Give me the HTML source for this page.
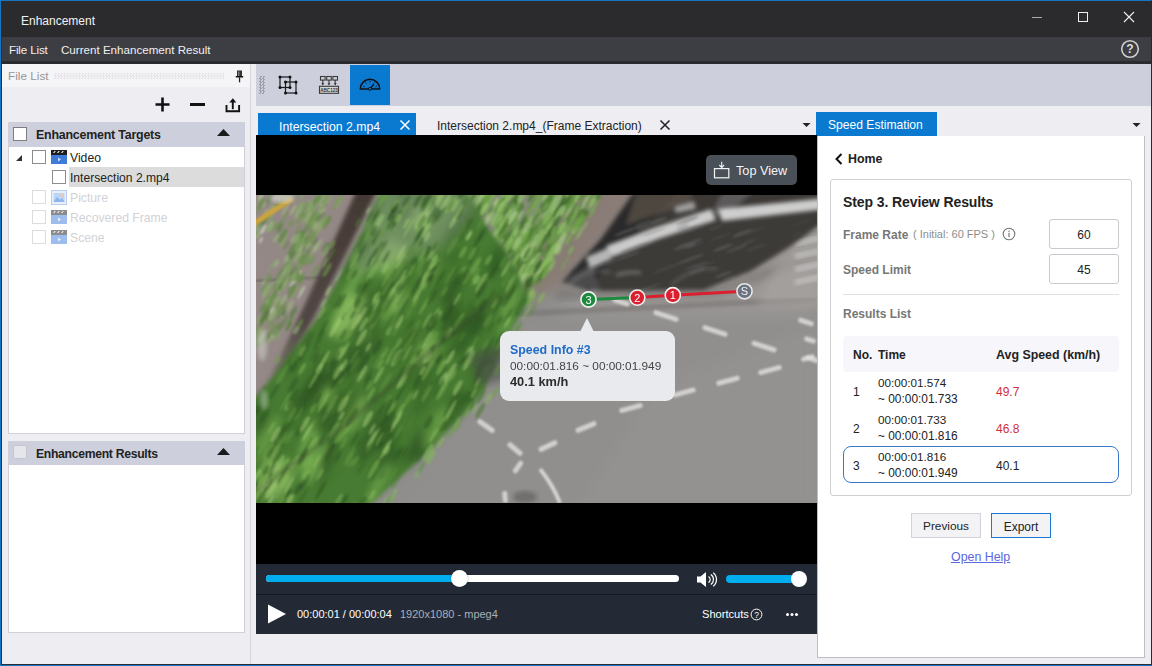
<!DOCTYPE html>
<html><head><meta charset="utf-8">
<style>
*{box-sizing:border-box;margin:0;padding:0}
html,body{width:1152px;height:666px;overflow:hidden;background:#eeeef2;font-family:"Liberation Sans",sans-serif}
.a{position:absolute;white-space:nowrap}
.t{position:absolute;white-space:nowrap;line-height:1}
.cb{position:absolute;width:14px;height:14px;background:#fff;border:1px solid #8d8d8d}
.cbd{position:absolute;width:14px;height:14px;background:#fff;border:1px solid #dcdce0}
</style></head><body>
<!-- window border -->
<div class="a" style="left:0;top:0;width:1152px;height:666px;border:1px solid #1676c4;border-bottom-width:2px;border-right-color:#1d2d3c;background:#eeeef2"></div>
<!-- title bar -->
<div class="a" style="left:1px;top:1px;width:1150px;height:36px;background:#2b2b2d"></div>
<div class="t" style="left:21px;top:15px;color:#f2f2f2;font-size:12px">Enhancement</div>
<div class="a" style="left:1032px;top:16.5px;width:10px;height:1.3px;background:#a8a8a8"></div>
<div class="a" style="left:1078px;top:12px;width:10px;height:10px;border:1px solid #f0f0f0"></div>
<svg class="a" style="left:1123px;top:11px" width="12" height="12" viewBox="0 0 12 12"><path d="M1 1L11 11M11 1L1 11" stroke="#f0f0f0" stroke-width="1.1"/></svg>
<!-- menu bar -->
<div class="a" style="left:1px;top:37px;width:1150px;height:24px;background:#3d3e43"></div>
<div class="a" style="left:1px;top:61px;width:1150px;height:3px;background:#2a2b2e"></div>
<div class="t" style="left:9px;top:44px;color:#f0f0f0;font-size:11.6px;letter-spacing:-0.15px">File List</div>
<div class="t" style="left:61px;top:44px;color:#f0f0f0;font-size:11.6px">Current Enhancement Result</div>
<svg class="a" style="left:1120px;top:39px" width="20" height="20" viewBox="0 0 20 20"><circle cx="10" cy="10" r="8.3" fill="none" stroke="#cfcfcf" stroke-width="1.6"/><text x="10" y="14.3" text-anchor="middle" font-family="Liberation Sans" font-weight="bold" font-size="12" fill="#dcdcdc">?</text></svg>

<!-- left panel -->
<div class="a" style="left:1px;top:64px;width:249px;height:87px;background:#eeeef2"></div>
<div class="a" style="left:1px;top:64px;width:249px;height:23px;background:#f5f5f8"></div>
<div class="a" style="left:250px;top:64px;width:1px;height:600px;background:#d6d6dc"></div>
<div class="t" style="left:8px;top:71px;color:#959595;font-size:11.8px">File List</div>
<div class="a" style="left:54px;top:73px;width:170px;height:6px;background:repeating-conic-gradient(#e4e4e9 0 25%,transparent 0 50%) 0 0/3px 3px"></div>
<svg class="a" style="left:235px;top:70px" width="9" height="13" viewBox="0 0 9 13"><rect x="2" y="0.5" width="5" height="6" fill="#333"/><rect x="3.2" y="1.5" width="1.2" height="4.5" fill="#888"/><rect x="0.8" y="6" width="7.4" height="1.5" fill="#111"/><rect x="3.9" y="7.3" width="1.3" height="5" fill="#222"/></svg>
<!-- + - upload -->
<svg class="a" style="left:154px;top:96px" width="17" height="17" viewBox="0 0 17 17"><path d="M8.5 1.5v14M1.5 8.5h14" stroke="#111" stroke-width="2.6"/></svg>
<div class="a" style="left:190px;top:103px;width:15px;height:3px;background:#111"></div>
<svg class="a" style="left:225px;top:97px" width="16" height="16" viewBox="0 0 16 16"><path d="M1.5 8v6.2h12.6V8" fill="none" stroke="#111" stroke-width="1.9"/><path d="M7.8 12.2V4" stroke="#111" stroke-width="1.9"/><path d="M4.3 5.6L7.8 1.2L11.3 5.6z" fill="#111"/></svg>

<!-- targets -->
<div class="a" style="left:8px;top:122px;width:237px;height:25px;background:#cdd0dc"></div>
<div class="cb" style="left:13px;top:127px;border-color:#7e7e7e"></div>
<div class="t" style="left:36px;top:129px;color:#222;font-size:12.4px;font-weight:bold;letter-spacing:-0.2px">Enhancement Targets</div>
<svg class="a" style="left:216px;top:128px" width="15" height="9" viewBox="0 0 15 9"><path d="M1 8L7.5 1L14 8z" fill="#1a1a1a"/></svg>
<div class="a" style="left:8px;top:147px;width:237px;height:287px;background:#fff;border:1px solid #d0d0d8;border-top:none"></div>
<svg class="a" style="left:15px;top:154px" width="8" height="8" viewBox="0 0 8 8"><path d="M7 1V7H1z" fill="#333"/></svg>
<div class="cb" style="left:32px;top:150px"></div>
<svg class="a vid" style="left:51px;top:150px" width="16" height="14" viewBox="0 0 16 14"><rect x="0" y="0" width="16" height="5" fill="#1e1e1e"/><path d="M2 3l1.5-2h1.3l-1.5 2zM6 3l1.5-2h1.3l-1.5 2zM10 3l1.5-2h1.3l-1.5 2z" fill="#eee"/><rect x="0" y="5" width="16" height="9" fill="#3f7bd8"/><path d="M7 7.5v4l3-2z" fill="#cfe0ff"/></svg>
<div class="t" style="left:70px;top:152px;color:#222;font-size:12.2px">Video</div>
<div class="a" style="left:69px;top:167px;width:175px;height:20px;background:#dcdcdc"></div>
<div class="cb" style="left:52px;top:170px"></div>
<div class="t" style="left:70px;top:172px;color:#222;font-size:12.1px">Intersection 2.mp4</div>
<div class="cbd" style="left:32px;top:190px"></div>
<svg class="a" style="left:51px;top:190px" width="16" height="15" viewBox="0 0 16 15"><rect x="0.5" y="0.5" width="15" height="14" fill="#e8f0fb" stroke="#b9cdf0"/><rect x="2.5" y="3" width="11" height="9" fill="#bcd4f6"/><circle cx="11" cy="5" r="1.6" fill="#f6c8a8"/><path d="M2.5 12L6 7l3 3 2-2 2.5 4z" fill="#8fb3ea"/></svg>
<div class="t" style="left:70px;top:192px;color:#d2d2d6;font-size:12.2px">Picture</div>
<div class="cbd" style="left:32px;top:210px"></div>
<svg class="a" style="left:51px;top:210px" width="16" height="14" viewBox="0 0 16 14"><rect x="0" y="0" width="16" height="5" fill="#8c8c8c"/><path d="M2 3l1.5-2h1.3l-1.5 2zM6 3l1.5-2h1.3l-1.5 2zM10 3l1.5-2h1.3l-1.5 2z" fill="#eee"/><rect x="0" y="5" width="16" height="9" fill="#9dbdee"/><path d="M7 7.5v4l3-2z" fill="#e8f0ff"/></svg>
<div class="t" style="left:70px;top:212px;color:#d2d2d6;font-size:12.2px">Recovered Frame</div>
<div class="cbd" style="left:32px;top:230px"></div>
<svg class="a" style="left:51px;top:230px" width="16" height="14" viewBox="0 0 16 14"><rect x="0" y="0" width="16" height="5" fill="#8c8c8c"/><path d="M2 3l1.5-2h1.3l-1.5 2zM6 3l1.5-2h1.3l-1.5 2zM10 3l1.5-2h1.3l-1.5 2z" fill="#eee"/><rect x="0" y="5" width="16" height="9" fill="#9dbdee"/><path d="M7 7.5v4l3-2z" fill="#e8f0ff"/></svg>
<div class="t" style="left:70px;top:232px;color:#d2d2d6;font-size:12.2px">Scene</div>

<!-- results -->
<div class="a" style="left:8px;top:441px;width:237px;height:24px;background:#cdd0dc"></div>
<div class="cb" style="left:13px;top:445px;background:#e4e6ec;border-color:#c4c6cc"></div>
<div class="t" style="left:36px;top:448px;color:#222;font-size:12.2px;font-weight:bold;letter-spacing:-0.3px">Enhancement Results</div>
<svg class="a" style="left:216px;top:447px" width="15" height="9" viewBox="0 0 15 9"><path d="M1 8L7.5 1L14 8z" fill="#1a1a1a"/></svg>
<div class="a" style="left:8px;top:465px;width:237px;height:168px;background:#fff;border:1px solid #d0d0d8;border-top:none"></div>

<!-- toolbar -->
<div class="a" style="left:256px;top:64px;width:895px;height:42px;background:#cdd0dc"></div>
<div class="a" style="left:259px;top:76px;width:6px;height:18px;background:repeating-conic-gradient(#9fa1a8 0 25%,transparent 0 50%) 0 0/3px 3px"></div>
<svg class="a" style="left:276px;top:74px" width="24" height="22" viewBox="0 0 24 22"><rect x="4" y="3" width="10" height="10.5" fill="none" stroke="#1a1a1a" stroke-width="1.2"/><rect x="9.5" y="8" width="10.5" height="11" fill="none" stroke="#1a1a1a" stroke-width="1.2"/><g fill="#111"><circle cx="4" cy="3" r="1.5"/><circle cx="14" cy="3" r="1.5"/><circle cx="4" cy="13.5" r="1.5"/><circle cx="14" cy="13.5" r="1.5"/><circle cx="9.5" cy="8" r="1.5"/><circle cx="20" cy="8" r="1.5"/><circle cx="9.5" cy="19" r="1.5"/><circle cx="20" cy="19" r="1.5"/></g></svg>
<svg class="a" style="left:318px;top:75px" width="22" height="20" viewBox="0 0 22 20"><g fill="none" stroke="#3a3a3a" stroke-width="1.1"><rect x="2.5" y="1.5" width="4.6" height="3.6"/><rect x="8.7" y="1.5" width="4.6" height="3.6"/><rect x="14.9" y="1.5" width="4.6" height="3.6"/><path d="M4.8 5.1v4M11 5.1v4M17.2 5.1v4"/><rect x="1.5" y="11.3" width="19" height="7" fill="#d6d6d6"/></g><g fill="#333"><path d="M3.3 8.3l1.5 2.2 1.5-2.2zM9.5 8.3l1.5 2.2 1.5-2.2zM15.7 8.3l1.5 2.2 1.5-2.2z"/></g><text x="11" y="16.9" text-anchor="middle" font-family="Liberation Sans" font-weight="bold" font-size="4.6" fill="#333">ABC123</text></svg>
<div class="a" style="left:350px;top:64.5px;width:40px;height:40.5px;background:#0a79d0"></div>
<svg class="a" style="left:358px;top:76px" width="24" height="16" viewBox="0 0 24 16"><path d="M2.3 13A9.7 9.7 0 0 1 21.7 13z" fill="none" stroke="#111" stroke-width="1.5" stroke-linejoin="round"/><path d="M5.2 10.2l1.3 .7M7.5 6.6l.9 1M12 5v1.4M16.5 6.6l-.9 1M18.8 10.2l-1.3 .7" stroke="#111" stroke-width="1"/><path d="M12 12.8L15.8 8" stroke="#111" stroke-width="1.3"/><circle cx="12" cy="12.8" r="1.5" fill="#0a79d0" stroke="#111" stroke-width="1"/></svg>

<!-- tabs -->
<div class="a" style="left:258px;top:113px;width:158px;height:22px;background:#0a79d0"></div>
<div class="t" style="left:279px;top:121px;color:#fff;font-size:12.3px">Intersection 2.mp4</div>
<svg class="a" style="left:399px;top:119px" width="12" height="12" viewBox="0 0 12 12"><path d="M1.5 1.5L10.5 10.5M10.5 1.5L1.5 10.5" stroke="#fff" stroke-width="1.5"/></svg>
<div class="t" style="left:437px;top:120px;color:#222;font-size:12px">Intersection 2.mp4_(Frame Extraction)</div>
<svg class="a" style="left:659px;top:119px" width="12" height="12" viewBox="0 0 12 12"><path d="M1.5 1.5L10.5 10.5M10.5 1.5L1.5 10.5" stroke="#222" stroke-width="1.5"/></svg>
<svg class="a" style="left:802px;top:122px" width="9" height="6" viewBox="0 0 9 6"><path d="M0.5 1h8L4.5 5z" fill="#222"/></svg>
<div class="a" style="left:816px;top:112px;width:121px;height:24px;background:#0a79d0"></div>
<div class="t" style="left:828px;top:119px;color:#fff;font-size:12.1px">Speed Estimation</div>
<svg class="a" style="left:1132px;top:122px" width="9" height="6" viewBox="0 0 9 6"><path d="M0.5 1h8L4.5 5z" fill="#222"/></svg>

<!-- video -->
<div class="a" style="left:256px;top:135px;width:561px;height:429px;background:#000"></div>
<div id="img" class="a" style="left:256px;top:195px;width:561px;height:308px;background:#8f8d8b;overflow:hidden"><svg width="561" height="308" viewBox="0 0 561 308" style="display:block">
<defs><filter id="b2" x="-10%" y="-10%" width="120%" height="120%"><feGaussianBlur stdDeviation="2"/></filter><filter id="b4" x="-20%" y="-20%" width="140%" height="140%"><feGaussianBlur stdDeviation="4"/></filter><filter id="b6" x="-20%" y="-20%" width="140%" height="140%"><feGaussianBlur stdDeviation="7"/></filter><filter id="b1" x="-20%" y="-20%" width="140%" height="140%"><feGaussianBlur stdDeviation="1"/></filter><linearGradient id="tg" x1="0" y1="0" x2="0" y2="1"><stop offset="0" stop-color="#3e332f" stop-opacity=".95"/><stop offset=".65" stop-color="#4a403c" stop-opacity=".9"/><stop offset="1" stop-color="#45503a" stop-opacity="0"/></linearGradient><mask id="tc" maskUnits="userSpaceOnUse" x="-20" y="-20" width="600" height="350"><polygon points="128.0,-10.0 206.0,-10.0 230.0,30.0 254.0,63.0 273.0,105.0 254.0,137.0 228.0,195.0 202.0,225.0 163.0,265.0 105.0,318.0 -10.0,318.0 -10.0,215.0 28.0,168.0 62.0,122.0 100.0,50.0" fill="#fff" filter="url(#b6)"/></mask></defs>
<rect width="561" height="308" fill="#8f8e8c"/>
<g filter="url(#b6)">
<polygon points="-10,-10 128,-10 40,175 -10,215" fill="#948886"/>
<polygon points="320,-10 392,-10 310,88 255,115 270,60" fill="#8a7c76"/>
<polygon points="250,150 561,70 561,318 150,318" fill="#918f8d"/>
<polygon points="400,190 561,130 561,318 320,318" fill="#939290"/>
<polygon points="380,40 561,0 561,120 300,120" fill="#9a9795"/>
</g>
<path d="M-5,86 L70,82" stroke="#6e6663" stroke-width="2.5" filter="url(#b1)" opacity=".8"/>
<path d="M235,120 L400,112 L561,104" stroke="#6f6c6a" stroke-width="4" fill="none" filter="url(#b2)" opacity=".75"/>
<path d="M300,100 L460,97 L561,60" stroke="#5e5b59" stroke-width="6" fill="none" filter="url(#b4)" opacity=".6"/>
<g filter="url(#b1)" fill="#e2e0de">
<rect x="397.0" y="118.5" width="26" height="5" rx="2" opacity=".8" transform="rotate(18 410.0 121.0)"/>
<rect x="446.0" y="133.5" width="26" height="5" rx="2" opacity=".8" transform="rotate(18 459.0 136.0)"/>
<rect x="495.0" y="149.1" width="26" height="5" rx="2" opacity=".8" transform="rotate(18 508.0 151.6)"/>
<rect x="549.0" y="161.5" width="14" height="5" rx="2" opacity=".8" transform="rotate(18 556.0 164.0)"/>
<rect x="356.0" y="104.5" width="18" height="5" rx="2" opacity=".8" transform="rotate(18 365.0 107.0)"/>
<rect x="363.0" y="210.5" width="24" height="5" rx="2" opacity=".8" transform="rotate(-15 375.0 213.0)"/>
<rect x="416.0" y="195.0" width="24" height="5" rx="2" opacity=".8" transform="rotate(-15 428.0 197.5)"/>
<rect x="460.0" y="183.2" width="24" height="5" rx="2" opacity=".8" transform="rotate(-15 472.0 185.7)"/>
<rect x="502.0" y="172.5" width="24" height="5" rx="2" opacity=".8" transform="rotate(-15 514.0 175.0)"/>
<rect x="545.0" y="160.5" width="14" height="5" rx="2" opacity=".8" transform="rotate(-15 552.0 163.0)"/>
<rect x="319.0" y="229.5" width="22" height="5" rx="2" opacity=".8" transform="rotate(-22 330.0 232.0)"/>
<rect x="282.0" y="248.5" width="20" height="5" rx="2" opacity=".8" transform="rotate(-25 292.0 251.0)"/>
<rect x="220.0" y="228.5" width="20" height="5" rx="2" opacity=".8" transform="rotate(35 230.0 231.0)"/>
<rect x="250.0" y="251.5" width="18" height="5" rx="2" opacity=".8" transform="rotate(40 259.0 254.0)"/>
<rect x="255.0" y="269.5" width="14" height="5" rx="2" opacity=".8" transform="rotate(-55 262.0 272.0)"/>
<rect x="243.0" y="299.5" width="12" height="5" rx="2" opacity=".8" transform="rotate(85 249.0 302.0)"/>
<rect x="542.0" y="124.5" width="16" height="5" rx="2" opacity=".8" transform="rotate(18 550.0 127.0)"/>
<rect x="548.0" y="142.5" width="12" height="5" rx="2" opacity=".8" transform="rotate(18 554.0 145.0)"/>
</g>
<path d="M284,274 Q297,290 304,308" stroke="#e2e0de" stroke-width="4" fill="none" filter="url(#b1)" opacity=".85"/>
<ellipse cx="269" cy="302" rx="12" ry="6" fill="#5a5a58" opacity=".6" filter="url(#b2)"/>
<polygon points="520,70 570,30 570,110 500,110" fill="#a8a5a3" opacity=".6" filter="url(#b4)"/>
<rect x="538" y="30" width="30" height="6" fill="#cfcdcb" opacity=".6" filter="url(#b2)" transform="rotate(-12 550 30)"/>
<rect x="538" y="43" width="30" height="6" fill="#cfcdcb" opacity=".6" filter="url(#b2)" transform="rotate(-12 550 43)"/>
<rect x="538" y="56" width="30" height="6" fill="#cfcdcb" opacity=".6" filter="url(#b2)" transform="rotate(-12 550 56)"/>
<rect x="538" y="69" width="30" height="6" fill="#cfcdcb" opacity=".6" filter="url(#b2)" transform="rotate(-12 550 69)"/>
<rect x="538" y="82" width="30" height="6" fill="#cfcdcb" opacity=".6" filter="url(#b2)" transform="rotate(-12 550 82)"/>
<g filter="url(#b2)"><polygon points="306.0,87.0 344.0,96.0 448.0,95.0 495.0,76.0 532.0,53.0 570.0,26.0 570.0,-10.0 383.0,-10.0 345.0,44.0" fill="#3d3b39"/>
<polygon points="306,87 345,44 383,-10 430,-10 380,40 350,70 335,96" fill="#2a2a2a"/>
<polygon points="383,-10 470,-10 420,12 370,30" fill="#5e524a" opacity=".7"/>
<polygon points="440,-10 570,-10 570,6 430,18" fill="#3a3836"/>
<polygon points="470,-10 505,-10 470,20 455,20" fill="#6a6a6a" opacity=".7"/>
<polygon points="306,87 335,70 345,96" fill="#4c4c4c"/>
</g>
<g filter="url(#b2)" fill="none" stroke="#8a8a8a" stroke-width="2.5" opacity=".45">
<path d="M312,92 Q330,70 355,78"/><path d="M415,90 Q440,70 462,74"/><path d="M360,80 Q375,76 385,78" stroke="#cfcfcf"/>
</g>
<g filter="url(#b2)">
<polygon points="350,51 398,33 455,14 460,25 402,44 356,62" fill="#d8d8d8" opacity=".92"/>
<polygon points="462,14 570,3 570,14 466,26" fill="#dedede" opacity=".9"/>
<polygon points="330,62 352,53 356,64 334,74" fill="#cfcfcf" opacity=".85"/>
<polygon points="418,12 438,6 440,14 420,18" fill="#cccccc" opacity=".7"/>
</g>
<g filter="url(#b1)" opacity=".5">
<ellipse cx="434.0" cy="64.2" rx="15.2" ry="1.4" fill="#777" opacity=".7" transform="rotate(-20 434.0 64.2)"/>
<ellipse cx="372.5" cy="60.8" rx="12.3" ry="1.8" fill="#666" opacity=".7" transform="rotate(-20 372.5 60.8)"/>
<ellipse cx="432.7" cy="34.9" rx="11.4" ry="1.9" fill="#666" opacity=".7" transform="rotate(-20 432.7 34.9)"/>
<ellipse cx="467.0" cy="52.7" rx="10.5" ry="1.7" fill="#777" opacity=".7" transform="rotate(-20 467.0 52.7)"/>
<ellipse cx="473.3" cy="83.2" rx="6.6" ry="0.8" fill="#777" opacity=".7" transform="rotate(-20 473.3 83.2)"/>
<ellipse cx="467.9" cy="79.5" rx="9.3" ry="1.5" fill="#777" opacity=".7" transform="rotate(-20 467.9 79.5)"/>
<ellipse cx="449.4" cy="69.8" rx="11.0" ry="1.6" fill="#555" opacity=".7" transform="rotate(-20 449.4 69.8)"/>
<ellipse cx="480.6" cy="53.5" rx="11.5" ry="1.9" fill="#666" opacity=".7" transform="rotate(-20 480.6 53.5)"/>
<ellipse cx="492.8" cy="47.1" rx="8.3" ry="1.1" fill="#666" opacity=".7" transform="rotate(-20 492.8 47.1)"/>
<ellipse cx="459.5" cy="32.6" rx="7.1" ry="1.1" fill="#666" opacity=".7" transform="rotate(-20 459.5 32.6)"/>
<ellipse cx="346.8" cy="69.1" rx="13.8" ry="1.1" fill="#666" opacity=".7" transform="rotate(-20 346.8 69.1)"/>
<ellipse cx="401.6" cy="26.1" rx="10.1" ry="1.9" fill="#777" opacity=".7" transform="rotate(-20 401.6 26.1)"/>
<ellipse cx="386.7" cy="32.1" rx="6.6" ry="1.8" fill="#777" opacity=".7" transform="rotate(-20 386.7 32.1)"/>
<ellipse cx="486.9" cy="38.2" rx="11.1" ry="2.0" fill="#777" opacity=".7" transform="rotate(-20 486.9 38.2)"/>
<ellipse cx="426.4" cy="51.9" rx="9.9" ry="2.0" fill="#666" opacity=".7" transform="rotate(-20 426.4 51.9)"/>
<ellipse cx="392.1" cy="93.0" rx="14.0" ry="1.2" fill="#666" opacity=".7" transform="rotate(-20 392.1 93.0)"/>
<ellipse cx="378.5" cy="52.6" rx="14.5" ry="1.6" fill="#666" opacity=".7" transform="rotate(-20 378.5 52.6)"/>
<ellipse cx="431.6" cy="25.7" rx="12.1" ry="1.8" fill="#555" opacity=".7" transform="rotate(-20 431.6 25.7)"/>
<ellipse cx="464.0" cy="42.0" rx="12.0" ry="1.2" fill="#555" opacity=".7" transform="rotate(-20 464.0 42.0)"/>
<ellipse cx="359.3" cy="66.1" rx="14.3" ry="1.0" fill="#555" opacity=".7" transform="rotate(-20 359.3 66.1)"/>
<ellipse cx="372.1" cy="35.8" rx="15.1" ry="1.8" fill="#777" opacity=".7" transform="rotate(-20 372.1 35.8)"/>
<ellipse cx="496.8" cy="36.1" rx="12.3" ry="1.5" fill="#555" opacity=".7" transform="rotate(-20 496.8 36.1)"/>
<ellipse cx="426.9" cy="32.3" rx="6.4" ry="2.0" fill="#777" opacity=".7" transform="rotate(-20 426.9 32.3)"/>
<ellipse cx="500.2" cy="52.4" rx="10.2" ry="1.9" fill="#555" opacity=".7" transform="rotate(-20 500.2 52.4)"/>
<ellipse cx="397.5" cy="37.3" rx="13.2" ry="0.9" fill="#777" opacity=".7" transform="rotate(-20 397.5 37.3)"/>
<ellipse cx="440.2" cy="70.7" rx="12.2" ry="0.9" fill="#777" opacity=".7" transform="rotate(-20 440.2 70.7)"/>
<ellipse cx="541.0" cy="39.3" rx="6.2" ry="1.1" fill="#555" opacity=".7" transform="rotate(-20 541.0 39.3)"/>
<ellipse cx="387.3" cy="28.3" rx="8.8" ry="1.4" fill="#777" opacity=".7" transform="rotate(-20 387.3 28.3)"/>
<ellipse cx="433.6" cy="48.2" rx="13.3" ry="1.4" fill="#777" opacity=".7" transform="rotate(-20 433.6 48.2)"/>
<ellipse cx="439.2" cy="50.0" rx="9.1" ry="0.8" fill="#666" opacity=".7" transform="rotate(-20 439.2 50.0)"/>
<ellipse cx="440.9" cy="76.1" rx="9.2" ry="2.0" fill="#666" opacity=".7" transform="rotate(-20 440.9 76.1)"/>
<ellipse cx="434.2" cy="50.7" rx="6.4" ry="1.9" fill="#777" opacity=".7" transform="rotate(-20 434.2 50.7)"/>
<ellipse cx="410.9" cy="73.0" rx="15.0" ry="1.8" fill="#555" opacity=".7" transform="rotate(-20 410.9 73.0)"/>
<ellipse cx="547.2" cy="27.1" rx="11.0" ry="0.8" fill="#555" opacity=".7" transform="rotate(-20 547.2 27.1)"/>
<ellipse cx="417.2" cy="25.9" rx="6.7" ry="0.9" fill="#666" opacity=".7" transform="rotate(-20 417.2 25.9)"/>
</g>
<path d="M103,-10 L124,-10 L58,122 L36,165 L14,205 L2,205 L24,162 L44,120z" fill="url(#tg)" filter="url(#b2)"/>
<g filter="url(#b1)">
<ellipse cx="28.3" cy="-2.3" rx="3.9" ry="2.0" fill="#6a8c4a" opacity=".7" transform="rotate(-60 28.3 -2.3)"/>
<ellipse cx="59.8" cy="51.7" rx="7.0" ry="1.3" fill="#a6bc88" opacity=".7" transform="rotate(-60 59.8 51.7)"/>
<ellipse cx="12.7" cy="111.7" rx="7.3" ry="2.5" fill="#7a9a5a" opacity=".7" transform="rotate(-60 12.7 111.7)"/>
<ellipse cx="4.7" cy="2.4" rx="3.2" ry="2.1" fill="#c4ccbc" opacity=".7" transform="rotate(-60 4.7 2.4)"/>
<ellipse cx="69.2" cy="67.6" rx="6.8" ry="1.6" fill="#7a9a5a" opacity=".7" transform="rotate(-60 69.2 67.6)"/>
<ellipse cx="9.2" cy="120.8" rx="8.8" ry="2.1" fill="#6a8c4a" opacity=".7" transform="rotate(-60 9.2 120.8)"/>
<ellipse cx="20.9" cy="106.7" rx="7.3" ry="2.2" fill="#8aae66" opacity=".7" transform="rotate(-60 20.9 106.7)"/>
<ellipse cx="64.5" cy="3.5" rx="4.6" ry="1.6" fill="#8aae66" opacity=".7" transform="rotate(-60 64.5 3.5)"/>
<ellipse cx="112.8" cy="15.5" rx="3.8" ry="1.7" fill="#a6bc88" opacity=".7" transform="rotate(-60 112.8 15.5)"/>
<ellipse cx="44.0" cy="128.7" rx="5.8" ry="2.0" fill="#6a8c4a" opacity=".7" transform="rotate(-60 44.0 128.7)"/>
<ellipse cx="21.6" cy="164.7" rx="4.3" ry="2.4" fill="#7a9a5a" opacity=".7" transform="rotate(-60 21.6 164.7)"/>
<ellipse cx="23.8" cy="118.8" rx="8.0" ry="1.9" fill="#6a8c4a" opacity=".7" transform="rotate(-60 23.8 118.8)"/>
<ellipse cx="16.4" cy="115.8" rx="4.5" ry="2.1" fill="#c4ccbc" opacity=".7" transform="rotate(-60 16.4 115.8)"/>
<ellipse cx="7.1" cy="34.2" rx="5.8" ry="2.5" fill="#c4ccbc" opacity=".7" transform="rotate(-60 7.1 34.2)"/>
<ellipse cx="27.0" cy="110.9" rx="5.6" ry="2.3" fill="#6a8c4a" opacity=".7" transform="rotate(-60 27.0 110.9)"/>
<ellipse cx="63.8" cy="32.5" rx="8.2" ry="1.9" fill="#8aae66" opacity=".7" transform="rotate(-60 63.8 32.5)"/>
<ellipse cx="71.3" cy="27.1" rx="8.4" ry="1.5" fill="#6a8c4a" opacity=".7" transform="rotate(-60 71.3 27.1)"/>
<ellipse cx="110.4" cy="26.5" rx="3.8" ry="1.1" fill="#8aae66" opacity=".7" transform="rotate(-60 110.4 26.5)"/>
<ellipse cx="45.4" cy="97.2" rx="7.7" ry="1.2" fill="#c4ccbc" opacity=".7" transform="rotate(-60 45.4 97.2)"/>
<ellipse cx="-2.7" cy="42.2" rx="8.5" ry="2.5" fill="#6a8c4a" opacity=".7" transform="rotate(-60 -2.7 42.2)"/>
<ellipse cx="10.0" cy="113.8" rx="6.0" ry="2.1" fill="#6a8c4a" opacity=".7" transform="rotate(-60 10.0 113.8)"/>
<ellipse cx="19.6" cy="11.6" rx="3.1" ry="2.2" fill="#7a9a5a" opacity=".7" transform="rotate(-60 19.6 11.6)"/>
<ellipse cx="57.6" cy="39.5" rx="4.2" ry="2.3" fill="#7a9a5a" opacity=".7" transform="rotate(-60 57.6 39.5)"/>
<ellipse cx="7.4" cy="9.6" rx="3.5" ry="1.2" fill="#a6bc88" opacity=".7" transform="rotate(-60 7.4 9.6)"/>
<ellipse cx="22.3" cy="82.7" rx="8.1" ry="1.3" fill="#7a9a5a" opacity=".7" transform="rotate(-60 22.3 82.7)"/>
<ellipse cx="47.7" cy="40.9" rx="3.6" ry="2.3" fill="#8aae66" opacity=".7" transform="rotate(-60 47.7 40.9)"/>
<ellipse cx="37.1" cy="14.9" rx="6.4" ry="1.3" fill="#a6bc88" opacity=".7" transform="rotate(-60 37.1 14.9)"/>
<ellipse cx="71.0" cy="75.1" rx="8.5" ry="2.2" fill="#6a8c4a" opacity=".7" transform="rotate(-60 71.0 75.1)"/>
<ellipse cx="76.1" cy="49.5" rx="5.0" ry="2.1" fill="#6a8c4a" opacity=".7" transform="rotate(-60 76.1 49.5)"/>
<ellipse cx="-2.0" cy="139.6" rx="4.5" ry="1.6" fill="#8aae66" opacity=".7" transform="rotate(-60 -2.0 139.6)"/>
<ellipse cx="1.6" cy="40.9" rx="3.1" ry="1.4" fill="#a6bc88" opacity=".7" transform="rotate(-60 1.6 40.9)"/>
<ellipse cx="30.8" cy="75.1" rx="6.0" ry="2.5" fill="#c4ccbc" opacity=".7" transform="rotate(-60 30.8 75.1)"/>
<ellipse cx="4.9" cy="135.4" rx="5.3" ry="2.5" fill="#7a9a5a" opacity=".7" transform="rotate(-60 4.9 135.4)"/>
<ellipse cx="72.6" cy="96.0" rx="5.5" ry="1.8" fill="#a6bc88" opacity=".7" transform="rotate(-60 72.6 96.0)"/>
<ellipse cx="0.6" cy="31.8" rx="3.3" ry="1.5" fill="#a6bc88" opacity=".7" transform="rotate(-60 0.6 31.8)"/>
<ellipse cx="49.2" cy="22.7" rx="5.1" ry="1.2" fill="#7a9a5a" opacity=".7" transform="rotate(-60 49.2 22.7)"/>
<ellipse cx="83.7" cy="80.5" rx="7.9" ry="1.2" fill="#c4ccbc" opacity=".7" transform="rotate(-60 83.7 80.5)"/>
<ellipse cx="-3.8" cy="56.0" rx="6.7" ry="1.2" fill="#7a9a5a" opacity=".7" transform="rotate(-60 -3.8 56.0)"/>
<ellipse cx="65.4" cy="12.0" rx="8.5" ry="1.3" fill="#7a9a5a" opacity=".7" transform="rotate(-60 65.4 12.0)"/>
<ellipse cx="59.3" cy="26.3" rx="7.8" ry="1.7" fill="#7a9a5a" opacity=".7" transform="rotate(-60 59.3 26.3)"/>
<ellipse cx="14.6" cy="31.1" rx="5.0" ry="1.9" fill="#c4ccbc" opacity=".7" transform="rotate(-60 14.6 31.1)"/>
<ellipse cx="68.3" cy="108.9" rx="4.8" ry="2.2" fill="#a6bc88" opacity=".7" transform="rotate(-60 68.3 108.9)"/>
<ellipse cx="4.9" cy="45.1" rx="3.5" ry="1.5" fill="#c4ccbc" opacity=".7" transform="rotate(-60 4.9 45.1)"/>
<ellipse cx="36.3" cy="88.9" rx="4.5" ry="1.6" fill="#c4ccbc" opacity=".7" transform="rotate(-60 36.3 88.9)"/>
<ellipse cx="42.5" cy="80.4" rx="6.5" ry="2.3" fill="#a6bc88" opacity=".7" transform="rotate(-60 42.5 80.4)"/>
</g>
<g filter="url(#b1)">
<ellipse cx="49.4" cy="60.7" rx="7.8" ry="2.6" fill="#6f9450" opacity=".55" transform="rotate(-60 49.4 60.7)"/>
<ellipse cx="59.6" cy="46.6" rx="4.3" ry="1.5" fill="#4e7438" opacity=".55" transform="rotate(-60 59.6 46.6)"/>
<ellipse cx="69.6" cy="52.6" rx="6.7" ry="2.5" fill="#4e7438" opacity=".55" transform="rotate(-60 69.6 52.6)"/>
<ellipse cx="66.2" cy="13.6" rx="8.5" ry="1.3" fill="#6f9450" opacity=".55" transform="rotate(-60 66.2 13.6)"/>
<ellipse cx="38.0" cy="97.6" rx="7.6" ry="2.0" fill="#83a862" opacity=".55" transform="rotate(-60 38.0 97.6)"/>
<ellipse cx="18.3" cy="139.0" rx="6.0" ry="1.7" fill="#9cb880" opacity=".55" transform="rotate(-60 18.3 139.0)"/>
<ellipse cx="-2.8" cy="138.7" rx="7.5" ry="2.7" fill="#6f9450" opacity=".55" transform="rotate(-60 -2.8 138.7)"/>
<ellipse cx="35.4" cy="54.8" rx="8.3" ry="2.5" fill="#5d8442" opacity=".55" transform="rotate(-60 35.4 54.8)"/>
<ellipse cx="32.3" cy="131.3" rx="5.8" ry="1.2" fill="#4e7438" opacity=".55" transform="rotate(-60 32.3 131.3)"/>
<ellipse cx="52.3" cy="8.0" rx="5.2" ry="1.5" fill="#83a862" opacity=".55" transform="rotate(-60 52.3 8.0)"/>
<ellipse cx="22.2" cy="91.0" rx="5.5" ry="2.8" fill="#4e7438" opacity=".55" transform="rotate(-60 22.2 91.0)"/>
<ellipse cx="59.2" cy="4.7" rx="5.5" ry="1.4" fill="#6f9450" opacity=".55" transform="rotate(-60 59.2 4.7)"/>
<ellipse cx="16.1" cy="141.3" rx="8.5" ry="1.3" fill="#9cb880" opacity=".55" transform="rotate(-60 16.1 141.3)"/>
<ellipse cx="53.9" cy="11.5" rx="6.9" ry="2.2" fill="#83a862" opacity=".55" transform="rotate(-60 53.9 11.5)"/>
<ellipse cx="31.0" cy="63.6" rx="4.9" ry="2.4" fill="#9cb880" opacity=".55" transform="rotate(-60 31.0 63.6)"/>
<ellipse cx="50.1" cy="45.2" rx="6.4" ry="1.6" fill="#4e7438" opacity=".55" transform="rotate(-60 50.1 45.2)"/>
<ellipse cx="16.4" cy="133.5" rx="6.4" ry="1.6" fill="#6f9450" opacity=".55" transform="rotate(-60 16.4 133.5)"/>
<ellipse cx="68.3" cy="4.9" rx="8.9" ry="2.5" fill="#9cb880" opacity=".55" transform="rotate(-60 68.3 4.9)"/>
<ellipse cx="20.7" cy="113.4" rx="8.4" ry="2.6" fill="#6f9450" opacity=".55" transform="rotate(-60 20.7 113.4)"/>
<ellipse cx="34.8" cy="64.0" rx="7.0" ry="1.5" fill="#9cb880" opacity=".55" transform="rotate(-60 34.8 64.0)"/>
<ellipse cx="61.2" cy="21.2" rx="4.7" ry="2.4" fill="#4e7438" opacity=".55" transform="rotate(-60 61.2 21.2)"/>
<ellipse cx="34.8" cy="93.9" rx="4.8" ry="2.4" fill="#6f9450" opacity=".55" transform="rotate(-60 34.8 93.9)"/>
<ellipse cx="83.8" cy="4.4" rx="5.8" ry="2.2" fill="#6f9450" opacity=".55" transform="rotate(-60 83.8 4.4)"/>
<ellipse cx="20.3" cy="68.5" rx="4.4" ry="2.4" fill="#9cb880" opacity=".55" transform="rotate(-60 20.3 68.5)"/>
<ellipse cx="28.9" cy="78.4" rx="8.6" ry="1.3" fill="#83a862" opacity=".55" transform="rotate(-60 28.9 78.4)"/>
<ellipse cx="10.3" cy="120.6" rx="6.1" ry="2.0" fill="#4e7438" opacity=".55" transform="rotate(-60 10.3 120.6)"/>
<ellipse cx="11.6" cy="142.4" rx="5.5" ry="1.9" fill="#4e7438" opacity=".55" transform="rotate(-60 11.6 142.4)"/>
<ellipse cx="17.7" cy="103.4" rx="4.5" ry="1.8" fill="#83a862" opacity=".55" transform="rotate(-60 17.7 103.4)"/>
<ellipse cx="58.8" cy="76.5" rx="8.3" ry="2.3" fill="#6f9450" opacity=".55" transform="rotate(-60 58.8 76.5)"/>
<ellipse cx="32.8" cy="67.5" rx="6.3" ry="1.2" fill="#6f9450" opacity=".55" transform="rotate(-60 32.8 67.5)"/>
<ellipse cx="3.6" cy="145.8" rx="7.1" ry="2.7" fill="#5d8442" opacity=".55" transform="rotate(-60 3.6 145.8)"/>
<ellipse cx="15.5" cy="106.3" rx="6.8" ry="1.3" fill="#9cb880" opacity=".55" transform="rotate(-60 15.5 106.3)"/>
<ellipse cx="54.3" cy="25.8" rx="6.8" ry="2.4" fill="#5d8442" opacity=".55" transform="rotate(-60 54.3 25.8)"/>
<ellipse cx="54.7" cy="50.1" rx="4.5" ry="2.2" fill="#6f9450" opacity=".55" transform="rotate(-60 54.7 50.1)"/>
<ellipse cx="56.7" cy="17.1" rx="8.2" ry="2.1" fill="#6f9450" opacity=".55" transform="rotate(-60 56.7 17.1)"/>
<ellipse cx="59.7" cy="10.9" rx="8.9" ry="1.9" fill="#83a862" opacity=".55" transform="rotate(-60 59.7 10.9)"/>
<ellipse cx="10.1" cy="107.6" rx="7.2" ry="2.4" fill="#83a862" opacity=".55" transform="rotate(-60 10.1 107.6)"/>
<ellipse cx="27.6" cy="127.6" rx="8.6" ry="2.2" fill="#5d8442" opacity=".55" transform="rotate(-60 27.6 127.6)"/>
<ellipse cx="15.7" cy="102.9" rx="7.3" ry="2.2" fill="#83a862" opacity=".55" transform="rotate(-60 15.7 102.9)"/>
<ellipse cx="64.6" cy="-0.1" rx="5.5" ry="1.9" fill="#5d8442" opacity=".55" transform="rotate(-60 64.6 -0.1)"/>
<ellipse cx="33.2" cy="82.6" rx="7.1" ry="1.5" fill="#6f9450" opacity=".55" transform="rotate(-60 33.2 82.6)"/>
<ellipse cx="28.8" cy="116.2" rx="5.2" ry="2.2" fill="#4e7438" opacity=".55" transform="rotate(-60 28.8 116.2)"/>
<ellipse cx="33.1" cy="72.0" rx="6.8" ry="1.2" fill="#83a862" opacity=".55" transform="rotate(-60 33.1 72.0)"/>
<ellipse cx="24.1" cy="94.8" rx="5.2" ry="2.1" fill="#83a862" opacity=".55" transform="rotate(-60 24.1 94.8)"/>
<ellipse cx="10.1" cy="96.3" rx="8.4" ry="1.9" fill="#9cb880" opacity=".55" transform="rotate(-60 10.1 96.3)"/>
<ellipse cx="37.6" cy="116.6" rx="6.7" ry="2.1" fill="#4e7438" opacity=".55" transform="rotate(-60 37.6 116.6)"/>
<ellipse cx="34.1" cy="80.8" rx="7.0" ry="1.4" fill="#5d8442" opacity=".55" transform="rotate(-60 34.1 80.8)"/>
<ellipse cx="32.7" cy="131.2" rx="5.2" ry="2.1" fill="#5d8442" opacity=".55" transform="rotate(-60 32.7 131.2)"/>
<ellipse cx="13.9" cy="123.7" rx="6.0" ry="2.5" fill="#6f9450" opacity=".55" transform="rotate(-60 13.9 123.7)"/>
<ellipse cx="20.6" cy="141.5" rx="5.5" ry="2.3" fill="#83a862" opacity=".55" transform="rotate(-60 20.6 141.5)"/>
<ellipse cx="11.8" cy="102.8" rx="4.8" ry="1.9" fill="#6f9450" opacity=".55" transform="rotate(-60 11.8 102.8)"/>
<ellipse cx="79.8" cy="9.3" rx="6.8" ry="1.5" fill="#6f9450" opacity=".55" transform="rotate(-60 79.8 9.3)"/>
<ellipse cx="32.6" cy="75.3" rx="7.6" ry="2.5" fill="#6f9450" opacity=".55" transform="rotate(-60 32.6 75.3)"/>
<ellipse cx="56.3" cy="65.3" rx="6.3" ry="1.9" fill="#6f9450" opacity=".55" transform="rotate(-60 56.3 65.3)"/>
<ellipse cx="23.3" cy="88.0" rx="8.4" ry="1.9" fill="#9cb880" opacity=".55" transform="rotate(-60 23.3 88.0)"/>
<ellipse cx="-7.1" cy="124.5" rx="4.6" ry="1.4" fill="#9cb880" opacity=".55" transform="rotate(-60 -7.1 124.5)"/>
<ellipse cx="-2.0" cy="134.2" rx="5.6" ry="1.3" fill="#6f9450" opacity=".55" transform="rotate(-60 -2.0 134.2)"/>
<ellipse cx="33.7" cy="111.2" rx="7.0" ry="2.4" fill="#9cb880" opacity=".55" transform="rotate(-60 33.7 111.2)"/>
<ellipse cx="44.6" cy="42.9" rx="5.2" ry="2.6" fill="#9cb880" opacity=".55" transform="rotate(-60 44.6 42.9)"/>
<ellipse cx="-0.3" cy="140.9" rx="6.6" ry="1.6" fill="#6f9450" opacity=".55" transform="rotate(-60 -0.3 140.9)"/>
<ellipse cx="41.4" cy="41.8" rx="8.3" ry="1.9" fill="#5d8442" opacity=".55" transform="rotate(-60 41.4 41.8)"/>
<ellipse cx="16.4" cy="119.8" rx="6.8" ry="2.6" fill="#9cb880" opacity=".55" transform="rotate(-60 16.4 119.8)"/>
<ellipse cx="67.4" cy="15.1" rx="4.0" ry="1.6" fill="#9cb880" opacity=".55" transform="rotate(-60 67.4 15.1)"/>
<ellipse cx="44.8" cy="41.2" rx="6.2" ry="1.9" fill="#6f9450" opacity=".55" transform="rotate(-60 44.8 41.2)"/>
<ellipse cx="41.7" cy="82.2" rx="4.2" ry="2.6" fill="#5d8442" opacity=".55" transform="rotate(-60 41.7 82.2)"/>
<ellipse cx="62.3" cy="50.8" rx="8.4" ry="1.5" fill="#9cb880" opacity=".55" transform="rotate(-60 62.3 50.8)"/>
<ellipse cx="7.6" cy="124.8" rx="8.5" ry="1.2" fill="#5d8442" opacity=".55" transform="rotate(-60 7.6 124.8)"/>
<ellipse cx="25.0" cy="91.2" rx="5.0" ry="2.2" fill="#4e7438" opacity=".55" transform="rotate(-60 25.0 91.2)"/>
<ellipse cx="58.2" cy="29.1" rx="8.8" ry="1.6" fill="#5d8442" opacity=".55" transform="rotate(-60 58.2 29.1)"/>
<ellipse cx="43.2" cy="60.3" rx="7.5" ry="2.7" fill="#5d8442" opacity=".55" transform="rotate(-60 43.2 60.3)"/>
<ellipse cx="45.1" cy="68.1" rx="5.3" ry="2.4" fill="#83a862" opacity=".55" transform="rotate(-60 45.1 68.1)"/>
<ellipse cx="38.1" cy="74.9" rx="5.9" ry="2.3" fill="#5d8442" opacity=".55" transform="rotate(-60 38.1 74.9)"/>
<ellipse cx="0.8" cy="126.1" rx="7.3" ry="1.6" fill="#83a862" opacity=".55" transform="rotate(-60 0.8 126.1)"/>
<ellipse cx="19.2" cy="91.5" rx="6.2" ry="2.0" fill="#6f9450" opacity=".55" transform="rotate(-60 19.2 91.5)"/>
<ellipse cx="45.4" cy="83.9" rx="6.1" ry="2.1" fill="#5d8442" opacity=".55" transform="rotate(-60 45.4 83.9)"/>
<ellipse cx="68.7" cy="25.9" rx="5.2" ry="1.6" fill="#83a862" opacity=".55" transform="rotate(-60 68.7 25.9)"/>
<ellipse cx="45.1" cy="84.1" rx="7.1" ry="2.7" fill="#6f9450" opacity=".55" transform="rotate(-60 45.1 84.1)"/>
<ellipse cx="45.8" cy="95.1" rx="4.3" ry="1.3" fill="#9cb880" opacity=".55" transform="rotate(-60 45.8 95.1)"/>
<ellipse cx="23.5" cy="117.1" rx="6.6" ry="2.0" fill="#6f9450" opacity=".55" transform="rotate(-60 23.5 117.1)"/>
<ellipse cx="8.1" cy="121.1" rx="7.7" ry="2.1" fill="#4e7438" opacity=".55" transform="rotate(-60 8.1 121.1)"/>
<ellipse cx="29.8" cy="87.0" rx="6.7" ry="1.6" fill="#9cb880" opacity=".55" transform="rotate(-60 29.8 87.0)"/>
<ellipse cx="17.7" cy="102.2" rx="6.4" ry="1.6" fill="#5d8442" opacity=".55" transform="rotate(-60 17.7 102.2)"/>
<ellipse cx="28.8" cy="83.4" rx="6.9" ry="2.6" fill="#6f9450" opacity=".55" transform="rotate(-60 28.8 83.4)"/>
<ellipse cx="57.1" cy="26.3" rx="7.0" ry="2.5" fill="#6f9450" opacity=".55" transform="rotate(-60 57.1 26.3)"/>
<ellipse cx="29.2" cy="71.9" rx="8.5" ry="2.1" fill="#6f9450" opacity=".55" transform="rotate(-60 29.2 71.9)"/>
<ellipse cx="16.4" cy="69.7" rx="7.1" ry="1.3" fill="#83a862" opacity=".55" transform="rotate(-60 16.4 69.7)"/>
<ellipse cx="37.7" cy="59.0" rx="7.8" ry="2.0" fill="#5d8442" opacity=".55" transform="rotate(-60 37.7 59.0)"/>
<ellipse cx="8.4" cy="86.3" rx="5.3" ry="1.5" fill="#9cb880" opacity=".55" transform="rotate(-60 8.4 86.3)"/>
<ellipse cx="27.5" cy="105.1" rx="6.3" ry="2.3" fill="#9cb880" opacity=".55" transform="rotate(-60 27.5 105.1)"/>
<ellipse cx="10.1" cy="95.1" rx="6.4" ry="2.4" fill="#83a862" opacity=".55" transform="rotate(-60 10.1 95.1)"/>
<ellipse cx="9.7" cy="147.3" rx="4.0" ry="1.9" fill="#6f9450" opacity=".55" transform="rotate(-60 9.7 147.3)"/>
<ellipse cx="40.0" cy="81.0" rx="5.5" ry="1.9" fill="#4e7438" opacity=".55" transform="rotate(-60 40.0 81.0)"/>
<ellipse cx="101.8" cy="27.3" rx="5.1" ry="1.6" fill="#4e7438" opacity=".55" transform="rotate(-60 101.8 27.3)"/>
<ellipse cx="37.7" cy="84.1" rx="4.4" ry="1.6" fill="#9cb880" opacity=".55" transform="rotate(-60 37.7 84.1)"/>
<ellipse cx="69.4" cy="55.7" rx="6.0" ry="2.2" fill="#83a862" opacity=".55" transform="rotate(-60 69.4 55.7)"/>
<ellipse cx="60.1" cy="4.8" rx="8.6" ry="1.5" fill="#4e7438" opacity=".55" transform="rotate(-60 60.1 4.8)"/>
<ellipse cx="15.6" cy="128.7" rx="5.1" ry="1.8" fill="#6f9450" opacity=".55" transform="rotate(-60 15.6 128.7)"/>
<ellipse cx="57.3" cy="25.5" rx="6.4" ry="1.8" fill="#83a862" opacity=".55" transform="rotate(-60 57.3 25.5)"/>
<ellipse cx="30.2" cy="87.0" rx="8.3" ry="1.5" fill="#83a862" opacity=".55" transform="rotate(-60 30.2 87.0)"/>
<ellipse cx="30.4" cy="50.3" rx="5.8" ry="1.6" fill="#5d8442" opacity=".55" transform="rotate(-60 30.4 50.3)"/>
<ellipse cx="74.0" cy="4.3" rx="5.3" ry="1.8" fill="#83a862" opacity=".55" transform="rotate(-60 74.0 4.3)"/>
<ellipse cx="72.3" cy="25.9" rx="4.7" ry="1.6" fill="#5d8442" opacity=".55" transform="rotate(-60 72.3 25.9)"/>
<ellipse cx="40.0" cy="135.3" rx="4.4" ry="2.6" fill="#9cb880" opacity=".55" transform="rotate(-60 40.0 135.3)"/>
<ellipse cx="75.2" cy="59.4" rx="7.3" ry="1.7" fill="#4e7438" opacity=".55" transform="rotate(-60 75.2 59.4)"/>
<ellipse cx="22.4" cy="85.6" rx="4.2" ry="1.7" fill="#83a862" opacity=".55" transform="rotate(-60 22.4 85.6)"/>
<ellipse cx="42.9" cy="62.1" rx="6.6" ry="2.1" fill="#83a862" opacity=".55" transform="rotate(-60 42.9 62.1)"/>
<ellipse cx="43.9" cy="41.2" rx="6.7" ry="1.9" fill="#5d8442" opacity=".55" transform="rotate(-60 43.9 41.2)"/>
<ellipse cx="66.0" cy="21.4" rx="5.1" ry="1.7" fill="#5d8442" opacity=".55" transform="rotate(-60 66.0 21.4)"/>
<ellipse cx="44.6" cy="50.7" rx="6.8" ry="2.5" fill="#9cb880" opacity=".55" transform="rotate(-60 44.6 50.7)"/>
<ellipse cx="3.0" cy="143.8" rx="8.6" ry="1.5" fill="#6f9450" opacity=".55" transform="rotate(-60 3.0 143.8)"/>
<ellipse cx="13.3" cy="94.5" rx="7.9" ry="1.6" fill="#83a862" opacity=".55" transform="rotate(-60 13.3 94.5)"/>
<ellipse cx="-9.8" cy="106.1" rx="4.3" ry="1.8" fill="#9cb880" opacity=".55" transform="rotate(-60 -9.8 106.1)"/>
<ellipse cx="38.3" cy="43.9" rx="5.0" ry="2.4" fill="#9cb880" opacity=".55" transform="rotate(-60 38.3 43.9)"/>
<ellipse cx="49.2" cy="51.3" rx="4.5" ry="1.7" fill="#4e7438" opacity=".55" transform="rotate(-60 49.2 51.3)"/>
<ellipse cx="51.4" cy="65.5" rx="5.5" ry="2.7" fill="#4e7438" opacity=".55" transform="rotate(-60 51.4 65.5)"/>
<ellipse cx="14.7" cy="137.1" rx="8.6" ry="1.6" fill="#6f9450" opacity=".55" transform="rotate(-60 14.7 137.1)"/>
<ellipse cx="52.0" cy="57.5" rx="4.4" ry="1.3" fill="#5d8442" opacity=".55" transform="rotate(-60 52.0 57.5)"/>
<ellipse cx="41.5" cy="43.8" rx="5.3" ry="2.3" fill="#5d8442" opacity=".55" transform="rotate(-60 41.5 43.8)"/>
<ellipse cx="49.6" cy="20.4" rx="4.2" ry="2.3" fill="#5d8442" opacity=".55" transform="rotate(-60 49.6 20.4)"/>
<ellipse cx="56.4" cy="32.9" rx="7.1" ry="1.9" fill="#6f9450" opacity=".55" transform="rotate(-60 56.4 32.9)"/>
<ellipse cx="42.7" cy="59.1" rx="8.8" ry="1.8" fill="#9cb880" opacity=".55" transform="rotate(-60 42.7 59.1)"/>
<ellipse cx="34.2" cy="126.5" rx="5.5" ry="1.8" fill="#5d8442" opacity=".55" transform="rotate(-60 34.2 126.5)"/>
<ellipse cx="3.3" cy="144.5" rx="5.2" ry="1.2" fill="#83a862" opacity=".55" transform="rotate(-60 3.3 144.5)"/>
<ellipse cx="37.7" cy="82.0" rx="6.7" ry="2.6" fill="#83a862" opacity=".55" transform="rotate(-60 37.7 82.0)"/>
<ellipse cx="36.4" cy="119.8" rx="5.3" ry="1.4" fill="#5d8442" opacity=".55" transform="rotate(-60 36.4 119.8)"/>
<ellipse cx="82.8" cy="7.2" rx="7.5" ry="2.3" fill="#83a862" opacity=".55" transform="rotate(-60 82.8 7.2)"/>
<ellipse cx="6.2" cy="142.0" rx="8.0" ry="1.7" fill="#9cb880" opacity=".55" transform="rotate(-60 6.2 142.0)"/>
<ellipse cx="36.4" cy="58.0" rx="6.5" ry="2.2" fill="#4e7438" opacity=".55" transform="rotate(-60 36.4 58.0)"/>
<ellipse cx="42.4" cy="49.9" rx="8.9" ry="2.5" fill="#6f9450" opacity=".55" transform="rotate(-60 42.4 49.9)"/>
<ellipse cx="-14.4" cy="118.7" rx="6.6" ry="2.3" fill="#9cb880" opacity=".55" transform="rotate(-60 -14.4 118.7)"/>
<ellipse cx="62.5" cy="2.2" rx="5.3" ry="2.0" fill="#5d8442" opacity=".55" transform="rotate(-60 62.5 2.2)"/>
<ellipse cx="6.9" cy="112.7" rx="5.8" ry="2.3" fill="#5d8442" opacity=".55" transform="rotate(-60 6.9 112.7)"/>
<ellipse cx="64.3" cy="28.9" rx="6.8" ry="1.9" fill="#83a862" opacity=".55" transform="rotate(-60 64.3 28.9)"/>
<ellipse cx="17.1" cy="100.6" rx="8.0" ry="1.4" fill="#5d8442" opacity=".55" transform="rotate(-60 17.1 100.6)"/>
<ellipse cx="39.5" cy="53.3" rx="6.4" ry="2.3" fill="#6f9450" opacity=".55" transform="rotate(-60 39.5 53.3)"/>
<ellipse cx="12.4" cy="112.3" rx="7.4" ry="1.9" fill="#5d8442" opacity=".55" transform="rotate(-60 12.4 112.3)"/>
<ellipse cx="12.5" cy="83.0" rx="4.8" ry="2.8" fill="#6f9450" opacity=".55" transform="rotate(-60 12.5 83.0)"/>
<ellipse cx="20.9" cy="134.1" rx="7.7" ry="2.8" fill="#5d8442" opacity=".55" transform="rotate(-60 20.9 134.1)"/>
<ellipse cx="63.5" cy="17.0" rx="4.9" ry="1.3" fill="#9cb880" opacity=".55" transform="rotate(-60 63.5 17.0)"/>
<ellipse cx="45.9" cy="65.1" rx="5.1" ry="2.4" fill="#5d8442" opacity=".55" transform="rotate(-60 45.9 65.1)"/>
<ellipse cx="52.7" cy="63.7" rx="6.7" ry="2.5" fill="#83a862" opacity=".55" transform="rotate(-60 52.7 63.7)"/>
<ellipse cx="69.8" cy="26.5" rx="6.8" ry="2.6" fill="#6f9450" opacity=".55" transform="rotate(-60 69.8 26.5)"/>
<ellipse cx="6.6" cy="126.0" rx="6.8" ry="1.4" fill="#5d8442" opacity=".55" transform="rotate(-60 6.6 126.0)"/>
<ellipse cx="27.9" cy="92.5" rx="4.4" ry="1.5" fill="#83a862" opacity=".55" transform="rotate(-60 27.9 92.5)"/>
<ellipse cx="23.5" cy="77.9" rx="7.4" ry="1.2" fill="#5d8442" opacity=".55" transform="rotate(-60 23.5 77.9)"/>
<ellipse cx="43.5" cy="48.1" rx="9.0" ry="1.9" fill="#83a862" opacity=".55" transform="rotate(-60 43.5 48.1)"/>
<ellipse cx="63.6" cy="0.9" rx="6.8" ry="2.3" fill="#83a862" opacity=".55" transform="rotate(-60 63.6 0.9)"/>
<ellipse cx="35.9" cy="96.1" rx="8.3" ry="2.8" fill="#5d8442" opacity=".55" transform="rotate(-60 35.9 96.1)"/>
<ellipse cx="46.0" cy="68.7" rx="8.7" ry="2.1" fill="#6f9450" opacity=".55" transform="rotate(-60 46.0 68.7)"/>
<ellipse cx="8.1" cy="91.6" rx="7.8" ry="1.7" fill="#6f9450" opacity=".55" transform="rotate(-60 8.1 91.6)"/>
<ellipse cx="36.0" cy="0.5" rx="4.3" ry="1.7" fill="#83a862" opacity=".6" transform="rotate(-60 36.0 0.5)"/>
<ellipse cx="53.7" cy="13.2" rx="8.0" ry="2.2" fill="#83a862" opacity=".6" transform="rotate(-60 53.7 13.2)"/>
<ellipse cx="27.9" cy="40.2" rx="8.7" ry="1.9" fill="#6f9450" opacity=".6" transform="rotate(-60 27.9 40.2)"/>
<ellipse cx="58.8" cy="20.4" rx="4.0" ry="1.4" fill="#6f9450" opacity=".6" transform="rotate(-60 58.8 20.4)"/>
<ellipse cx="22.7" cy="36.2" rx="8.1" ry="1.7" fill="#5d8442" opacity=".6" transform="rotate(-60 22.7 36.2)"/>
<ellipse cx="44.7" cy="17.7" rx="4.3" ry="2.1" fill="#5d8442" opacity=".6" transform="rotate(-60 44.7 17.7)"/>
<ellipse cx="41.6" cy="13.2" rx="7.7" ry="1.5" fill="#83a862" opacity=".6" transform="rotate(-60 41.6 13.2)"/>
<ellipse cx="52.0" cy="27.3" rx="4.9" ry="1.3" fill="#83a862" opacity=".6" transform="rotate(-60 52.0 27.3)"/>
<ellipse cx="10.0" cy="17.5" rx="4.1" ry="1.8" fill="#9cb880" opacity=".6" transform="rotate(-60 10.0 17.5)"/>
<ellipse cx="3.7" cy="4.7" rx="4.1" ry="1.4" fill="#83a862" opacity=".6" transform="rotate(-60 3.7 4.7)"/>
<ellipse cx="4.7" cy="29.5" rx="6.2" ry="2.5" fill="#5d8442" opacity=".6" transform="rotate(-60 4.7 29.5)"/>
<ellipse cx="15.4" cy="20.4" rx="8.1" ry="1.3" fill="#83a862" opacity=".6" transform="rotate(-60 15.4 20.4)"/>
<ellipse cx="27.3" cy="46.0" rx="7.9" ry="1.9" fill="#83a862" opacity=".6" transform="rotate(-60 27.3 46.0)"/>
<ellipse cx="0.7" cy="36.5" rx="8.6" ry="1.3" fill="#9cb880" opacity=".6" transform="rotate(-60 0.7 36.5)"/>
<ellipse cx="43.2" cy="17.2" rx="8.3" ry="2.1" fill="#9cb880" opacity=".6" transform="rotate(-60 43.2 17.2)"/>
<ellipse cx="35.3" cy="28.4" rx="4.6" ry="2.2" fill="#6f9450" opacity=".6" transform="rotate(-60 35.3 28.4)"/>
<ellipse cx="52.1" cy="21.8" rx="6.1" ry="1.7" fill="#9cb880" opacity=".6" transform="rotate(-60 52.1 21.8)"/>
<ellipse cx="16.1" cy="30.0" rx="6.6" ry="1.2" fill="#6f9450" opacity=".6" transform="rotate(-60 16.1 30.0)"/>
<ellipse cx="43.9" cy="22.3" rx="7.0" ry="2.5" fill="#6f9450" opacity=".6" transform="rotate(-60 43.9 22.3)"/>
<ellipse cx="10.6" cy="23.4" rx="7.7" ry="1.6" fill="#5d8442" opacity=".6" transform="rotate(-60 10.6 23.4)"/>
<ellipse cx="51.6" cy="49.5" rx="4.3" ry="2.6" fill="#9cb880" opacity=".6" transform="rotate(-60 51.6 49.5)"/>
<ellipse cx="52.7" cy="44.9" rx="5.2" ry="2.4" fill="#6f9450" opacity=".6" transform="rotate(-60 52.7 44.9)"/>
<ellipse cx="45.4" cy="46.9" rx="8.0" ry="1.9" fill="#6f9450" opacity=".6" transform="rotate(-60 45.4 46.9)"/>
<ellipse cx="69.6" cy="3.2" rx="7.6" ry="1.6" fill="#6f9450" opacity=".6" transform="rotate(-60 69.6 3.2)"/>
<ellipse cx="56.5" cy="22.7" rx="8.3" ry="1.5" fill="#6f9450" opacity=".6" transform="rotate(-60 56.5 22.7)"/>
<ellipse cx="19.6" cy="32.2" rx="4.5" ry="1.8" fill="#6f9450" opacity=".6" transform="rotate(-60 19.6 32.2)"/>
<ellipse cx="53.0" cy="43.8" rx="8.0" ry="2.4" fill="#6f9450" opacity=".6" transform="rotate(-60 53.0 43.8)"/>
<ellipse cx="54.0" cy="27.5" rx="8.0" ry="1.4" fill="#6f9450" opacity=".6" transform="rotate(-60 54.0 27.5)"/>
<ellipse cx="25.6" cy="5.0" rx="8.6" ry="2.5" fill="#6f9450" opacity=".6" transform="rotate(-60 25.6 5.0)"/>
<ellipse cx="15.4" cy="14.4" rx="4.9" ry="1.7" fill="#9cb880" opacity=".6" transform="rotate(-60 15.4 14.4)"/>
<ellipse cx="59.4" cy="30.9" rx="4.4" ry="2.6" fill="#9cb880" opacity=".6" transform="rotate(-60 59.4 30.9)"/>
<ellipse cx="14.5" cy="31.5" rx="6.8" ry="2.6" fill="#83a862" opacity=".6" transform="rotate(-60 14.5 31.5)"/>
<ellipse cx="26.5" cy="40.8" rx="8.2" ry="2.5" fill="#5d8442" opacity=".6" transform="rotate(-60 26.5 40.8)"/>
<ellipse cx="46.1" cy="10.4" rx="4.9" ry="1.4" fill="#83a862" opacity=".6" transform="rotate(-60 46.1 10.4)"/>
<ellipse cx="48.6" cy="23.3" rx="5.4" ry="1.6" fill="#83a862" opacity=".6" transform="rotate(-60 48.6 23.3)"/>
<ellipse cx="24.1" cy="31.1" rx="5.0" ry="2.6" fill="#5d8442" opacity=".6" transform="rotate(-60 24.1 31.1)"/>
<ellipse cx="48.4" cy="36.8" rx="8.4" ry="2.3" fill="#5d8442" opacity=".6" transform="rotate(-60 48.4 36.8)"/>
<ellipse cx="14.0" cy="3.6" rx="6.1" ry="2.3" fill="#5d8442" opacity=".6" transform="rotate(-60 14.0 3.6)"/>
<ellipse cx="28.6" cy="22.8" rx="8.7" ry="1.7" fill="#6f9450" opacity=".6" transform="rotate(-60 28.6 22.8)"/>
<ellipse cx="49.3" cy="11.8" rx="5.4" ry="2.4" fill="#6f9450" opacity=".6" transform="rotate(-60 49.3 11.8)"/>
<ellipse cx="20.1" cy="42.7" rx="5.1" ry="1.9" fill="#9cb880" opacity=".6" transform="rotate(-60 20.1 42.7)"/>
<ellipse cx="13.9" cy="20.7" rx="6.2" ry="1.3" fill="#83a862" opacity=".6" transform="rotate(-60 13.9 20.7)"/>
<ellipse cx="29.3" cy="14.1" rx="7.3" ry="1.6" fill="#9cb880" opacity=".6" transform="rotate(-60 29.3 14.1)"/>
<ellipse cx="46.3" cy="0.6" rx="4.1" ry="1.7" fill="#83a862" opacity=".6" transform="rotate(-60 46.3 0.6)"/>
<ellipse cx="41.5" cy="43.3" rx="6.1" ry="1.7" fill="#9cb880" opacity=".6" transform="rotate(-60 41.5 43.3)"/>
<ellipse cx="57.4" cy="42.5" rx="6.7" ry="1.3" fill="#6f9450" opacity=".6" transform="rotate(-60 57.4 42.5)"/>
<ellipse cx="62.8" cy="4.4" rx="4.1" ry="1.2" fill="#5d8442" opacity=".6" transform="rotate(-60 62.8 4.4)"/>
<ellipse cx="41.3" cy="34.9" rx="7.3" ry="1.4" fill="#6f9450" opacity=".6" transform="rotate(-60 41.3 34.9)"/>
<ellipse cx="5.1" cy="8.5" rx="6.4" ry="2.1" fill="#5d8442" opacity=".6" transform="rotate(-60 5.1 8.5)"/>
<ellipse cx="4.3" cy="11.1" rx="9.0" ry="1.8" fill="#6f9450" opacity=".6" transform="rotate(-60 4.3 11.1)"/>
</g>
<path d="M-4,30 L20,14 L36,4" stroke="#cfa43a" stroke-width="5" fill="none" filter="url(#b1)"/>
<ellipse cx="26" cy="3" rx="12" ry="5" fill="#d8d8d0" opacity=".7" filter="url(#b2)"/>
<polygon points="190.0,-10.0 351.0,-10.0 324.0,30.0 300.0,63.0 280.0,97.0 273.0,112.0 254.0,63.0 230.0,30.0" fill="#7d8a66" opacity=".55" filter="url(#b4)"/>
<g filter="url(#b1)">
<ellipse cx="313.5" cy="0.9" rx="12.7" ry="2.5" fill="#9aca6e" opacity=".65" transform="rotate(-60 313.5 0.9)"/>
<ellipse cx="258.0" cy="10.3" rx="11.9" ry="2.9" fill="#4a7a30" opacity=".65" transform="rotate(-60 258.0 10.3)"/>
<ellipse cx="341.2" cy="-6.9" rx="8.3" ry="2.2" fill="#4a7a30" opacity=".65" transform="rotate(-60 341.2 -6.9)"/>
<ellipse cx="281.5" cy="-1.2" rx="6.0" ry="1.4" fill="#5a8f3c" opacity=".65" transform="rotate(-60 281.5 -1.2)"/>
<ellipse cx="272.2" cy="28.2" rx="7.0" ry="1.9" fill="#5a8f3c" opacity=".65" transform="rotate(-60 272.2 28.2)"/>
<ellipse cx="261.3" cy="62.6" rx="6.1" ry="2.8" fill="#4a7a30" opacity=".65" transform="rotate(-60 261.3 62.6)"/>
<ellipse cx="247.8" cy="28.2" rx="8.2" ry="2.1" fill="#6ea248" opacity=".65" transform="rotate(-60 247.8 28.2)"/>
<ellipse cx="250.2" cy="28.9" rx="7.1" ry="1.4" fill="#5a8f3c" opacity=".65" transform="rotate(-60 250.2 28.9)"/>
<ellipse cx="268.0" cy="75.0" rx="9.5" ry="2.1" fill="#9aca6e" opacity=".65" transform="rotate(-60 268.0 75.0)"/>
<ellipse cx="257.3" cy="52.0" rx="10.2" ry="1.8" fill="#4a7a30" opacity=".65" transform="rotate(-60 257.3 52.0)"/>
<ellipse cx="275.6" cy="11.2" rx="9.4" ry="1.9" fill="#3a6428" opacity=".65" transform="rotate(-60 275.6 11.2)"/>
<ellipse cx="220.1" cy="2.9" rx="5.3" ry="1.8" fill="#4a7a30" opacity=".65" transform="rotate(-60 220.1 2.9)"/>
<ellipse cx="274.8" cy="85.3" rx="8.3" ry="2.9" fill="#4a7a30" opacity=".65" transform="rotate(-60 274.8 85.3)"/>
<ellipse cx="287.7" cy="38.0" rx="6.7" ry="2.6" fill="#a8c888" opacity=".65" transform="rotate(-60 287.7 38.0)"/>
<ellipse cx="296.5" cy="38.5" rx="7.3" ry="2.4" fill="#84b85a" opacity=".65" transform="rotate(-60 296.5 38.5)"/>
<ellipse cx="295.0" cy="-7.1" rx="9.6" ry="1.2" fill="#5a8f3c" opacity=".65" transform="rotate(-60 295.0 -7.1)"/>
<ellipse cx="312.6" cy="44.4" rx="6.4" ry="1.4" fill="#84b85a" opacity=".65" transform="rotate(-60 312.6 44.4)"/>
<ellipse cx="303.4" cy="8.2" rx="10.4" ry="2.6" fill="#4a7a30" opacity=".65" transform="rotate(-60 303.4 8.2)"/>
<ellipse cx="306.5" cy="41.6" rx="12.4" ry="1.6" fill="#84b85a" opacity=".65" transform="rotate(-60 306.5 41.6)"/>
<ellipse cx="254.7" cy="59.7" rx="6.2" ry="1.7" fill="#84b85a" opacity=".65" transform="rotate(-60 254.7 59.7)"/>
<ellipse cx="272.1" cy="52.6" rx="11.2" ry="1.8" fill="#9aca6e" opacity=".65" transform="rotate(-60 272.1 52.6)"/>
<ellipse cx="297.3" cy="39.0" rx="8.6" ry="2.3" fill="#3a6428" opacity=".65" transform="rotate(-60 297.3 39.0)"/>
<ellipse cx="251.3" cy="1.8" rx="6.9" ry="1.7" fill="#4a7a30" opacity=".65" transform="rotate(-60 251.3 1.8)"/>
<ellipse cx="226.3" cy="-1.7" rx="8.0" ry="2.5" fill="#a8c888" opacity=".65" transform="rotate(-60 226.3 -1.7)"/>
<ellipse cx="257.9" cy="70.3" rx="12.8" ry="2.8" fill="#9aca6e" opacity=".65" transform="rotate(-60 257.9 70.3)"/>
<ellipse cx="262.0" cy="53.3" rx="6.5" ry="2.3" fill="#5a8f3c" opacity=".65" transform="rotate(-60 262.0 53.3)"/>
<ellipse cx="302.3" cy="55.1" rx="5.3" ry="2.5" fill="#9aca6e" opacity=".65" transform="rotate(-60 302.3 55.1)"/>
<ellipse cx="282.3" cy="61.7" rx="8.9" ry="2.0" fill="#4a7a30" opacity=".65" transform="rotate(-60 282.3 61.7)"/>
<ellipse cx="234.4" cy="22.1" rx="6.7" ry="1.6" fill="#9aca6e" opacity=".65" transform="rotate(-60 234.4 22.1)"/>
<ellipse cx="276.3" cy="69.3" rx="6.3" ry="1.5" fill="#84b85a" opacity=".65" transform="rotate(-60 276.3 69.3)"/>
<ellipse cx="246.4" cy="32.2" rx="12.6" ry="2.5" fill="#84b85a" opacity=".65" transform="rotate(-60 246.4 32.2)"/>
<ellipse cx="310.8" cy="24.4" rx="7.9" ry="1.5" fill="#5a8f3c" opacity=".65" transform="rotate(-60 310.8 24.4)"/>
<ellipse cx="227.3" cy="-0.2" rx="7.3" ry="1.7" fill="#6ea248" opacity=".65" transform="rotate(-60 227.3 -0.2)"/>
<ellipse cx="271.7" cy="103.6" rx="11.6" ry="2.2" fill="#9aca6e" opacity=".65" transform="rotate(-60 271.7 103.6)"/>
<ellipse cx="203.6" cy="1.6" rx="9.3" ry="2.4" fill="#9aca6e" opacity=".65" transform="rotate(-60 203.6 1.6)"/>
<ellipse cx="226.8" cy="-2.9" rx="10.2" ry="2.2" fill="#4a7a30" opacity=".65" transform="rotate(-60 226.8 -2.9)"/>
<ellipse cx="266.6" cy="79.2" rx="10.8" ry="2.9" fill="#4a7a30" opacity=".65" transform="rotate(-60 266.6 79.2)"/>
<ellipse cx="271.0" cy="63.6" rx="12.1" ry="1.3" fill="#4a7a30" opacity=".65" transform="rotate(-60 271.0 63.6)"/>
<ellipse cx="279.0" cy="64.7" rx="7.4" ry="1.2" fill="#84b85a" opacity=".65" transform="rotate(-60 279.0 64.7)"/>
<ellipse cx="243.7" cy="8.3" rx="6.1" ry="1.9" fill="#84b85a" opacity=".65" transform="rotate(-60 243.7 8.3)"/>
<ellipse cx="338.3" cy="3.2" rx="8.9" ry="1.3" fill="#9aca6e" opacity=".65" transform="rotate(-60 338.3 3.2)"/>
<ellipse cx="267.7" cy="62.5" rx="6.1" ry="1.7" fill="#84b85a" opacity=".65" transform="rotate(-60 267.7 62.5)"/>
<ellipse cx="286.3" cy="79.1" rx="12.5" ry="1.4" fill="#4a7a30" opacity=".65" transform="rotate(-60 286.3 79.1)"/>
<ellipse cx="273.6" cy="65.4" rx="5.0" ry="1.3" fill="#84b85a" opacity=".65" transform="rotate(-60 273.6 65.4)"/>
<ellipse cx="240.4" cy="35.1" rx="12.2" ry="1.6" fill="#6ea248" opacity=".65" transform="rotate(-60 240.4 35.1)"/>
<ellipse cx="261.2" cy="18.7" rx="6.5" ry="2.4" fill="#4a7a30" opacity=".65" transform="rotate(-60 261.2 18.7)"/>
<ellipse cx="289.8" cy="67.4" rx="9.6" ry="1.2" fill="#a8c888" opacity=".65" transform="rotate(-60 289.8 67.4)"/>
<ellipse cx="236.0" cy="-1.4" rx="10.9" ry="1.6" fill="#4a7a30" opacity=".65" transform="rotate(-60 236.0 -1.4)"/>
<ellipse cx="270.7" cy="47.4" rx="8.3" ry="3.0" fill="#6ea248" opacity=".65" transform="rotate(-60 270.7 47.4)"/>
<ellipse cx="246.7" cy="36.3" rx="12.9" ry="1.9" fill="#84b85a" opacity=".65" transform="rotate(-60 246.7 36.3)"/>
<ellipse cx="320.8" cy="34.0" rx="8.0" ry="1.7" fill="#5a8f3c" opacity=".65" transform="rotate(-60 320.8 34.0)"/>
<ellipse cx="248.5" cy="-1.5" rx="6.1" ry="1.6" fill="#9aca6e" opacity=".65" transform="rotate(-60 248.5 -1.5)"/>
<ellipse cx="214.7" cy="7.6" rx="12.1" ry="2.5" fill="#5a8f3c" opacity=".65" transform="rotate(-60 214.7 7.6)"/>
<ellipse cx="247.0" cy="5.6" rx="6.2" ry="2.8" fill="#a8c888" opacity=".65" transform="rotate(-60 247.0 5.6)"/>
<ellipse cx="301.7" cy="6.0" rx="6.5" ry="1.4" fill="#4a7a30" opacity=".65" transform="rotate(-60 301.7 6.0)"/>
<ellipse cx="274.8" cy="60.2" rx="11.1" ry="2.1" fill="#4a7a30" opacity=".65" transform="rotate(-60 274.8 60.2)"/>
<ellipse cx="220.1" cy="-0.0" rx="12.8" ry="2.9" fill="#a8c888" opacity=".65" transform="rotate(-60 220.1 -0.0)"/>
<ellipse cx="301.9" cy="14.2" rx="10.1" ry="1.4" fill="#4a7a30" opacity=".65" transform="rotate(-60 301.9 14.2)"/>
<ellipse cx="287.6" cy="35.5" rx="8.7" ry="1.5" fill="#4a7a30" opacity=".65" transform="rotate(-60 287.6 35.5)"/>
<ellipse cx="252.1" cy="-3.3" rx="5.4" ry="1.9" fill="#9aca6e" opacity=".65" transform="rotate(-60 252.1 -3.3)"/>
<ellipse cx="241.6" cy="11.6" rx="7.7" ry="2.7" fill="#6ea248" opacity=".65" transform="rotate(-60 241.6 11.6)"/>
<ellipse cx="281.1" cy="79.4" rx="10.0" ry="1.8" fill="#a8c888" opacity=".65" transform="rotate(-60 281.1 79.4)"/>
<ellipse cx="284.6" cy="44.2" rx="7.1" ry="2.9" fill="#4a7a30" opacity=".65" transform="rotate(-60 284.6 44.2)"/>
<ellipse cx="268.5" cy="78.1" rx="8.7" ry="2.2" fill="#9aca6e" opacity=".65" transform="rotate(-60 268.5 78.1)"/>
<ellipse cx="279.9" cy="42.5" rx="7.3" ry="1.4" fill="#4a7a30" opacity=".65" transform="rotate(-60 279.9 42.5)"/>
<ellipse cx="303.7" cy="35.1" rx="9.0" ry="2.9" fill="#84b85a" opacity=".65" transform="rotate(-60 303.7 35.1)"/>
<ellipse cx="272.6" cy="39.3" rx="10.3" ry="1.9" fill="#6ea248" opacity=".65" transform="rotate(-60 272.6 39.3)"/>
<ellipse cx="269.6" cy="100.1" rx="5.5" ry="1.8" fill="#4a7a30" opacity=".65" transform="rotate(-60 269.6 100.1)"/>
<ellipse cx="295.1" cy="-2.0" rx="12.8" ry="1.7" fill="#9aca6e" opacity=".65" transform="rotate(-60 295.1 -2.0)"/>
<ellipse cx="259.7" cy="1.0" rx="6.9" ry="2.7" fill="#6ea248" opacity=".65" transform="rotate(-60 259.7 1.0)"/>
<ellipse cx="323.6" cy="23.1" rx="8.4" ry="2.2" fill="#84b85a" opacity=".65" transform="rotate(-60 323.6 23.1)"/>
<ellipse cx="266.8" cy="27.8" rx="12.4" ry="2.4" fill="#4a7a30" opacity=".65" transform="rotate(-60 266.8 27.8)"/>
<ellipse cx="304.1" cy="48.0" rx="12.8" ry="2.9" fill="#a8c888" opacity=".65" transform="rotate(-60 304.1 48.0)"/>
<ellipse cx="324.2" cy="12.9" rx="7.4" ry="1.6" fill="#4a7a30" opacity=".65" transform="rotate(-60 324.2 12.9)"/>
<ellipse cx="345.5" cy="-7.0" rx="8.8" ry="2.4" fill="#4a7a30" opacity=".65" transform="rotate(-60 345.5 -7.0)"/>
<ellipse cx="301.6" cy="42.0" rx="12.8" ry="1.5" fill="#84b85a" opacity=".65" transform="rotate(-60 301.6 42.0)"/>
<ellipse cx="250.2" cy="23.0" rx="12.9" ry="2.3" fill="#a8c888" opacity=".65" transform="rotate(-60 250.2 23.0)"/>
<ellipse cx="268.5" cy="40.0" rx="5.3" ry="2.8" fill="#4a7a30" opacity=".65" transform="rotate(-60 268.5 40.0)"/>
<ellipse cx="257.6" cy="50.7" rx="5.2" ry="1.7" fill="#9aca6e" opacity=".65" transform="rotate(-60 257.6 50.7)"/>
<ellipse cx="318.9" cy="3.4" rx="12.4" ry="2.8" fill="#4a7a30" opacity=".65" transform="rotate(-60 318.9 3.4)"/>
<ellipse cx="319.3" cy="33.3" rx="6.7" ry="3.0" fill="#a8c888" opacity=".65" transform="rotate(-60 319.3 33.3)"/>
<ellipse cx="306.9" cy="-3.5" rx="7.3" ry="2.9" fill="#5a8f3c" opacity=".65" transform="rotate(-60 306.9 -3.5)"/>
<ellipse cx="245.6" cy="46.4" rx="5.6" ry="1.3" fill="#3a6428" opacity=".65" transform="rotate(-60 245.6 46.4)"/>
<ellipse cx="254.6" cy="42.9" rx="11.3" ry="2.8" fill="#5a8f3c" opacity=".65" transform="rotate(-60 254.6 42.9)"/>
<ellipse cx="265.7" cy="44.1" rx="9.7" ry="2.0" fill="#a8c888" opacity=".65" transform="rotate(-60 265.7 44.1)"/>
<ellipse cx="290.7" cy="13.9" rx="11.3" ry="2.3" fill="#a8c888" opacity=".65" transform="rotate(-60 290.7 13.9)"/>
<ellipse cx="323.5" cy="-4.6" rx="8.7" ry="2.0" fill="#6ea248" opacity=".65" transform="rotate(-60 323.5 -4.6)"/>
<ellipse cx="258.8" cy="6.6" rx="9.0" ry="2.6" fill="#3a6428" opacity=".65" transform="rotate(-60 258.8 6.6)"/>
<ellipse cx="253.6" cy="1.3" rx="7.0" ry="2.2" fill="#9aca6e" opacity=".65" transform="rotate(-60 253.6 1.3)"/>
<ellipse cx="252.5" cy="39.8" rx="10.8" ry="2.3" fill="#3a6428" opacity=".65" transform="rotate(-60 252.5 39.8)"/>
<ellipse cx="294.8" cy="33.6" rx="6.8" ry="2.8" fill="#6ea248" opacity=".65" transform="rotate(-60 294.8 33.6)"/>
<ellipse cx="271.6" cy="43.4" rx="12.0" ry="1.5" fill="#3a6428" opacity=".65" transform="rotate(-60 271.6 43.4)"/>
<ellipse cx="228.2" cy="16.9" rx="6.6" ry="2.0" fill="#3a6428" opacity=".65" transform="rotate(-60 228.2 16.9)"/>
<ellipse cx="218.0" cy="-7.0" rx="10.0" ry="1.4" fill="#a8c888" opacity=".65" transform="rotate(-60 218.0 -7.0)"/>
<ellipse cx="279.1" cy="75.7" rx="12.1" ry="1.3" fill="#3a6428" opacity=".65" transform="rotate(-60 279.1 75.7)"/>
<ellipse cx="220.8" cy="19.7" rx="8.5" ry="2.4" fill="#4a7a30" opacity=".65" transform="rotate(-60 220.8 19.7)"/>
<ellipse cx="317.9" cy="23.7" rx="6.8" ry="1.9" fill="#3a6428" opacity=".65" transform="rotate(-60 317.9 23.7)"/>
<ellipse cx="344.3" cy="-2.2" rx="11.6" ry="2.7" fill="#6ea248" opacity=".65" transform="rotate(-60 344.3 -2.2)"/>
<ellipse cx="281.0" cy="60.8" rx="6.1" ry="2.6" fill="#6ea248" opacity=".65" transform="rotate(-60 281.0 60.8)"/>
<ellipse cx="282.1" cy="58.7" rx="7.6" ry="2.9" fill="#4a7a30" opacity=".65" transform="rotate(-60 282.1 58.7)"/>
<ellipse cx="197.7" cy="-3.7" rx="9.2" ry="3.0" fill="#4a7a30" opacity=".65" transform="rotate(-60 197.7 -3.7)"/>
<ellipse cx="276.7" cy="-6.9" rx="8.2" ry="1.9" fill="#4a7a30" opacity=".65" transform="rotate(-60 276.7 -6.9)"/>
<ellipse cx="217.2" cy="-6.7" rx="10.1" ry="1.2" fill="#84b85a" opacity=".65" transform="rotate(-60 217.2 -6.7)"/>
<ellipse cx="214.4" cy="-7.3" rx="10.6" ry="1.3" fill="#6ea248" opacity=".65" transform="rotate(-60 214.4 -7.3)"/>
<ellipse cx="305.9" cy="33.8" rx="11.8" ry="2.5" fill="#5a8f3c" opacity=".65" transform="rotate(-60 305.9 33.8)"/>
<ellipse cx="321.9" cy="26.6" rx="6.8" ry="1.6" fill="#4a7a30" opacity=".65" transform="rotate(-60 321.9 26.6)"/>
<ellipse cx="291.5" cy="9.5" rx="11.3" ry="2.8" fill="#4a7a30" opacity=".65" transform="rotate(-60 291.5 9.5)"/>
<ellipse cx="265.2" cy="68.6" rx="6.7" ry="2.8" fill="#4a7a30" opacity=".65" transform="rotate(-60 265.2 68.6)"/>
<ellipse cx="245.6" cy="19.7" rx="11.8" ry="2.5" fill="#6ea248" opacity=".65" transform="rotate(-60 245.6 19.7)"/>
<ellipse cx="276.0" cy="40.3" rx="8.3" ry="2.8" fill="#84b85a" opacity=".65" transform="rotate(-60 276.0 40.3)"/>
<ellipse cx="290.6" cy="62.0" rx="10.3" ry="2.5" fill="#6ea248" opacity=".65" transform="rotate(-60 290.6 62.0)"/>
<ellipse cx="244.1" cy="36.8" rx="12.4" ry="1.7" fill="#5a8f3c" opacity=".65" transform="rotate(-60 244.1 36.8)"/>
<ellipse cx="255.0" cy="12.4" rx="5.9" ry="2.7" fill="#9aca6e" opacity=".65" transform="rotate(-60 255.0 12.4)"/>
<ellipse cx="264.4" cy="56.5" rx="9.4" ry="2.8" fill="#a8c888" opacity=".65" transform="rotate(-60 264.4 56.5)"/>
<ellipse cx="245.2" cy="24.5" rx="9.2" ry="2.2" fill="#4a7a30" opacity=".65" transform="rotate(-60 245.2 24.5)"/>
<ellipse cx="220.3" cy="-7.1" rx="8.1" ry="2.4" fill="#a8c888" opacity=".65" transform="rotate(-60 220.3 -7.1)"/>
<ellipse cx="273.9" cy="37.8" rx="10.5" ry="2.5" fill="#4a7a30" opacity=".65" transform="rotate(-60 273.9 37.8)"/>
<ellipse cx="261.8" cy="41.7" rx="12.0" ry="3.0" fill="#5a8f3c" opacity=".65" transform="rotate(-60 261.8 41.7)"/>
<ellipse cx="272.7" cy="30.3" rx="9.1" ry="3.0" fill="#a8c888" opacity=".65" transform="rotate(-60 272.7 30.3)"/>
<ellipse cx="284.8" cy="12.5" rx="11.0" ry="1.6" fill="#4a7a30" opacity=".65" transform="rotate(-60 284.8 12.5)"/>
<ellipse cx="290.6" cy="-8.4" rx="9.8" ry="1.6" fill="#5a8f3c" opacity=".65" transform="rotate(-60 290.6 -8.4)"/>
<ellipse cx="236.0" cy="13.0" rx="12.8" ry="1.5" fill="#84b85a" opacity=".65" transform="rotate(-60 236.0 13.0)"/>
<ellipse cx="220.3" cy="11.5" rx="5.3" ry="2.6" fill="#4a7a30" opacity=".65" transform="rotate(-60 220.3 11.5)"/>
<ellipse cx="237.8" cy="23.7" rx="7.6" ry="1.4" fill="#9aca6e" opacity=".65" transform="rotate(-60 237.8 23.7)"/>
<ellipse cx="228.7" cy="16.0" rx="5.5" ry="1.5" fill="#84b85a" opacity=".65" transform="rotate(-60 228.7 16.0)"/>
<ellipse cx="293.0" cy="39.8" rx="8.9" ry="1.3" fill="#4a7a30" opacity=".65" transform="rotate(-60 293.0 39.8)"/>
<ellipse cx="268.6" cy="39.9" rx="5.4" ry="1.3" fill="#a8c888" opacity=".65" transform="rotate(-60 268.6 39.9)"/>
<ellipse cx="239.4" cy="9.3" rx="6.6" ry="1.2" fill="#9aca6e" opacity=".65" transform="rotate(-60 239.4 9.3)"/>
<ellipse cx="292.8" cy="48.3" rx="10.8" ry="1.3" fill="#4a7a30" opacity=".65" transform="rotate(-60 292.8 48.3)"/>
<ellipse cx="335.6" cy="-5.7" rx="8.1" ry="1.6" fill="#5a8f3c" opacity=".65" transform="rotate(-60 335.6 -5.7)"/>
<ellipse cx="258.5" cy="38.8" rx="11.1" ry="2.5" fill="#9aca6e" opacity=".65" transform="rotate(-60 258.5 38.8)"/>
<ellipse cx="344.9" cy="-5.1" rx="6.8" ry="1.5" fill="#84b85a" opacity=".65" transform="rotate(-60 344.9 -5.1)"/>
<ellipse cx="261.1" cy="46.8" rx="10.1" ry="1.5" fill="#84b85a" opacity=".65" transform="rotate(-60 261.1 46.8)"/>
<ellipse cx="247.6" cy="9.4" rx="8.1" ry="2.1" fill="#84b85a" opacity=".65" transform="rotate(-60 247.6 9.4)"/>
<ellipse cx="285.8" cy="41.0" rx="12.5" ry="1.4" fill="#a8c888" opacity=".65" transform="rotate(-60 285.8 41.0)"/>
<ellipse cx="343.5" cy="-4.7" rx="7.4" ry="1.6" fill="#a8c888" opacity=".65" transform="rotate(-60 343.5 -4.7)"/>
<ellipse cx="241.5" cy="22.7" rx="10.9" ry="2.8" fill="#84b85a" opacity=".65" transform="rotate(-60 241.5 22.7)"/>
<ellipse cx="281.5" cy="7.1" rx="8.5" ry="2.2" fill="#6ea248" opacity=".65" transform="rotate(-60 281.5 7.1)"/>
<ellipse cx="250.1" cy="24.8" rx="7.1" ry="1.9" fill="#6ea248" opacity=".65" transform="rotate(-60 250.1 24.8)"/>
<ellipse cx="304.9" cy="14.7" rx="6.6" ry="2.2" fill="#a8c888" opacity=".65" transform="rotate(-60 304.9 14.7)"/>
<ellipse cx="241.1" cy="-9.9" rx="10.5" ry="2.3" fill="#6ea248" opacity=".65" transform="rotate(-60 241.1 -9.9)"/>
<ellipse cx="295.4" cy="51.0" rx="5.5" ry="2.5" fill="#6ea248" opacity=".65" transform="rotate(-60 295.4 51.0)"/>
<ellipse cx="263.3" cy="79.1" rx="12.3" ry="2.4" fill="#9aca6e" opacity=".65" transform="rotate(-60 263.3 79.1)"/>
<ellipse cx="287.8" cy="79.1" rx="8.3" ry="1.5" fill="#3a6428" opacity=".65" transform="rotate(-60 287.8 79.1)"/>
<ellipse cx="247.0" cy="4.7" rx="8.8" ry="1.4" fill="#6ea248" opacity=".65" transform="rotate(-60 247.0 4.7)"/>
<ellipse cx="246.8" cy="45.4" rx="11.9" ry="2.4" fill="#5a8f3c" opacity=".65" transform="rotate(-60 246.8 45.4)"/>
<ellipse cx="264.3" cy="-8.6" rx="11.8" ry="2.1" fill="#4a7a30" opacity=".65" transform="rotate(-60 264.3 -8.6)"/>
<ellipse cx="244.7" cy="37.5" rx="12.9" ry="2.6" fill="#84b85a" opacity=".65" transform="rotate(-60 244.7 37.5)"/>
<ellipse cx="271.0" cy="94.5" rx="12.7" ry="2.4" fill="#3a6428" opacity=".65" transform="rotate(-60 271.0 94.5)"/>
<ellipse cx="333.9" cy="0.5" rx="5.4" ry="1.9" fill="#84b85a" opacity=".65" transform="rotate(-60 333.9 0.5)"/>
<ellipse cx="256.2" cy="68.3" rx="8.6" ry="1.7" fill="#9aca6e" opacity=".65" transform="rotate(-60 256.2 68.3)"/>
<ellipse cx="218.4" cy="-8.5" rx="8.9" ry="1.4" fill="#9aca6e" opacity=".65" transform="rotate(-60 218.4 -8.5)"/>
<ellipse cx="314.8" cy="-1.6" rx="6.7" ry="2.0" fill="#9aca6e" opacity=".65" transform="rotate(-60 314.8 -1.6)"/>
<ellipse cx="288.9" cy="-3.4" rx="7.7" ry="1.5" fill="#6ea248" opacity=".65" transform="rotate(-60 288.9 -3.4)"/>
<ellipse cx="320.4" cy="4.2" rx="12.8" ry="1.8" fill="#6ea248" opacity=".65" transform="rotate(-60 320.4 4.2)"/>
<ellipse cx="269.1" cy="29.9" rx="6.7" ry="2.4" fill="#3a6428" opacity=".65" transform="rotate(-60 269.1 29.9)"/>
<ellipse cx="237.1" cy="11.9" rx="11.1" ry="1.8" fill="#a8c888" opacity=".65" transform="rotate(-60 237.1 11.9)"/>
<ellipse cx="269.3" cy="73.8" rx="6.6" ry="1.3" fill="#4a7a30" opacity=".65" transform="rotate(-60 269.3 73.8)"/>
<ellipse cx="224.6" cy="1.7" rx="8.3" ry="2.4" fill="#3a6428" opacity=".65" transform="rotate(-60 224.6 1.7)"/>
<ellipse cx="247.4" cy="43.4" rx="6.0" ry="1.7" fill="#4a7a30" opacity=".65" transform="rotate(-60 247.4 43.4)"/>
<ellipse cx="263.8" cy="62.9" rx="11.4" ry="2.4" fill="#a8c888" opacity=".65" transform="rotate(-60 263.8 62.9)"/>
<ellipse cx="295.7" cy="22.7" rx="9.6" ry="2.9" fill="#4a7a30" opacity=".65" transform="rotate(-60 295.7 22.7)"/>
<ellipse cx="286.5" cy="72.7" rx="12.8" ry="2.2" fill="#9aca6e" opacity=".65" transform="rotate(-60 286.5 72.7)"/>
<ellipse cx="293.3" cy="59.4" rx="6.8" ry="2.8" fill="#4a7a30" opacity=".65" transform="rotate(-60 293.3 59.4)"/>
<ellipse cx="256.4" cy="26.2" rx="5.2" ry="2.3" fill="#4a7a30" opacity=".65" transform="rotate(-60 256.4 26.2)"/>
<ellipse cx="214.5" cy="5.6" rx="5.7" ry="2.5" fill="#84b85a" opacity=".65" transform="rotate(-60 214.5 5.6)"/>
<ellipse cx="279.7" cy="21.5" rx="9.8" ry="1.8" fill="#4a7a30" opacity=".65" transform="rotate(-60 279.7 21.5)"/>
<ellipse cx="253.9" cy="10.3" rx="9.6" ry="2.8" fill="#4a7a30" opacity=".65" transform="rotate(-60 253.9 10.3)"/>
<ellipse cx="296.2" cy="51.5" rx="10.4" ry="1.5" fill="#4a7a30" opacity=".65" transform="rotate(-60 296.2 51.5)"/>
<ellipse cx="275.4" cy="43.8" rx="5.7" ry="1.5" fill="#4a7a30" opacity=".65" transform="rotate(-60 275.4 43.8)"/>
<ellipse cx="259.0" cy="50.5" rx="10.0" ry="2.3" fill="#a8c888" opacity=".65" transform="rotate(-60 259.0 50.5)"/>
<ellipse cx="255.4" cy="54.0" rx="5.7" ry="2.8" fill="#3a6428" opacity=".65" transform="rotate(-60 255.4 54.0)"/>
<ellipse cx="300.1" cy="43.7" rx="8.4" ry="1.3" fill="#5a8f3c" opacity=".65" transform="rotate(-60 300.1 43.7)"/>
<ellipse cx="278.6" cy="67.5" rx="5.0" ry="3.0" fill="#4a7a30" opacity=".65" transform="rotate(-60 278.6 67.5)"/>
<ellipse cx="258.7" cy="49.4" rx="11.2" ry="2.6" fill="#4a7a30" opacity=".65" transform="rotate(-60 258.7 49.4)"/>
<ellipse cx="305.6" cy="10.0" rx="9.5" ry="2.9" fill="#3a6428" opacity=".65" transform="rotate(-60 305.6 10.0)"/>
<ellipse cx="300.4" cy="19.2" rx="5.2" ry="1.8" fill="#4a7a30" opacity=".65" transform="rotate(-60 300.4 19.2)"/>
<ellipse cx="246.4" cy="30.4" rx="5.5" ry="2.4" fill="#9aca6e" opacity=".65" transform="rotate(-60 246.4 30.4)"/>
<ellipse cx="291.3" cy="33.7" rx="5.8" ry="1.2" fill="#9aca6e" opacity=".65" transform="rotate(-60 291.3 33.7)"/>
<ellipse cx="317.8" cy="20.0" rx="6.6" ry="1.9" fill="#84b85a" opacity=".65" transform="rotate(-60 317.8 20.0)"/>
<ellipse cx="264.6" cy="1.8" rx="5.4" ry="2.1" fill="#a8c888" opacity=".65" transform="rotate(-60 264.6 1.8)"/>
<ellipse cx="342.7" cy="-0.2" rx="6.6" ry="2.8" fill="#4a7a30" opacity=".65" transform="rotate(-60 342.7 -0.2)"/>
<ellipse cx="327.5" cy="-0.7" rx="8.2" ry="2.3" fill="#5a8f3c" opacity=".65" transform="rotate(-60 327.5 -0.7)"/>
<ellipse cx="258.8" cy="55.0" rx="7.5" ry="1.7" fill="#6ea248" opacity=".65" transform="rotate(-60 258.8 55.0)"/>
<ellipse cx="276.9" cy="38.0" rx="10.4" ry="1.8" fill="#4a7a30" opacity=".65" transform="rotate(-60 276.9 38.0)"/>
<ellipse cx="268.5" cy="39.1" rx="10.0" ry="1.2" fill="#a8c888" opacity=".65" transform="rotate(-60 268.5 39.1)"/>
<ellipse cx="316.5" cy="10.4" rx="5.2" ry="2.1" fill="#5a8f3c" opacity=".65" transform="rotate(-60 316.5 10.4)"/>
<ellipse cx="244.8" cy="47.7" rx="5.2" ry="1.4" fill="#9aca6e" opacity=".65" transform="rotate(-60 244.8 47.7)"/>
<ellipse cx="268.8" cy="34.7" rx="9.0" ry="2.6" fill="#a8c888" opacity=".65" transform="rotate(-60 268.8 34.7)"/>
<ellipse cx="263.1" cy="59.3" rx="11.7" ry="2.7" fill="#6ea248" opacity=".65" transform="rotate(-60 263.1 59.3)"/>
<ellipse cx="276.7" cy="62.6" rx="9.8" ry="1.4" fill="#6ea248" opacity=".65" transform="rotate(-60 276.7 62.6)"/>
<ellipse cx="253.7" cy="50.0" rx="9.7" ry="2.5" fill="#6ea248" opacity=".65" transform="rotate(-60 253.7 50.0)"/>
<ellipse cx="224.8" cy="12.2" rx="12.5" ry="1.4" fill="#3a6428" opacity=".65" transform="rotate(-60 224.8 12.2)"/>
<ellipse cx="260.2" cy="25.5" rx="6.5" ry="1.9" fill="#84b85a" opacity=".65" transform="rotate(-60 260.2 25.5)"/>
<ellipse cx="272.7" cy="58.2" rx="9.8" ry="2.9" fill="#9aca6e" opacity=".65" transform="rotate(-60 272.7 58.2)"/>
<ellipse cx="329.2" cy="19.7" rx="6.6" ry="2.8" fill="#5a8f3c" opacity=".65" transform="rotate(-60 329.2 19.7)"/>
<ellipse cx="266.8" cy="81.5" rx="7.5" ry="1.2" fill="#a8c888" opacity=".65" transform="rotate(-60 266.8 81.5)"/>
<ellipse cx="265.1" cy="87.1" rx="12.6" ry="2.3" fill="#a8c888" opacity=".65" transform="rotate(-60 265.1 87.1)"/>
<ellipse cx="313.9" cy="5.0" rx="12.4" ry="2.7" fill="#6ea248" opacity=".65" transform="rotate(-60 313.9 5.0)"/>
<ellipse cx="282.0" cy="-0.3" rx="5.3" ry="1.3" fill="#6ea248" opacity=".65" transform="rotate(-60 282.0 -0.3)"/>
<ellipse cx="260.5" cy="77.8" rx="10.5" ry="1.9" fill="#4a7a30" opacity=".65" transform="rotate(-60 260.5 77.8)"/>
<ellipse cx="295.1" cy="-1.2" rx="10.8" ry="2.6" fill="#3a6428" opacity=".65" transform="rotate(-60 295.1 -1.2)"/>
<ellipse cx="263.2" cy="16.7" rx="8.5" ry="2.7" fill="#4a7a30" opacity=".65" transform="rotate(-60 263.2 16.7)"/>
<ellipse cx="308.9" cy="10.3" rx="12.4" ry="2.7" fill="#3a6428" opacity=".65" transform="rotate(-60 308.9 10.3)"/>
<ellipse cx="211.5" cy="0.8" rx="7.8" ry="3.0" fill="#84b85a" opacity=".65" transform="rotate(-60 211.5 0.8)"/>
<ellipse cx="267.3" cy="-0.4" rx="8.7" ry="1.2" fill="#4a7a30" opacity=".65" transform="rotate(-60 267.3 -0.4)"/>
<ellipse cx="290.6" cy="73.0" rx="7.9" ry="1.2" fill="#4a7a30" opacity=".65" transform="rotate(-60 290.6 73.0)"/>
<ellipse cx="251.1" cy="25.7" rx="9.6" ry="2.5" fill="#84b85a" opacity=".65" transform="rotate(-60 251.1 25.7)"/>
<ellipse cx="313.9" cy="1.9" rx="7.9" ry="1.3" fill="#3a6428" opacity=".65" transform="rotate(-60 313.9 1.9)"/>
<ellipse cx="283.8" cy="29.1" rx="5.1" ry="1.7" fill="#4a7a30" opacity=".65" transform="rotate(-60 283.8 29.1)"/>
<ellipse cx="267.9" cy="58.1" rx="10.6" ry="1.8" fill="#a8c888" opacity=".65" transform="rotate(-60 267.9 58.1)"/>
<ellipse cx="247.9" cy="35.1" rx="11.0" ry="2.7" fill="#5a8f3c" opacity=".65" transform="rotate(-60 247.9 35.1)"/>
<ellipse cx="292.4" cy="68.6" rx="8.1" ry="1.8" fill="#9aca6e" opacity=".65" transform="rotate(-60 292.4 68.6)"/>
<ellipse cx="312.3" cy="-7.0" rx="6.7" ry="1.7" fill="#84b85a" opacity=".65" transform="rotate(-60 312.3 -7.0)"/>
<ellipse cx="289.3" cy="31.6" rx="12.1" ry="2.9" fill="#5a8f3c" opacity=".65" transform="rotate(-60 289.3 31.6)"/>
<ellipse cx="260.3" cy="-6.4" rx="5.3" ry="2.1" fill="#a8c888" opacity=".65" transform="rotate(-60 260.3 -6.4)"/>
<ellipse cx="306.3" cy="32.8" rx="8.3" ry="2.1" fill="#9aca6e" opacity=".65" transform="rotate(-60 306.3 32.8)"/>
<ellipse cx="229.6" cy="27.3" rx="7.8" ry="2.6" fill="#a8c888" opacity=".65" transform="rotate(-60 229.6 27.3)"/>
<ellipse cx="246.0" cy="14.7" rx="5.8" ry="1.4" fill="#6ea248" opacity=".65" transform="rotate(-60 246.0 14.7)"/>
<ellipse cx="267.8" cy="51.4" rx="10.6" ry="1.8" fill="#6ea248" opacity=".65" transform="rotate(-60 267.8 51.4)"/>
<ellipse cx="228.9" cy="1.0" rx="6.2" ry="1.3" fill="#6ea248" opacity=".65" transform="rotate(-60 228.9 1.0)"/>
<ellipse cx="268.9" cy="44.6" rx="9.4" ry="2.8" fill="#4a7a30" opacity=".65" transform="rotate(-60 268.9 44.6)"/>
<ellipse cx="235.2" cy="14.5" rx="5.8" ry="1.3" fill="#3a6428" opacity=".65" transform="rotate(-60 235.2 14.5)"/>
<ellipse cx="224.0" cy="10.3" rx="12.3" ry="2.9" fill="#4a7a30" opacity=".65" transform="rotate(-60 224.0 10.3)"/>
<ellipse cx="277.4" cy="-3.3" rx="11.8" ry="1.6" fill="#4a7a30" opacity=".65" transform="rotate(-60 277.4 -3.3)"/>
<ellipse cx="233.7" cy="6.3" rx="11.5" ry="1.7" fill="#84b85a" opacity=".65" transform="rotate(-60 233.7 6.3)"/>
<ellipse cx="328.1" cy="21.7" rx="11.6" ry="1.7" fill="#3a6428" opacity=".65" transform="rotate(-60 328.1 21.7)"/>
<ellipse cx="278.0" cy="38.8" rx="10.7" ry="2.9" fill="#5a8f3c" opacity=".65" transform="rotate(-60 278.0 38.8)"/>
<ellipse cx="305.0" cy="19.1" rx="6.0" ry="2.7" fill="#5a8f3c" opacity=".65" transform="rotate(-60 305.0 19.1)"/>
<ellipse cx="271.7" cy="34.7" rx="9.2" ry="1.3" fill="#6ea248" opacity=".65" transform="rotate(-60 271.7 34.7)"/>
<ellipse cx="293.6" cy="50.1" rx="12.9" ry="1.6" fill="#3a6428" opacity=".65" transform="rotate(-60 293.6 50.1)"/>
<ellipse cx="231.0" cy="-6.9" rx="10.1" ry="2.6" fill="#a8c888" opacity=".65" transform="rotate(-60 231.0 -6.9)"/>
<ellipse cx="328.8" cy="7.8" rx="8.6" ry="1.9" fill="#a8c888" opacity=".65" transform="rotate(-60 328.8 7.8)"/>
<ellipse cx="273.9" cy="72.2" rx="10.5" ry="2.7" fill="#9aca6e" opacity=".65" transform="rotate(-60 273.9 72.2)"/>
<ellipse cx="325.1" cy="18.1" rx="6.6" ry="2.0" fill="#4a7a30" opacity=".65" transform="rotate(-60 325.1 18.1)"/>
<ellipse cx="262.6" cy="47.1" rx="7.3" ry="2.0" fill="#9aca6e" opacity=".65" transform="rotate(-60 262.6 47.1)"/>
<ellipse cx="291.0" cy="-1.7" rx="9.4" ry="2.2" fill="#9aca6e" opacity=".65" transform="rotate(-60 291.0 -1.7)"/>
<ellipse cx="217.5" cy="1.1" rx="8.7" ry="2.0" fill="#3a6428" opacity=".65" transform="rotate(-60 217.5 1.1)"/>
<ellipse cx="282.6" cy="43.0" rx="10.4" ry="2.5" fill="#9aca6e" opacity=".65" transform="rotate(-60 282.6 43.0)"/>
<ellipse cx="297.7" cy="4.1" rx="11.6" ry="2.3" fill="#84b85a" opacity=".65" transform="rotate(-60 297.7 4.1)"/>
<ellipse cx="226.7" cy="-3.9" rx="8.3" ry="2.9" fill="#4a7a30" opacity=".65" transform="rotate(-60 226.7 -3.9)"/>
<ellipse cx="217.2" cy="16.6" rx="8.3" ry="1.4" fill="#6ea248" opacity=".65" transform="rotate(-60 217.2 16.6)"/>
<ellipse cx="296.4" cy="35.6" rx="7.0" ry="2.3" fill="#4a7a30" opacity=".65" transform="rotate(-60 296.4 35.6)"/>
<ellipse cx="284.8" cy="23.4" rx="7.5" ry="1.4" fill="#6ea248" opacity=".65" transform="rotate(-60 284.8 23.4)"/>
<ellipse cx="223.5" cy="3.0" rx="12.2" ry="2.0" fill="#9aca6e" opacity=".65" transform="rotate(-60 223.5 3.0)"/>
<ellipse cx="310.6" cy="12.5" rx="10.0" ry="2.2" fill="#5a8f3c" opacity=".65" transform="rotate(-60 310.6 12.5)"/>
<ellipse cx="238.3" cy="39.3" rx="7.0" ry="2.4" fill="#a8c888" opacity=".65" transform="rotate(-60 238.3 39.3)"/>
<ellipse cx="220.5" cy="-6.4" rx="5.9" ry="1.4" fill="#4a7a30" opacity=".65" transform="rotate(-60 220.5 -6.4)"/>
<ellipse cx="325.0" cy="28.4" rx="10.4" ry="2.2" fill="#6ea248" opacity=".65" transform="rotate(-60 325.0 28.4)"/>
<ellipse cx="279.5" cy="20.7" rx="9.6" ry="1.8" fill="#84b85a" opacity=".65" transform="rotate(-60 279.5 20.7)"/>
<ellipse cx="328.7" cy="-9.0" rx="6.4" ry="2.5" fill="#84b85a" opacity=".65" transform="rotate(-60 328.7 -9.0)"/>
<ellipse cx="285.3" cy="79.0" rx="8.8" ry="1.5" fill="#4a7a30" opacity=".65" transform="rotate(-60 285.3 79.0)"/>
<ellipse cx="271.2" cy="58.3" rx="7.2" ry="1.4" fill="#5a8f3c" opacity=".65" transform="rotate(-60 271.2 58.3)"/>
<ellipse cx="244.1" cy="9.0" rx="9.1" ry="1.8" fill="#4a7a30" opacity=".65" transform="rotate(-60 244.1 9.0)"/>
<ellipse cx="278.7" cy="-3.5" rx="12.8" ry="2.1" fill="#4a7a30" opacity=".65" transform="rotate(-60 278.7 -3.5)"/>
<ellipse cx="244.5" cy="11.5" rx="6.4" ry="2.5" fill="#9aca6e" opacity=".65" transform="rotate(-60 244.5 11.5)"/>
<ellipse cx="334.6" cy="-9.2" rx="12.3" ry="2.0" fill="#5a8f3c" opacity=".65" transform="rotate(-60 334.6 -9.2)"/>
<ellipse cx="294.8" cy="49.8" rx="11.8" ry="1.9" fill="#9aca6e" opacity=".65" transform="rotate(-60 294.8 49.8)"/>
<ellipse cx="327.2" cy="-9.5" rx="7.6" ry="2.9" fill="#3a6428" opacity=".65" transform="rotate(-60 327.2 -9.5)"/>
<ellipse cx="287.8" cy="25.3" rx="12.4" ry="1.6" fill="#6ea248" opacity=".65" transform="rotate(-60 287.8 25.3)"/>
<ellipse cx="259.8" cy="17.1" rx="8.4" ry="2.3" fill="#5a8f3c" opacity=".65" transform="rotate(-60 259.8 17.1)"/>
<ellipse cx="324.8" cy="20.8" rx="7.9" ry="2.0" fill="#4a7a30" opacity=".65" transform="rotate(-60 324.8 20.8)"/>
<ellipse cx="292.1" cy="39.8" rx="8.1" ry="2.0" fill="#4a7a30" opacity=".65" transform="rotate(-60 292.1 39.8)"/>
<ellipse cx="258.3" cy="20.5" rx="10.9" ry="1.4" fill="#9aca6e" opacity=".65" transform="rotate(-60 258.3 20.5)"/>
<ellipse cx="229.6" cy="-6.2" rx="12.4" ry="1.4" fill="#9aca6e" opacity=".65" transform="rotate(-60 229.6 -6.2)"/>
<ellipse cx="250.4" cy="51.6" rx="9.7" ry="2.8" fill="#5a8f3c" opacity=".65" transform="rotate(-60 250.4 51.6)"/>
<ellipse cx="301.2" cy="21.2" rx="7.9" ry="2.5" fill="#4a7a30" opacity=".65" transform="rotate(-60 301.2 21.2)"/>
<ellipse cx="254.6" cy="45.6" rx="6.6" ry="2.1" fill="#5a8f3c" opacity=".65" transform="rotate(-60 254.6 45.6)"/>
<ellipse cx="324.9" cy="25.5" rx="5.7" ry="1.6" fill="#6ea248" opacity=".65" transform="rotate(-60 324.9 25.5)"/>
<ellipse cx="303.8" cy="19.6" rx="11.0" ry="3.0" fill="#a8c888" opacity=".65" transform="rotate(-60 303.8 19.6)"/>
<ellipse cx="261.9" cy="56.3" rx="7.0" ry="2.5" fill="#9aca6e" opacity=".65" transform="rotate(-60 261.9 56.3)"/>
<ellipse cx="199.7" cy="-4.3" rx="6.6" ry="1.7" fill="#6ea248" opacity=".65" transform="rotate(-60 199.7 -4.3)"/>
<ellipse cx="260.1" cy="60.0" rx="11.3" ry="1.6" fill="#3a6428" opacity=".65" transform="rotate(-60 260.1 60.0)"/>
<ellipse cx="320.4" cy="3.5" rx="5.7" ry="1.6" fill="#9aca6e" opacity=".65" transform="rotate(-60 320.4 3.5)"/>
<ellipse cx="292.3" cy="22.9" rx="12.5" ry="2.0" fill="#6ea248" opacity=".65" transform="rotate(-60 292.3 22.9)"/>
<ellipse cx="268.6" cy="41.9" rx="8.2" ry="2.6" fill="#84b85a" opacity=".65" transform="rotate(-60 268.6 41.9)"/>
<ellipse cx="262.5" cy="65.8" rx="5.1" ry="1.8" fill="#3a6428" opacity=".65" transform="rotate(-60 262.5 65.8)"/>
<ellipse cx="273.7" cy="82.9" rx="9.2" ry="1.9" fill="#3a6428" opacity=".65" transform="rotate(-60 273.7 82.9)"/>
<ellipse cx="257.2" cy="67.4" rx="10.9" ry="1.5" fill="#84b85a" opacity=".65" transform="rotate(-60 257.2 67.4)"/>
<ellipse cx="293.3" cy="5.4" rx="11.8" ry="2.5" fill="#5a8f3c" opacity=".65" transform="rotate(-60 293.3 5.4)"/>
<ellipse cx="264.3" cy="48.6" rx="11.2" ry="2.6" fill="#6ea248" opacity=".65" transform="rotate(-60 264.3 48.6)"/>
<ellipse cx="274.5" cy="14.0" rx="11.2" ry="1.7" fill="#84b85a" opacity=".65" transform="rotate(-60 274.5 14.0)"/>
<ellipse cx="284.2" cy="52.2" rx="11.7" ry="2.2" fill="#4a7a30" opacity=".65" transform="rotate(-60 284.2 52.2)"/>
<ellipse cx="224.6" cy="3.3" rx="7.0" ry="2.3" fill="#a8c888" opacity=".65" transform="rotate(-60 224.6 3.3)"/>
<ellipse cx="278.9" cy="68.9" rx="12.2" ry="1.5" fill="#3a6428" opacity=".65" transform="rotate(-60 278.9 68.9)"/>
<ellipse cx="342.4" cy="-9.1" rx="7.6" ry="1.8" fill="#9aca6e" opacity=".65" transform="rotate(-60 342.4 -9.1)"/>
<ellipse cx="260.6" cy="45.8" rx="11.1" ry="2.7" fill="#6ea248" opacity=".65" transform="rotate(-60 260.6 45.8)"/>
<ellipse cx="260.8" cy="48.1" rx="7.5" ry="2.7" fill="#a8c888" opacity=".65" transform="rotate(-60 260.8 48.1)"/>
<ellipse cx="255.2" cy="62.4" rx="7.9" ry="1.2" fill="#3a6428" opacity=".65" transform="rotate(-60 255.2 62.4)"/>
<ellipse cx="322.4" cy="26.3" rx="10.2" ry="1.5" fill="#6ea248" opacity=".65" transform="rotate(-60 322.4 26.3)"/>
<ellipse cx="295.5" cy="58.0" rx="12.2" ry="2.8" fill="#9aca6e" opacity=".65" transform="rotate(-60 295.5 58.0)"/>
<ellipse cx="316.0" cy="19.3" rx="11.5" ry="1.7" fill="#4a7a30" opacity=".65" transform="rotate(-60 316.0 19.3)"/>
<ellipse cx="300.0" cy="8.3" rx="11.1" ry="3.0" fill="#a8c888" opacity=".65" transform="rotate(-60 300.0 8.3)"/>
<ellipse cx="288.3" cy="75.4" rx="8.8" ry="1.9" fill="#3a6428" opacity=".65" transform="rotate(-60 288.3 75.4)"/>
<ellipse cx="314.8" cy="-1.7" rx="10.4" ry="1.3" fill="#4a7a30" opacity=".65" transform="rotate(-60 314.8 -1.7)"/>
<ellipse cx="279.2" cy="23.2" rx="6.9" ry="1.3" fill="#4a7a30" opacity=".65" transform="rotate(-60 279.2 23.2)"/>
<ellipse cx="279.3" cy="44.4" rx="6.5" ry="1.9" fill="#a8c888" opacity=".65" transform="rotate(-60 279.3 44.4)"/>
<ellipse cx="295.2" cy="49.1" rx="11.6" ry="1.5" fill="#3a6428" opacity=".65" transform="rotate(-60 295.2 49.1)"/>
<ellipse cx="247.5" cy="32.5" rx="11.0" ry="2.5" fill="#4a7a30" opacity=".65" transform="rotate(-60 247.5 32.5)"/>
<ellipse cx="252.3" cy="1.6" rx="6.2" ry="1.9" fill="#84b85a" opacity=".65" transform="rotate(-60 252.3 1.6)"/>
<ellipse cx="248.1" cy="33.5" rx="6.9" ry="1.5" fill="#4a7a30" opacity=".65" transform="rotate(-60 248.1 33.5)"/>
<ellipse cx="298.9" cy="27.7" rx="7.1" ry="1.5" fill="#4a7a30" opacity=".65" transform="rotate(-60 298.9 27.7)"/>
<ellipse cx="261.5" cy="11.9" rx="5.6" ry="1.9" fill="#4a7a30" opacity=".65" transform="rotate(-60 261.5 11.9)"/>
<ellipse cx="293.8" cy="9.2" rx="6.9" ry="2.3" fill="#4a7a30" opacity=".65" transform="rotate(-60 293.8 9.2)"/>
<ellipse cx="260.8" cy="25.3" rx="11.8" ry="1.8" fill="#a8c888" opacity=".65" transform="rotate(-60 260.8 25.3)"/>
<ellipse cx="238.2" cy="-2.1" rx="11.6" ry="2.3" fill="#84b85a" opacity=".65" transform="rotate(-60 238.2 -2.1)"/>
<ellipse cx="292.0" cy="71.6" rx="7.4" ry="1.5" fill="#3a6428" opacity=".65" transform="rotate(-60 292.0 71.6)"/>
<ellipse cx="231.6" cy="4.9" rx="10.4" ry="2.6" fill="#6ea248" opacity=".65" transform="rotate(-60 231.6 4.9)"/>
<ellipse cx="275.9" cy="77.9" rx="7.4" ry="2.6" fill="#9aca6e" opacity=".65" transform="rotate(-60 275.9 77.9)"/>
<ellipse cx="271.1" cy="58.0" rx="7.3" ry="2.4" fill="#4a7a30" opacity=".65" transform="rotate(-60 271.1 58.0)"/>
<ellipse cx="275.1" cy="103.5" rx="8.6" ry="2.7" fill="#84b85a" opacity=".65" transform="rotate(-60 275.1 103.5)"/>
<ellipse cx="206.7" cy="3.5" rx="8.5" ry="2.4" fill="#4a7a30" opacity=".65" transform="rotate(-60 206.7 3.5)"/>
<ellipse cx="266.2" cy="27.2" rx="9.2" ry="1.7" fill="#4a7a30" opacity=".65" transform="rotate(-60 266.2 27.2)"/>
<ellipse cx="250.6" cy="-9.8" rx="10.6" ry="1.9" fill="#6ea248" opacity=".65" transform="rotate(-60 250.6 -9.8)"/>
<ellipse cx="320.7" cy="29.4" rx="9.3" ry="2.4" fill="#6ea248" opacity=".65" transform="rotate(-60 320.7 29.4)"/>
<ellipse cx="290.0" cy="43.2" rx="8.6" ry="2.4" fill="#4a7a30" opacity=".65" transform="rotate(-60 290.0 43.2)"/>
<ellipse cx="272.1" cy="87.1" rx="8.2" ry="2.6" fill="#3a6428" opacity=".65" transform="rotate(-60 272.1 87.1)"/>
<ellipse cx="271.2" cy="79.9" rx="12.0" ry="1.3" fill="#84b85a" opacity=".65" transform="rotate(-60 271.2 79.9)"/>
<ellipse cx="231.8" cy="-3.7" rx="7.5" ry="2.8" fill="#9aca6e" opacity=".65" transform="rotate(-60 231.8 -3.7)"/>
<ellipse cx="265.2" cy="4.1" rx="8.7" ry="1.5" fill="#9aca6e" opacity=".65" transform="rotate(-60 265.2 4.1)"/>
<ellipse cx="228.0" cy="14.2" rx="7.5" ry="2.8" fill="#9aca6e" opacity=".65" transform="rotate(-60 228.0 14.2)"/>
<ellipse cx="231.0" cy="1.1" rx="5.9" ry="2.5" fill="#6ea248" opacity=".65" transform="rotate(-60 231.0 1.1)"/>
<ellipse cx="291.9" cy="72.8" rx="12.9" ry="2.5" fill="#84b85a" opacity=".65" transform="rotate(-60 291.9 72.8)"/>
<ellipse cx="281.7" cy="71.8" rx="8.3" ry="2.7" fill="#3a6428" opacity=".65" transform="rotate(-60 281.7 71.8)"/>
<ellipse cx="293.4" cy="19.9" rx="11.2" ry="2.8" fill="#84b85a" opacity=".65" transform="rotate(-60 293.4 19.9)"/>
<ellipse cx="250.3" cy="52.5" rx="12.5" ry="3.0" fill="#9aca6e" opacity=".65" transform="rotate(-60 250.3 52.5)"/>
<ellipse cx="247.6" cy="19.0" rx="7.1" ry="1.3" fill="#4a7a30" opacity=".65" transform="rotate(-60 247.6 19.0)"/>
<ellipse cx="260.3" cy="72.8" rx="9.7" ry="2.9" fill="#4a7a30" opacity=".65" transform="rotate(-60 260.3 72.8)"/>
<ellipse cx="280.5" cy="84.1" rx="6.3" ry="2.4" fill="#5a8f3c" opacity=".65" transform="rotate(-60 280.5 84.1)"/>
<ellipse cx="258.9" cy="18.1" rx="12.8" ry="2.8" fill="#a8c888" opacity=".65" transform="rotate(-60 258.9 18.1)"/>
<ellipse cx="232.0" cy="0.7" rx="12.4" ry="2.4" fill="#6ea248" opacity=".65" transform="rotate(-60 232.0 0.7)"/>
<ellipse cx="293.5" cy="36.7" rx="5.4" ry="1.3" fill="#3a6428" opacity=".65" transform="rotate(-60 293.5 36.7)"/>
<ellipse cx="289.1" cy="68.6" rx="8.9" ry="2.0" fill="#84b85a" opacity=".65" transform="rotate(-60 289.1 68.6)"/>
<ellipse cx="280.1" cy="64.2" rx="7.9" ry="2.3" fill="#a8c888" opacity=".65" transform="rotate(-60 280.1 64.2)"/>
<ellipse cx="301.3" cy="25.9" rx="7.1" ry="2.5" fill="#3a6428" opacity=".65" transform="rotate(-60 301.3 25.9)"/>
<ellipse cx="244.6" cy="24.7" rx="6.0" ry="1.5" fill="#9aca6e" opacity=".65" transform="rotate(-60 244.6 24.7)"/>
<ellipse cx="241.3" cy="31.7" rx="6.9" ry="1.9" fill="#6ea248" opacity=".65" transform="rotate(-60 241.3 31.7)"/>
<ellipse cx="257.6" cy="29.9" rx="8.6" ry="2.9" fill="#5a8f3c" opacity=".65" transform="rotate(-60 257.6 29.9)"/>
<ellipse cx="296.5" cy="-6.8" rx="5.8" ry="2.3" fill="#4a7a30" opacity=".65" transform="rotate(-60 296.5 -6.8)"/>
<ellipse cx="263.7" cy="12.0" rx="5.7" ry="2.6" fill="#4a7a30" opacity=".65" transform="rotate(-60 263.7 12.0)"/>
</g>
<polygon points="128.0,-10.0 206.0,-10.0 230.0,30.0 254.0,63.0 273.0,105.0 254.0,137.0 228.0,195.0 202.0,225.0 163.0,265.0 105.0,318.0 -10.0,318.0 -10.0,215.0 28.0,168.0 62.0,122.0 100.0,50.0" fill="#467a30" filter="url(#b2)"/>
<g mask="url(#tc)">
<g filter="url(#b4)">
<ellipse cx="172.5" cy="246.6" rx="19.6" ry="6.9" fill="#36602a" opacity=".75" transform="rotate(-60 172.5 246.6)"/>
<ellipse cx="131.3" cy="121.0" rx="16.4" ry="4.6" fill="#6fa64a" opacity=".75" transform="rotate(-60 131.3 121.0)"/>
<ellipse cx="141.6" cy="67.6" rx="16.4" ry="5.7" fill="#36602a" opacity=".75" transform="rotate(-60 141.6 67.6)"/>
<ellipse cx="40.6" cy="218.2" rx="23.1" ry="4.4" fill="#3a6626" opacity=".75" transform="rotate(-60 40.6 218.2)"/>
<ellipse cx="142.4" cy="105.7" rx="13.2" ry="6.3" fill="#93c266" opacity=".75" transform="rotate(-60 142.4 105.7)"/>
<ellipse cx="173.0" cy="166.5" rx="16.3" ry="8.5" fill="#2f5823" opacity=".75" transform="rotate(-60 173.0 166.5)"/>
<ellipse cx="163.3" cy="185.6" rx="14.7" ry="7.1" fill="#3a6626" opacity=".75" transform="rotate(-60 163.3 185.6)"/>
<ellipse cx="24.2" cy="289.2" rx="25.2" ry="7.2" fill="#3a6626" opacity=".75" transform="rotate(-60 24.2 289.2)"/>
<ellipse cx="55.4" cy="190.6" rx="20.2" ry="4.7" fill="#2f5823" opacity=".75" transform="rotate(-60 55.4 190.6)"/>
<ellipse cx="68.9" cy="188.2" rx="18.7" ry="4.7" fill="#2c5220" opacity=".75" transform="rotate(-60 68.9 188.2)"/>
<ellipse cx="98.6" cy="220.0" rx="20.9" ry="6.8" fill="#88bb5e" opacity=".75" transform="rotate(-60 98.6 220.0)"/>
<ellipse cx="172.2" cy="77.4" rx="13.8" ry="4.4" fill="#93c266" opacity=".75" transform="rotate(-60 172.2 77.4)"/>
<ellipse cx="21.1" cy="277.5" rx="17.2" ry="6.5" fill="#7cb454" opacity=".75" transform="rotate(-60 21.1 277.5)"/>
<ellipse cx="201.7" cy="128.9" rx="14.9" ry="4.3" fill="#36602a" opacity=".75" transform="rotate(-60 201.7 128.9)"/>
<ellipse cx="151.4" cy="148.0" rx="24.2" ry="6.5" fill="#3a6626" opacity=".75" transform="rotate(-60 151.4 148.0)"/>
<ellipse cx="116.7" cy="232.8" rx="23.0" ry="6.1" fill="#36602a" opacity=".75" transform="rotate(-60 116.7 232.8)"/>
<ellipse cx="162.0" cy="251.3" rx="21.6" ry="7.5" fill="#2c5220" opacity=".75" transform="rotate(-60 162.0 251.3)"/>
<ellipse cx="227.9" cy="170.4" rx="13.8" ry="4.3" fill="#2f5823" opacity=".75" transform="rotate(-60 227.9 170.4)"/>
<ellipse cx="197.8" cy="62.6" rx="10.0" ry="5.0" fill="#3a6626" opacity=".75" transform="rotate(-60 197.8 62.6)"/>
<ellipse cx="212.9" cy="120.0" rx="15.5" ry="8.7" fill="#3a6626" opacity=".75" transform="rotate(-60 212.9 120.0)"/>
<ellipse cx="130.6" cy="97.8" rx="19.8" ry="7.1" fill="#3a6626" opacity=".75" transform="rotate(-60 130.6 97.8)"/>
<ellipse cx="171.9" cy="156.2" rx="14.2" ry="8.3" fill="#93c266" opacity=".75" transform="rotate(-60 171.9 156.2)"/>
<ellipse cx="215.2" cy="11.8" rx="19.8" ry="7.8" fill="#36602a" opacity=".75" transform="rotate(-60 215.2 11.8)"/>
<ellipse cx="95.8" cy="90.5" rx="25.6" ry="4.5" fill="#7cb454" opacity=".75" transform="rotate(-60 95.8 90.5)"/>
<ellipse cx="195.4" cy="95.8" rx="16.2" ry="6.3" fill="#2c5220" opacity=".75" transform="rotate(-60 195.4 95.8)"/>
<ellipse cx="66.4" cy="274.2" rx="15.8" ry="6.7" fill="#2f5823" opacity=".75" transform="rotate(-60 66.4 274.2)"/>
<ellipse cx="255.0" cy="102.5" rx="18.1" ry="8.0" fill="#2c5220" opacity=".75" transform="rotate(-60 255.0 102.5)"/>
<ellipse cx="96.2" cy="166.2" rx="19.4" ry="7.6" fill="#2c5220" opacity=".75" transform="rotate(-60 96.2 166.2)"/>
<ellipse cx="103.2" cy="126.0" rx="19.4" ry="4.0" fill="#36602a" opacity=".75" transform="rotate(-60 103.2 126.0)"/>
<ellipse cx="14.3" cy="258.8" rx="18.2" ry="7.5" fill="#36602a" opacity=".75" transform="rotate(-60 14.3 258.8)"/>
<ellipse cx="57.8" cy="236.7" rx="25.3" ry="4.7" fill="#7cb454" opacity=".75" transform="rotate(-60 57.8 236.7)"/>
<ellipse cx="147.5" cy="18.0" rx="10.2" ry="8.2" fill="#36602a" opacity=".75" transform="rotate(-60 147.5 18.0)"/>
<ellipse cx="222.7" cy="127.6" rx="14.3" ry="6.6" fill="#2c5220" opacity=".75" transform="rotate(-60 222.7 127.6)"/>
<ellipse cx="10.6" cy="243.3" rx="25.9" ry="6.0" fill="#6fa64a" opacity=".75" transform="rotate(-60 10.6 243.3)"/>
<ellipse cx="10.0" cy="285.2" rx="20.5" ry="8.6" fill="#93c266" opacity=".75" transform="rotate(-60 10.0 285.2)"/>
<ellipse cx="110.7" cy="104.8" rx="10.7" ry="4.1" fill="#2f5823" opacity=".75" transform="rotate(-60 110.7 104.8)"/>
<ellipse cx="115.7" cy="148.2" rx="17.5" ry="6.9" fill="#36602a" opacity=".75" transform="rotate(-60 115.7 148.2)"/>
<ellipse cx="82.0" cy="124.3" rx="21.5" ry="5.1" fill="#6fa64a" opacity=".75" transform="rotate(-60 82.0 124.3)"/>
<ellipse cx="127.9" cy="61.5" rx="22.1" ry="4.8" fill="#7cb454" opacity=".75" transform="rotate(-60 127.9 61.5)"/>
<ellipse cx="194.1" cy="114.6" rx="10.3" ry="4.1" fill="#2c5220" opacity=".75" transform="rotate(-60 194.1 114.6)"/>
<ellipse cx="111.2" cy="130.6" rx="19.8" ry="4.1" fill="#2f5823" opacity=".75" transform="rotate(-60 111.2 130.6)"/>
<ellipse cx="195.2" cy="124.9" rx="11.8" ry="6.2" fill="#2f5823" opacity=".75" transform="rotate(-60 195.2 124.9)"/>
<ellipse cx="255.1" cy="106.5" rx="18.4" ry="6.0" fill="#7cb454" opacity=".75" transform="rotate(-60 255.1 106.5)"/>
<ellipse cx="54.4" cy="196.4" rx="25.8" ry="7.1" fill="#2c5220" opacity=".75" transform="rotate(-60 54.4 196.4)"/>
<ellipse cx="-1.7" cy="297.3" rx="17.8" ry="6.6" fill="#93c266" opacity=".75" transform="rotate(-60 -1.7 297.3)"/>
<ellipse cx="132.0" cy="269.6" rx="21.7" ry="7.7" fill="#2f5823" opacity=".75" transform="rotate(-60 132.0 269.6)"/>
<ellipse cx="250.7" cy="130.3" rx="11.0" ry="5.3" fill="#7cb454" opacity=".75" transform="rotate(-60 250.7 130.3)"/>
<ellipse cx="198.1" cy="31.5" rx="21.9" ry="6.0" fill="#2f5823" opacity=".75" transform="rotate(-60 198.1 31.5)"/>
<ellipse cx="52.3" cy="257.3" rx="17.7" ry="7.3" fill="#7cb454" opacity=".75" transform="rotate(-60 52.3 257.3)"/>
<ellipse cx="198.1" cy="215.7" rx="22.5" ry="8.7" fill="#2f5823" opacity=".75" transform="rotate(-60 198.1 215.7)"/>
<ellipse cx="244.0" cy="61.4" rx="22.5" ry="7.6" fill="#2f5823" opacity=".75" transform="rotate(-60 244.0 61.4)"/>
<ellipse cx="109.8" cy="133.7" rx="11.9" ry="6.2" fill="#6fa64a" opacity=".75" transform="rotate(-60 109.8 133.7)"/>
<ellipse cx="126.8" cy="238.1" rx="24.1" ry="5.0" fill="#2c5220" opacity=".75" transform="rotate(-60 126.8 238.1)"/>
<ellipse cx="136.9" cy="85.9" rx="23.6" ry="8.9" fill="#36602a" opacity=".75" transform="rotate(-60 136.9 85.9)"/>
<ellipse cx="166.1" cy="24.5" rx="11.5" ry="8.4" fill="#88bb5e" opacity=".75" transform="rotate(-60 166.1 24.5)"/>
<ellipse cx="118.1" cy="15.2" rx="17.1" ry="4.4" fill="#36602a" opacity=".75" transform="rotate(-60 118.1 15.2)"/>
<ellipse cx="110.9" cy="252.5" rx="16.6" ry="8.5" fill="#36602a" opacity=".75" transform="rotate(-60 110.9 252.5)"/>
<ellipse cx="109.4" cy="131.7" rx="14.5" ry="4.3" fill="#2c5220" opacity=".75" transform="rotate(-60 109.4 131.7)"/>
<ellipse cx="78.5" cy="227.0" rx="15.1" ry="6.8" fill="#36602a" opacity=".75" transform="rotate(-60 78.5 227.0)"/>
<ellipse cx="210.1" cy="142.1" rx="23.3" ry="6.8" fill="#2f5823" opacity=".75" transform="rotate(-60 210.1 142.1)"/>
<ellipse cx="26.2" cy="287.7" rx="22.3" ry="6.9" fill="#93c266" opacity=".75" transform="rotate(-60 26.2 287.7)"/>
<ellipse cx="86.7" cy="115.0" rx="20.1" ry="5.7" fill="#88bb5e" opacity=".75" transform="rotate(-60 86.7 115.0)"/>
<ellipse cx="73.1" cy="197.3" rx="24.6" ry="4.0" fill="#2f5823" opacity=".75" transform="rotate(-60 73.1 197.3)"/>
<ellipse cx="123.1" cy="289.7" rx="24.7" ry="4.7" fill="#7cb454" opacity=".75" transform="rotate(-60 123.1 289.7)"/>
<ellipse cx="-3.3" cy="219.8" rx="25.2" ry="6.8" fill="#3a6626" opacity=".75" transform="rotate(-60 -3.3 219.8)"/>
<ellipse cx="34.9" cy="166.2" rx="14.4" ry="5.5" fill="#2f5823" opacity=".75" transform="rotate(-60 34.9 166.2)"/>
<ellipse cx="71.8" cy="217.7" rx="24.2" ry="6.5" fill="#2c5220" opacity=".75" transform="rotate(-60 71.8 217.7)"/>
<ellipse cx="5.4" cy="230.2" rx="10.5" ry="4.0" fill="#2c5220" opacity=".75" transform="rotate(-60 5.4 230.2)"/>
<ellipse cx="71.2" cy="200.2" rx="10.1" ry="5.2" fill="#7cb454" opacity=".75" transform="rotate(-60 71.2 200.2)"/>
<ellipse cx="131.8" cy="246.0" rx="11.3" ry="6.8" fill="#2f5823" opacity=".75" transform="rotate(-60 131.8 246.0)"/>
<ellipse cx="148.7" cy="2.3" rx="17.7" ry="8.7" fill="#2f5823" opacity=".75" transform="rotate(-60 148.7 2.3)"/>
<ellipse cx="-7.6" cy="297.3" rx="10.2" ry="5.6" fill="#6fa64a" opacity=".75" transform="rotate(-60 -7.6 297.3)"/>
<ellipse cx="99.4" cy="61.4" rx="24.6" ry="4.6" fill="#2c5220" opacity=".75" transform="rotate(-60 99.4 61.4)"/>
<ellipse cx="93.2" cy="121.6" rx="25.9" ry="8.4" fill="#93c266" opacity=".75" transform="rotate(-60 93.2 121.6)"/>
<ellipse cx="180.9" cy="232.6" rx="23.7" ry="8.2" fill="#6fa64a" opacity=".75" transform="rotate(-60 180.9 232.6)"/>
<ellipse cx="58.2" cy="269.1" rx="21.6" ry="9.0" fill="#7cb454" opacity=".75" transform="rotate(-60 58.2 269.1)"/>
<ellipse cx="168.2" cy="201.6" rx="21.2" ry="6.7" fill="#3a6626" opacity=".75" transform="rotate(-60 168.2 201.6)"/>
<ellipse cx="138.3" cy="66.5" rx="19.9" ry="7.1" fill="#88bb5e" opacity=".75" transform="rotate(-60 138.3 66.5)"/>
<ellipse cx="94.6" cy="212.4" rx="19.5" ry="6.1" fill="#3a6626" opacity=".75" transform="rotate(-60 94.6 212.4)"/>
<ellipse cx="13.5" cy="265.2" rx="10.6" ry="4.8" fill="#88bb5e" opacity=".75" transform="rotate(-60 13.5 265.2)"/>
<ellipse cx="72.8" cy="257.8" rx="17.5" ry="4.6" fill="#2c5220" opacity=".75" transform="rotate(-60 72.8 257.8)"/>
</g>
<polygon points="120,-10 240,-10 190,50 95,80" fill="#a3ab98" opacity=".45" filter="url(#b6)"/>
<g filter="url(#b1)">
<ellipse cx="213.5" cy="28.7" rx="6.6" ry="2.3" fill="#335a24" opacity=".5" transform="rotate(-60 213.5 28.7)"/>
<ellipse cx="118.6" cy="241.3" rx="9.6" ry="1.3" fill="#a8d07a" opacity=".5" transform="rotate(-60 118.6 241.3)"/>
<ellipse cx="214.9" cy="209.9" rx="6.8" ry="1.9" fill="#2e5622" opacity=".5" transform="rotate(-60 214.9 209.9)"/>
<ellipse cx="134.8" cy="160.4" rx="10.8" ry="2.3" fill="#84b85a" opacity=".5" transform="rotate(-60 134.8 160.4)"/>
<ellipse cx="147.8" cy="-5.1" rx="6.4" ry="2.6" fill="#335a24" opacity=".5" transform="rotate(-60 147.8 -5.1)"/>
<ellipse cx="241.6" cy="111.0" rx="10.2" ry="2.0" fill="#335a24" opacity=".5" transform="rotate(-60 241.6 111.0)"/>
<ellipse cx="170.5" cy="198.7" rx="9.8" ry="2.2" fill="#6ea248" opacity=".5" transform="rotate(-60 170.5 198.7)"/>
<ellipse cx="184.8" cy="181.3" rx="11.3" ry="2.5" fill="#3a6428" opacity=".5" transform="rotate(-60 184.8 181.3)"/>
<ellipse cx="82.2" cy="305.4" rx="8.4" ry="1.9" fill="#84b85a" opacity=".5" transform="rotate(-60 82.2 305.4)"/>
<ellipse cx="152.3" cy="147.3" rx="11.8" ry="2.1" fill="#6ea248" opacity=".5" transform="rotate(-60 152.3 147.3)"/>
<ellipse cx="111.7" cy="224.1" rx="9.5" ry="2.6" fill="#a8d07a" opacity=".5" transform="rotate(-60 111.7 224.1)"/>
<ellipse cx="63.5" cy="166.6" rx="10.9" ry="1.4" fill="#2a4c1e" opacity=".5" transform="rotate(-60 63.5 166.6)"/>
<ellipse cx="212.4" cy="156.5" rx="5.8" ry="2.4" fill="#84b85a" opacity=".5" transform="rotate(-60 212.4 156.5)"/>
<ellipse cx="243.8" cy="125.5" rx="5.0" ry="1.2" fill="#2a4c1e" opacity=".5" transform="rotate(-60 243.8 125.5)"/>
<ellipse cx="106.2" cy="178.6" rx="9.5" ry="2.1" fill="#a8d07a" opacity=".5" transform="rotate(-60 106.2 178.6)"/>
<ellipse cx="216.1" cy="200.1" rx="9.6" ry="2.8" fill="#2e5622" opacity=".5" transform="rotate(-60 216.1 200.1)"/>
<ellipse cx="174.0" cy="85.4" rx="6.2" ry="1.9" fill="#2e5622" opacity=".5" transform="rotate(-60 174.0 85.4)"/>
<ellipse cx="202.8" cy="127.0" rx="11.3" ry="2.5" fill="#6ea248" opacity=".5" transform="rotate(-60 202.8 127.0)"/>
<ellipse cx="168.7" cy="172.6" rx="6.8" ry="1.9" fill="#2a4c1e" opacity=".5" transform="rotate(-60 168.7 172.6)"/>
<ellipse cx="182.4" cy="121.6" rx="7.1" ry="1.6" fill="#a8d07a" opacity=".5" transform="rotate(-60 182.4 121.6)"/>
<ellipse cx="129.4" cy="224.5" rx="9.7" ry="1.4" fill="#2a4c1e" opacity=".5" transform="rotate(-60 129.4 224.5)"/>
<ellipse cx="251.4" cy="126.9" rx="5.7" ry="2.1" fill="#9aca6e" opacity=".5" transform="rotate(-60 251.4 126.9)"/>
<ellipse cx="264.4" cy="112.1" rx="5.3" ry="2.1" fill="#6ea248" opacity=".5" transform="rotate(-60 264.4 112.1)"/>
<ellipse cx="130.7" cy="130.4" rx="9.6" ry="1.5" fill="#335a24" opacity=".5" transform="rotate(-60 130.7 130.4)"/>
<ellipse cx="13.5" cy="290.3" rx="6.6" ry="1.4" fill="#335a24" opacity=".5" transform="rotate(-60 13.5 290.3)"/>
<ellipse cx="148.0" cy="85.5" rx="5.6" ry="2.5" fill="#9aca6e" opacity=".5" transform="rotate(-60 148.0 85.5)"/>
<ellipse cx="183.2" cy="157.8" rx="9.3" ry="2.4" fill="#5f9440" opacity=".5" transform="rotate(-60 183.2 157.8)"/>
<ellipse cx="159.3" cy="199.8" rx="5.8" ry="1.3" fill="#a8d07a" opacity=".5" transform="rotate(-60 159.3 199.8)"/>
<ellipse cx="170.9" cy="57.2" rx="7.5" ry="2.5" fill="#2a4c1e" opacity=".5" transform="rotate(-60 170.9 57.2)"/>
<ellipse cx="120.4" cy="102.6" rx="5.9" ry="2.7" fill="#a8d07a" opacity=".5" transform="rotate(-60 120.4 102.6)"/>
<ellipse cx="225.5" cy="88.7" rx="10.0" ry="2.1" fill="#3a6428" opacity=".5" transform="rotate(-60 225.5 88.7)"/>
<ellipse cx="181.3" cy="96.6" rx="11.7" ry="1.9" fill="#3a6428" opacity=".5" transform="rotate(-60 181.3 96.6)"/>
<ellipse cx="130.0" cy="62.1" rx="7.5" ry="1.5" fill="#2a4c1e" opacity=".5" transform="rotate(-60 130.0 62.1)"/>
<ellipse cx="-5.3" cy="278.2" rx="5.3" ry="1.8" fill="#4a7a30" opacity=".5" transform="rotate(-60 -5.3 278.2)"/>
<ellipse cx="197.7" cy="178.1" rx="10.2" ry="1.9" fill="#84b85a" opacity=".5" transform="rotate(-60 197.7 178.1)"/>
<ellipse cx="127.8" cy="261.5" rx="11.4" ry="1.5" fill="#335a24" opacity=".5" transform="rotate(-60 127.8 261.5)"/>
<ellipse cx="98.9" cy="169.4" rx="9.3" ry="1.4" fill="#5f9440" opacity=".5" transform="rotate(-60 98.9 169.4)"/>
<ellipse cx="64.3" cy="307.5" rx="9.1" ry="2.0" fill="#4a7a30" opacity=".5" transform="rotate(-60 64.3 307.5)"/>
<ellipse cx="86.9" cy="182.3" rx="8.2" ry="1.7" fill="#5f9440" opacity=".5" transform="rotate(-60 86.9 182.3)"/>
<ellipse cx="30.6" cy="285.0" rx="10.9" ry="2.6" fill="#84b85a" opacity=".5" transform="rotate(-60 30.6 285.0)"/>
<ellipse cx="76.7" cy="167.9" rx="6.9" ry="2.7" fill="#2a4c1e" opacity=".5" transform="rotate(-60 76.7 167.9)"/>
<ellipse cx="26.8" cy="235.0" rx="6.5" ry="2.4" fill="#2e5622" opacity=".5" transform="rotate(-60 26.8 235.0)"/>
<ellipse cx="107.5" cy="129.3" rx="8.5" ry="2.4" fill="#9aca6e" opacity=".5" transform="rotate(-60 107.5 129.3)"/>
<ellipse cx="106.4" cy="118.0" rx="10.3" ry="2.7" fill="#335a24" opacity=".5" transform="rotate(-60 106.4 118.0)"/>
<ellipse cx="201.3" cy="115.6" rx="11.9" ry="1.7" fill="#3a6428" opacity=".5" transform="rotate(-60 201.3 115.6)"/>
<ellipse cx="208.1" cy="9.1" rx="7.6" ry="2.7" fill="#4a7a30" opacity=".5" transform="rotate(-60 208.1 9.1)"/>
<ellipse cx="117.4" cy="279.7" rx="6.1" ry="1.6" fill="#335a24" opacity=".5" transform="rotate(-60 117.4 279.7)"/>
<ellipse cx="254.6" cy="87.8" rx="9.6" ry="2.1" fill="#a8d07a" opacity=".5" transform="rotate(-60 254.6 87.8)"/>
<ellipse cx="66.2" cy="174.8" rx="11.6" ry="1.2" fill="#2e5622" opacity=".5" transform="rotate(-60 66.2 174.8)"/>
<ellipse cx="88.9" cy="237.1" rx="12.0" ry="2.3" fill="#6ea248" opacity=".5" transform="rotate(-60 88.9 237.1)"/>
<ellipse cx="38.4" cy="221.1" rx="11.1" ry="1.3" fill="#3a6428" opacity=".5" transform="rotate(-60 38.4 221.1)"/>
<ellipse cx="250.6" cy="72.9" rx="10.4" ry="2.0" fill="#a8d07a" opacity=".5" transform="rotate(-60 250.6 72.9)"/>
<ellipse cx="26.1" cy="244.3" rx="9.6" ry="2.3" fill="#6ea248" opacity=".5" transform="rotate(-60 26.1 244.3)"/>
<ellipse cx="177.4" cy="130.2" rx="9.2" ry="1.7" fill="#2e5622" opacity=".5" transform="rotate(-60 177.4 130.2)"/>
<ellipse cx="163.8" cy="261.7" rx="6.8" ry="2.6" fill="#2a4c1e" opacity=".5" transform="rotate(-60 163.8 261.7)"/>
<ellipse cx="190.2" cy="6.4" rx="9.8" ry="2.5" fill="#a8d07a" opacity=".5" transform="rotate(-60 190.2 6.4)"/>
<ellipse cx="154.7" cy="78.6" rx="8.1" ry="1.6" fill="#4a7a30" opacity=".5" transform="rotate(-60 154.7 78.6)"/>
<ellipse cx="84.7" cy="211.6" rx="10.6" ry="1.8" fill="#335a24" opacity=".5" transform="rotate(-60 84.7 211.6)"/>
<ellipse cx="87.7" cy="170.3" rx="7.0" ry="2.4" fill="#9aca6e" opacity=".5" transform="rotate(-60 87.7 170.3)"/>
<ellipse cx="163.0" cy="164.5" rx="6.6" ry="2.5" fill="#6ea248" opacity=".5" transform="rotate(-60 163.0 164.5)"/>
<ellipse cx="237.8" cy="76.4" rx="9.5" ry="1.8" fill="#2a4c1e" opacity=".5" transform="rotate(-60 237.8 76.4)"/>
<ellipse cx="33.4" cy="162.5" rx="7.3" ry="1.6" fill="#4a7a30" opacity=".5" transform="rotate(-60 33.4 162.5)"/>
<ellipse cx="82.2" cy="176.9" rx="9.0" ry="2.6" fill="#a8d07a" opacity=".5" transform="rotate(-60 82.2 176.9)"/>
<ellipse cx="179.7" cy="22.3" rx="9.5" ry="2.1" fill="#2a4c1e" opacity=".5" transform="rotate(-60 179.7 22.3)"/>
<ellipse cx="143.2" cy="241.2" rx="5.5" ry="1.2" fill="#3a6428" opacity=".5" transform="rotate(-60 143.2 241.2)"/>
<ellipse cx="193.0" cy="227.3" rx="10.3" ry="1.9" fill="#2a4c1e" opacity=".5" transform="rotate(-60 193.0 227.3)"/>
<ellipse cx="67.2" cy="254.3" rx="7.3" ry="2.0" fill="#5f9440" opacity=".5" transform="rotate(-60 67.2 254.3)"/>
<ellipse cx="195.0" cy="10.4" rx="5.7" ry="2.2" fill="#2a4c1e" opacity=".5" transform="rotate(-60 195.0 10.4)"/>
<ellipse cx="85.0" cy="203.4" rx="10.3" ry="2.1" fill="#4a7a30" opacity=".5" transform="rotate(-60 85.0 203.4)"/>
<ellipse cx="214.9" cy="155.7" rx="6.4" ry="1.7" fill="#a8d07a" opacity=".5" transform="rotate(-60 214.9 155.7)"/>
<ellipse cx="54.1" cy="169.3" rx="8.1" ry="1.4" fill="#4a7a30" opacity=".5" transform="rotate(-60 54.1 169.3)"/>
<ellipse cx="113.1" cy="190.6" rx="5.4" ry="2.7" fill="#6ea248" opacity=".5" transform="rotate(-60 113.1 190.6)"/>
<ellipse cx="102.9" cy="45.0" rx="8.6" ry="1.9" fill="#84b85a" opacity=".5" transform="rotate(-60 102.9 45.0)"/>
<ellipse cx="44.6" cy="267.1" rx="9.2" ry="2.4" fill="#5f9440" opacity=".5" transform="rotate(-60 44.6 267.1)"/>
<ellipse cx="142.5" cy="77.4" rx="11.2" ry="2.2" fill="#5f9440" opacity=".5" transform="rotate(-60 142.5 77.4)"/>
<ellipse cx="126.6" cy="279.3" rx="5.3" ry="2.8" fill="#4a7a30" opacity=".5" transform="rotate(-60 126.6 279.3)"/>
<ellipse cx="111.7" cy="40.2" rx="7.6" ry="2.4" fill="#6ea248" opacity=".5" transform="rotate(-60 111.7 40.2)"/>
<ellipse cx="154.9" cy="115.1" rx="10.8" ry="2.5" fill="#5f9440" opacity=".5" transform="rotate(-60 154.9 115.1)"/>
<ellipse cx="251.4" cy="82.5" rx="11.3" ry="2.0" fill="#5f9440" opacity=".5" transform="rotate(-60 251.4 82.5)"/>
<ellipse cx="23.0" cy="268.7" rx="10.0" ry="2.3" fill="#a8d07a" opacity=".5" transform="rotate(-60 23.0 268.7)"/>
<ellipse cx="136.7" cy="280.6" rx="10.5" ry="1.4" fill="#5f9440" opacity=".5" transform="rotate(-60 136.7 280.6)"/>
<ellipse cx="136.9" cy="232.9" rx="9.9" ry="2.0" fill="#2e5622" opacity=".5" transform="rotate(-60 136.9 232.9)"/>
<ellipse cx="164.3" cy="29.5" rx="8.7" ry="2.4" fill="#6ea248" opacity=".5" transform="rotate(-60 164.3 29.5)"/>
<ellipse cx="255.2" cy="96.2" rx="9.1" ry="2.5" fill="#335a24" opacity=".5" transform="rotate(-60 255.2 96.2)"/>
<ellipse cx="141.5" cy="281.8" rx="12.0" ry="2.3" fill="#4a7a30" opacity=".5" transform="rotate(-60 141.5 281.8)"/>
<ellipse cx="178.3" cy="122.1" rx="11.4" ry="2.2" fill="#84b85a" opacity=".5" transform="rotate(-60 178.3 122.1)"/>
<ellipse cx="170.6" cy="29.6" rx="9.5" ry="2.3" fill="#84b85a" opacity=".5" transform="rotate(-60 170.6 29.6)"/>
<ellipse cx="199.2" cy="10.3" rx="7.5" ry="2.5" fill="#9aca6e" opacity=".5" transform="rotate(-60 199.2 10.3)"/>
<ellipse cx="125.5" cy="4.9" rx="7.6" ry="1.8" fill="#84b85a" opacity=".5" transform="rotate(-60 125.5 4.9)"/>
<ellipse cx="135.8" cy="98.1" rx="7.6" ry="2.6" fill="#84b85a" opacity=".5" transform="rotate(-60 135.8 98.1)"/>
<ellipse cx="32.1" cy="299.0" rx="6.2" ry="2.4" fill="#2e5622" opacity=".5" transform="rotate(-60 32.1 299.0)"/>
<ellipse cx="223.8" cy="29.1" rx="6.8" ry="2.0" fill="#5f9440" opacity=".5" transform="rotate(-60 223.8 29.1)"/>
<ellipse cx="9.1" cy="285.4" rx="10.2" ry="1.2" fill="#9aca6e" opacity=".5" transform="rotate(-60 9.1 285.4)"/>
<ellipse cx="105.3" cy="57.6" rx="10.3" ry="1.2" fill="#2a4c1e" opacity=".5" transform="rotate(-60 105.3 57.6)"/>
<ellipse cx="32.1" cy="210.2" rx="6.1" ry="2.2" fill="#9aca6e" opacity=".5" transform="rotate(-60 32.1 210.2)"/>
<ellipse cx="120.6" cy="42.1" rx="9.5" ry="1.7" fill="#2a4c1e" opacity=".5" transform="rotate(-60 120.6 42.1)"/>
<ellipse cx="172.5" cy="227.1" rx="7.3" ry="2.7" fill="#2a4c1e" opacity=".5" transform="rotate(-60 172.5 227.1)"/>
<ellipse cx="192.8" cy="117.5" rx="10.9" ry="2.2" fill="#2a4c1e" opacity=".5" transform="rotate(-60 192.8 117.5)"/>
<ellipse cx="117.6" cy="274.1" rx="11.3" ry="2.4" fill="#84b85a" opacity=".5" transform="rotate(-60 117.6 274.1)"/>
<ellipse cx="179.3" cy="122.7" rx="5.8" ry="2.7" fill="#335a24" opacity=".5" transform="rotate(-60 179.3 122.7)"/>
<ellipse cx="97.0" cy="119.5" rx="5.3" ry="1.6" fill="#335a24" opacity=".5" transform="rotate(-60 97.0 119.5)"/>
<ellipse cx="138.7" cy="12.6" rx="5.9" ry="2.7" fill="#2a4c1e" opacity=".5" transform="rotate(-60 138.7 12.6)"/>
<ellipse cx="124.6" cy="132.6" rx="9.4" ry="1.7" fill="#3a6428" opacity=".5" transform="rotate(-60 124.6 132.6)"/>
<ellipse cx="53.8" cy="234.2" rx="11.5" ry="2.2" fill="#6ea248" opacity=".5" transform="rotate(-60 53.8 234.2)"/>
<ellipse cx="183.4" cy="161.2" rx="9.8" ry="1.8" fill="#4a7a30" opacity=".5" transform="rotate(-60 183.4 161.2)"/>
<ellipse cx="42.8" cy="219.1" rx="8.0" ry="1.8" fill="#5f9440" opacity=".5" transform="rotate(-60 42.8 219.1)"/>
<ellipse cx="98.0" cy="65.8" rx="9.3" ry="2.3" fill="#9aca6e" opacity=".5" transform="rotate(-60 98.0 65.8)"/>
<ellipse cx="172.1" cy="9.7" rx="5.3" ry="1.3" fill="#6ea248" opacity=".5" transform="rotate(-60 172.1 9.7)"/>
<ellipse cx="156.3" cy="73.7" rx="5.5" ry="1.4" fill="#335a24" opacity=".5" transform="rotate(-60 156.3 73.7)"/>
<ellipse cx="170.4" cy="3.5" rx="8.4" ry="2.7" fill="#335a24" opacity=".5" transform="rotate(-60 170.4 3.5)"/>
<ellipse cx="128.5" cy="157.4" rx="6.8" ry="2.4" fill="#84b85a" opacity=".5" transform="rotate(-60 128.5 157.4)"/>
<ellipse cx="61.1" cy="266.4" rx="8.0" ry="1.2" fill="#9aca6e" opacity=".5" transform="rotate(-60 61.1 266.4)"/>
<ellipse cx="192.4" cy="214.3" rx="10.0" ry="1.5" fill="#2e5622" opacity=".5" transform="rotate(-60 192.4 214.3)"/>
<ellipse cx="139.0" cy="27.4" rx="9.1" ry="1.5" fill="#2e5622" opacity=".5" transform="rotate(-60 139.0 27.4)"/>
<ellipse cx="61.6" cy="205.7" rx="8.4" ry="2.2" fill="#335a24" opacity=".5" transform="rotate(-60 61.6 205.7)"/>
<ellipse cx="213.1" cy="40.6" rx="6.2" ry="1.4" fill="#9aca6e" opacity=".5" transform="rotate(-60 213.1 40.6)"/>
<ellipse cx="129.1" cy="188.5" rx="11.9" ry="2.6" fill="#5f9440" opacity=".5" transform="rotate(-60 129.1 188.5)"/>
<ellipse cx="90.8" cy="208.4" rx="6.2" ry="1.4" fill="#4a7a30" opacity=".5" transform="rotate(-60 90.8 208.4)"/>
<ellipse cx="135.7" cy="124.1" rx="6.4" ry="1.8" fill="#4a7a30" opacity=".5" transform="rotate(-60 135.7 124.1)"/>
<ellipse cx="217.3" cy="61.7" rx="10.8" ry="1.2" fill="#2a4c1e" opacity=".5" transform="rotate(-60 217.3 61.7)"/>
<ellipse cx="15.3" cy="278.7" rx="11.5" ry="1.9" fill="#3a6428" opacity=".5" transform="rotate(-60 15.3 278.7)"/>
<ellipse cx="179.3" cy="72.5" rx="9.7" ry="2.4" fill="#84b85a" opacity=".5" transform="rotate(-60 179.3 72.5)"/>
<ellipse cx="28.5" cy="280.3" rx="5.1" ry="1.7" fill="#84b85a" opacity=".5" transform="rotate(-60 28.5 280.3)"/>
<ellipse cx="175.0" cy="230.8" rx="5.7" ry="1.4" fill="#4a7a30" opacity=".5" transform="rotate(-60 175.0 230.8)"/>
<ellipse cx="192.3" cy="137.8" rx="6.2" ry="2.5" fill="#a8d07a" opacity=".5" transform="rotate(-60 192.3 137.8)"/>
<ellipse cx="37.2" cy="190.2" rx="9.3" ry="2.8" fill="#2e5622" opacity=".5" transform="rotate(-60 37.2 190.2)"/>
<ellipse cx="158.6" cy="164.6" rx="5.1" ry="2.7" fill="#9aca6e" opacity=".5" transform="rotate(-60 158.6 164.6)"/>
<ellipse cx="234.7" cy="132.4" rx="5.9" ry="1.9" fill="#3a6428" opacity=".5" transform="rotate(-60 234.7 132.4)"/>
<ellipse cx="159.6" cy="160.9" rx="6.2" ry="2.3" fill="#335a24" opacity=".5" transform="rotate(-60 159.6 160.9)"/>
<ellipse cx="-4.0" cy="219.0" rx="10.9" ry="2.5" fill="#2a4c1e" opacity=".5" transform="rotate(-60 -4.0 219.0)"/>
<ellipse cx="145.7" cy="184.6" rx="11.5" ry="1.5" fill="#9aca6e" opacity=".5" transform="rotate(-60 145.7 184.6)"/>
<ellipse cx="139.8" cy="164.7" rx="5.3" ry="2.1" fill="#4a7a30" opacity=".5" transform="rotate(-60 139.8 164.7)"/>
<ellipse cx="144.3" cy="65.7" rx="10.1" ry="1.4" fill="#9aca6e" opacity=".5" transform="rotate(-60 144.3 65.7)"/>
<ellipse cx="140.6" cy="134.0" rx="8.1" ry="2.0" fill="#5f9440" opacity=".5" transform="rotate(-60 140.6 134.0)"/>
<ellipse cx="87.4" cy="268.2" rx="11.8" ry="2.1" fill="#4a7a30" opacity=".5" transform="rotate(-60 87.4 268.2)"/>
<ellipse cx="222.4" cy="178.0" rx="5.0" ry="1.5" fill="#2a4c1e" opacity=".5" transform="rotate(-60 222.4 178.0)"/>
<ellipse cx="53.6" cy="313.0" rx="6.5" ry="1.5" fill="#9aca6e" opacity=".5" transform="rotate(-60 53.6 313.0)"/>
<ellipse cx="67.2" cy="208.1" rx="11.7" ry="1.4" fill="#9aca6e" opacity=".5" transform="rotate(-60 67.2 208.1)"/>
<ellipse cx="0.6" cy="286.1" rx="7.2" ry="1.8" fill="#2a4c1e" opacity=".5" transform="rotate(-60 0.6 286.1)"/>
<ellipse cx="106.3" cy="316.4" rx="8.2" ry="1.4" fill="#3a6428" opacity=".5" transform="rotate(-60 106.3 316.4)"/>
<ellipse cx="115.6" cy="78.2" rx="11.2" ry="2.8" fill="#84b85a" opacity=".5" transform="rotate(-60 115.6 78.2)"/>
<ellipse cx="105.5" cy="142.5" rx="9.8" ry="2.6" fill="#a8d07a" opacity=".5" transform="rotate(-60 105.5 142.5)"/>
<ellipse cx="76.2" cy="208.6" rx="10.3" ry="2.6" fill="#6ea248" opacity=".5" transform="rotate(-60 76.2 208.6)"/>
<ellipse cx="171.3" cy="141.3" rx="11.2" ry="2.6" fill="#2e5622" opacity=".5" transform="rotate(-60 171.3 141.3)"/>
<ellipse cx="219.8" cy="79.4" rx="8.1" ry="2.1" fill="#6ea248" opacity=".5" transform="rotate(-60 219.8 79.4)"/>
<ellipse cx="58.9" cy="246.8" rx="5.4" ry="1.5" fill="#84b85a" opacity=".5" transform="rotate(-60 58.9 246.8)"/>
<ellipse cx="19.9" cy="265.9" rx="11.2" ry="1.6" fill="#2a4c1e" opacity=".5" transform="rotate(-60 19.9 265.9)"/>
<ellipse cx="168.3" cy="110.7" rx="11.1" ry="1.6" fill="#84b85a" opacity=".5" transform="rotate(-60 168.3 110.7)"/>
<ellipse cx="120.5" cy="123.6" rx="10.8" ry="2.4" fill="#6ea248" opacity=".5" transform="rotate(-60 120.5 123.6)"/>
<ellipse cx="93.8" cy="137.6" rx="10.9" ry="2.1" fill="#6ea248" opacity=".5" transform="rotate(-60 93.8 137.6)"/>
<ellipse cx="158.0" cy="66.5" rx="5.1" ry="2.5" fill="#2e5622" opacity=".5" transform="rotate(-60 158.0 66.5)"/>
<ellipse cx="118.2" cy="22.6" rx="6.5" ry="1.5" fill="#3a6428" opacity=".5" transform="rotate(-60 118.2 22.6)"/>
<ellipse cx="153.6" cy="171.2" rx="10.9" ry="2.5" fill="#6ea248" opacity=".5" transform="rotate(-60 153.6 171.2)"/>
<ellipse cx="162.7" cy="3.8" rx="10.1" ry="2.6" fill="#2a4c1e" opacity=".5" transform="rotate(-60 162.7 3.8)"/>
<ellipse cx="152.8" cy="32.9" rx="11.9" ry="1.2" fill="#9aca6e" opacity=".5" transform="rotate(-60 152.8 32.9)"/>
<ellipse cx="165.0" cy="139.4" rx="9.9" ry="2.1" fill="#4a7a30" opacity=".5" transform="rotate(-60 165.0 139.4)"/>
<ellipse cx="221.1" cy="130.8" rx="9.9" ry="1.8" fill="#335a24" opacity=".5" transform="rotate(-60 221.1 130.8)"/>
<ellipse cx="168.6" cy="84.8" rx="8.4" ry="1.9" fill="#9aca6e" opacity=".5" transform="rotate(-60 168.6 84.8)"/>
<ellipse cx="152.1" cy="204.1" rx="9.7" ry="2.1" fill="#6ea248" opacity=".5" transform="rotate(-60 152.1 204.1)"/>
<ellipse cx="85.5" cy="106.3" rx="8.6" ry="1.7" fill="#2a4c1e" opacity=".5" transform="rotate(-60 85.5 106.3)"/>
<ellipse cx="123.0" cy="26.7" rx="9.2" ry="2.7" fill="#a8d07a" opacity=".5" transform="rotate(-60 123.0 26.7)"/>
<ellipse cx="98.1" cy="256.6" rx="8.6" ry="1.4" fill="#6ea248" opacity=".5" transform="rotate(-60 98.1 256.6)"/>
<ellipse cx="12.2" cy="256.6" rx="10.2" ry="2.7" fill="#6ea248" opacity=".5" transform="rotate(-60 12.2 256.6)"/>
<ellipse cx="114.9" cy="46.9" rx="10.2" ry="1.3" fill="#4a7a30" opacity=".5" transform="rotate(-60 114.9 46.9)"/>
<ellipse cx="122.3" cy="166.7" rx="8.0" ry="2.6" fill="#5f9440" opacity=".5" transform="rotate(-60 122.3 166.7)"/>
<ellipse cx="123.8" cy="244.0" rx="7.7" ry="1.7" fill="#84b85a" opacity=".5" transform="rotate(-60 123.8 244.0)"/>
<ellipse cx="170.6" cy="7.6" rx="11.7" ry="1.6" fill="#2e5622" opacity=".5" transform="rotate(-60 170.6 7.6)"/>
<ellipse cx="68.3" cy="165.0" rx="11.3" ry="1.8" fill="#9aca6e" opacity=".5" transform="rotate(-60 68.3 165.0)"/>
<ellipse cx="0.6" cy="317.3" rx="8.5" ry="2.4" fill="#5f9440" opacity=".5" transform="rotate(-60 0.6 317.3)"/>
<ellipse cx="133.8" cy="206.8" rx="5.1" ry="2.7" fill="#335a24" opacity=".5" transform="rotate(-60 133.8 206.8)"/>
<ellipse cx="138.4" cy="93.3" rx="9.2" ry="1.4" fill="#a8d07a" opacity=".5" transform="rotate(-60 138.4 93.3)"/>
<ellipse cx="139.3" cy="9.9" rx="5.6" ry="2.1" fill="#84b85a" opacity=".5" transform="rotate(-60 139.3 9.9)"/>
<ellipse cx="36.1" cy="251.4" rx="10.5" ry="1.6" fill="#4a7a30" opacity=".5" transform="rotate(-60 36.1 251.4)"/>
<ellipse cx="48.6" cy="286.9" rx="9.8" ry="2.4" fill="#2a4c1e" opacity=".5" transform="rotate(-60 48.6 286.9)"/>
<ellipse cx="74.0" cy="256.5" rx="10.5" ry="2.0" fill="#2a4c1e" opacity=".5" transform="rotate(-60 74.0 256.5)"/>
<ellipse cx="141.9" cy="22.2" rx="8.8" ry="2.5" fill="#2e5622" opacity=".5" transform="rotate(-60 141.9 22.2)"/>
<ellipse cx="63.0" cy="144.4" rx="11.8" ry="1.5" fill="#2e5622" opacity=".5" transform="rotate(-60 63.0 144.4)"/>
<ellipse cx="148.3" cy="111.5" rx="10.4" ry="2.0" fill="#335a24" opacity=".5" transform="rotate(-60 148.3 111.5)"/>
<ellipse cx="7.9" cy="282.0" rx="8.9" ry="2.7" fill="#5f9440" opacity=".5" transform="rotate(-60 7.9 282.0)"/>
<ellipse cx="161.9" cy="52.6" rx="7.5" ry="1.4" fill="#5f9440" opacity=".5" transform="rotate(-60 161.9 52.6)"/>
<ellipse cx="230.9" cy="175.1" rx="6.8" ry="2.8" fill="#5f9440" opacity=".5" transform="rotate(-60 230.9 175.1)"/>
<ellipse cx="129.5" cy="108.0" rx="12.0" ry="1.7" fill="#5f9440" opacity=".5" transform="rotate(-60 129.5 108.0)"/>
<ellipse cx="136.8" cy="18.7" rx="8.4" ry="2.7" fill="#2a4c1e" opacity=".5" transform="rotate(-60 136.8 18.7)"/>
<ellipse cx="187.2" cy="184.0" rx="7.7" ry="2.5" fill="#a8d07a" opacity=".5" transform="rotate(-60 187.2 184.0)"/>
<ellipse cx="152.5" cy="185.1" rx="10.2" ry="2.5" fill="#3a6428" opacity=".5" transform="rotate(-60 152.5 185.1)"/>
<ellipse cx="231.7" cy="126.0" rx="7.4" ry="2.6" fill="#5f9440" opacity=".5" transform="rotate(-60 231.7 126.0)"/>
<ellipse cx="185.2" cy="229.5" rx="8.8" ry="2.5" fill="#6ea248" opacity=".5" transform="rotate(-60 185.2 229.5)"/>
<ellipse cx="2.6" cy="214.3" rx="6.8" ry="1.9" fill="#2a4c1e" opacity=".5" transform="rotate(-60 2.6 214.3)"/>
<ellipse cx="219.5" cy="186.0" rx="8.3" ry="1.9" fill="#335a24" opacity=".5" transform="rotate(-60 219.5 186.0)"/>
<ellipse cx="154.8" cy="55.3" rx="7.2" ry="1.8" fill="#3a6428" opacity=".5" transform="rotate(-60 154.8 55.3)"/>
<ellipse cx="172.6" cy="15.3" rx="8.3" ry="2.4" fill="#a8d07a" opacity=".5" transform="rotate(-60 172.6 15.3)"/>
<ellipse cx="140.6" cy="162.8" rx="10.0" ry="2.7" fill="#9aca6e" opacity=".5" transform="rotate(-60 140.6 162.8)"/>
<ellipse cx="94.5" cy="228.8" rx="11.9" ry="1.5" fill="#84b85a" opacity=".5" transform="rotate(-60 94.5 228.8)"/>
<ellipse cx="133.7" cy="107.8" rx="10.0" ry="1.5" fill="#3a6428" opacity=".5" transform="rotate(-60 133.7 107.8)"/>
<ellipse cx="24.1" cy="265.4" rx="7.8" ry="1.3" fill="#5f9440" opacity=".5" transform="rotate(-60 24.1 265.4)"/>
<ellipse cx="98.5" cy="244.2" rx="7.8" ry="1.3" fill="#2e5622" opacity=".5" transform="rotate(-60 98.5 244.2)"/>
<ellipse cx="163.7" cy="25.8" rx="9.6" ry="2.2" fill="#a8d07a" opacity=".5" transform="rotate(-60 163.7 25.8)"/>
<ellipse cx="46.2" cy="173.7" rx="6.7" ry="2.1" fill="#84b85a" opacity=".5" transform="rotate(-60 46.2 173.7)"/>
<ellipse cx="103.1" cy="46.5" rx="10.7" ry="2.7" fill="#335a24" opacity=".5" transform="rotate(-60 103.1 46.5)"/>
<ellipse cx="82.4" cy="158.1" rx="8.4" ry="1.6" fill="#9aca6e" opacity=".5" transform="rotate(-60 82.4 158.1)"/>
<ellipse cx="91.1" cy="313.4" rx="5.9" ry="1.5" fill="#3a6428" opacity=".5" transform="rotate(-60 91.1 313.4)"/>
<ellipse cx="4.3" cy="197.9" rx="9.4" ry="2.7" fill="#3a6428" opacity=".5" transform="rotate(-60 4.3 197.9)"/>
<ellipse cx="187.2" cy="79.2" rx="6.9" ry="1.5" fill="#3a6428" opacity=".5" transform="rotate(-60 187.2 79.2)"/>
<ellipse cx="68.3" cy="171.9" rx="5.2" ry="2.1" fill="#2e5622" opacity=".5" transform="rotate(-60 68.3 171.9)"/>
<ellipse cx="91.9" cy="200.4" rx="6.0" ry="1.6" fill="#6ea248" opacity=".5" transform="rotate(-60 91.9 200.4)"/>
<ellipse cx="93.0" cy="113.9" rx="6.8" ry="2.3" fill="#5f9440" opacity=".5" transform="rotate(-60 93.0 113.9)"/>
<ellipse cx="187.1" cy="231.6" rx="6.9" ry="2.4" fill="#2a4c1e" opacity=".5" transform="rotate(-60 187.1 231.6)"/>
<ellipse cx="171.3" cy="144.5" rx="9.4" ry="2.2" fill="#a8d07a" opacity=".5" transform="rotate(-60 171.3 144.5)"/>
<ellipse cx="133.4" cy="136.0" rx="5.1" ry="2.3" fill="#84b85a" opacity=".5" transform="rotate(-60 133.4 136.0)"/>
<ellipse cx="227.2" cy="110.0" rx="7.0" ry="2.7" fill="#2a4c1e" opacity=".5" transform="rotate(-60 227.2 110.0)"/>
<ellipse cx="0.7" cy="250.8" rx="11.1" ry="1.5" fill="#5f9440" opacity=".5" transform="rotate(-60 0.7 250.8)"/>
<ellipse cx="117.2" cy="230.1" rx="5.5" ry="1.6" fill="#3a6428" opacity=".5" transform="rotate(-60 117.2 230.1)"/>
<ellipse cx="115.3" cy="248.8" rx="10.8" ry="1.8" fill="#5f9440" opacity=".5" transform="rotate(-60 115.3 248.8)"/>
<ellipse cx="138.5" cy="129.7" rx="6.7" ry="1.4" fill="#84b85a" opacity=".5" transform="rotate(-60 138.5 129.7)"/>
<ellipse cx="100.1" cy="126.7" rx="9.3" ry="2.7" fill="#a8d07a" opacity=".5" transform="rotate(-60 100.1 126.7)"/>
<ellipse cx="223.2" cy="42.7" rx="11.0" ry="1.9" fill="#2a4c1e" opacity=".5" transform="rotate(-60 223.2 42.7)"/>
<ellipse cx="233.2" cy="151.4" rx="9.4" ry="1.7" fill="#335a24" opacity=".5" transform="rotate(-60 233.2 151.4)"/>
<ellipse cx="80.8" cy="210.7" rx="11.9" ry="2.1" fill="#4a7a30" opacity=".5" transform="rotate(-60 80.8 210.7)"/>
<ellipse cx="129.8" cy="252.7" rx="7.1" ry="1.9" fill="#6ea248" opacity=".5" transform="rotate(-60 129.8 252.7)"/>
<ellipse cx="199.6" cy="164.6" rx="10.9" ry="1.2" fill="#4a7a30" opacity=".5" transform="rotate(-60 199.6 164.6)"/>
<ellipse cx="33.7" cy="308.5" rx="11.2" ry="2.4" fill="#6ea248" opacity=".5" transform="rotate(-60 33.7 308.5)"/>
<ellipse cx="111.7" cy="187.1" rx="7.7" ry="1.8" fill="#2e5622" opacity=".5" transform="rotate(-60 111.7 187.1)"/>
<ellipse cx="121.4" cy="152.1" rx="8.2" ry="2.8" fill="#2a4c1e" opacity=".5" transform="rotate(-60 121.4 152.1)"/>
<ellipse cx="165.6" cy="25.9" rx="7.5" ry="2.4" fill="#4a7a30" opacity=".5" transform="rotate(-60 165.6 25.9)"/>
<ellipse cx="128.8" cy="258.2" rx="6.9" ry="1.8" fill="#2e5622" opacity=".5" transform="rotate(-60 128.8 258.2)"/>
<ellipse cx="53.7" cy="143.3" rx="7.7" ry="2.7" fill="#335a24" opacity=".5" transform="rotate(-60 53.7 143.3)"/>
<ellipse cx="134.2" cy="167.2" rx="7.3" ry="1.3" fill="#4a7a30" opacity=".5" transform="rotate(-60 134.2 167.2)"/>
<ellipse cx="213.2" cy="210.9" rx="8.4" ry="2.0" fill="#3a6428" opacity=".5" transform="rotate(-60 213.2 210.9)"/>
<ellipse cx="92.9" cy="313.9" rx="5.4" ry="1.9" fill="#a8d07a" opacity=".5" transform="rotate(-60 92.9 313.9)"/>
<ellipse cx="56.8" cy="315.3" rx="5.3" ry="1.9" fill="#2e5622" opacity=".5" transform="rotate(-60 56.8 315.3)"/>
<ellipse cx="184.8" cy="3.4" rx="8.9" ry="2.1" fill="#a8d07a" opacity=".5" transform="rotate(-60 184.8 3.4)"/>
<ellipse cx="206.9" cy="57.2" rx="6.9" ry="2.3" fill="#84b85a" opacity=".5" transform="rotate(-60 206.9 57.2)"/>
<ellipse cx="79.3" cy="132.4" rx="11.3" ry="2.5" fill="#a8d07a" opacity=".5" transform="rotate(-60 79.3 132.4)"/>
<ellipse cx="136.4" cy="16.8" rx="11.6" ry="1.6" fill="#2e5622" opacity=".5" transform="rotate(-60 136.4 16.8)"/>
<ellipse cx="251.2" cy="122.0" rx="10.4" ry="1.4" fill="#2e5622" opacity=".5" transform="rotate(-60 251.2 122.0)"/>
<ellipse cx="33.1" cy="241.8" rx="7.8" ry="2.5" fill="#5f9440" opacity=".5" transform="rotate(-60 33.1 241.8)"/>
<ellipse cx="163.8" cy="83.9" rx="9.0" ry="1.6" fill="#2a4c1e" opacity=".5" transform="rotate(-60 163.8 83.9)"/>
<ellipse cx="218.9" cy="146.8" rx="6.6" ry="1.3" fill="#5f9440" opacity=".5" transform="rotate(-60 218.9 146.8)"/>
<ellipse cx="151.1" cy="158.1" rx="9.6" ry="1.6" fill="#84b85a" opacity=".5" transform="rotate(-60 151.1 158.1)"/>
<ellipse cx="210.6" cy="78.8" rx="5.4" ry="2.8" fill="#2e5622" opacity=".5" transform="rotate(-60 210.6 78.8)"/>
<ellipse cx="122.9" cy="179.8" rx="10.0" ry="2.1" fill="#9aca6e" opacity=".5" transform="rotate(-60 122.9 179.8)"/>
<ellipse cx="87.9" cy="247.4" rx="7.2" ry="2.0" fill="#6ea248" opacity=".5" transform="rotate(-60 87.9 247.4)"/>
<ellipse cx="143.8" cy="257.4" rx="6.4" ry="1.3" fill="#2a4c1e" opacity=".5" transform="rotate(-60 143.8 257.4)"/>
<ellipse cx="160.4" cy="92.4" rx="11.2" ry="2.7" fill="#335a24" opacity=".5" transform="rotate(-60 160.4 92.4)"/>
<ellipse cx="206.9" cy="40.4" rx="8.8" ry="1.6" fill="#3a6428" opacity=".5" transform="rotate(-60 206.9 40.4)"/>
<ellipse cx="244.2" cy="56.3" rx="10.3" ry="1.6" fill="#3a6428" opacity=".5" transform="rotate(-60 244.2 56.3)"/>
<ellipse cx="225.3" cy="87.6" rx="11.3" ry="2.3" fill="#9aca6e" opacity=".5" transform="rotate(-60 225.3 87.6)"/>
<ellipse cx="158.4" cy="163.9" rx="7.2" ry="2.6" fill="#6ea248" opacity=".5" transform="rotate(-60 158.4 163.9)"/>
<ellipse cx="144.4" cy="215.0" rx="7.4" ry="2.2" fill="#84b85a" opacity=".5" transform="rotate(-60 144.4 215.0)"/>
<ellipse cx="9.7" cy="275.2" rx="5.7" ry="2.6" fill="#335a24" opacity=".5" transform="rotate(-60 9.7 275.2)"/>
<ellipse cx="194.5" cy="10.2" rx="10.2" ry="2.5" fill="#84b85a" opacity=".5" transform="rotate(-60 194.5 10.2)"/>
<ellipse cx="196.7" cy="152.1" rx="10.4" ry="2.3" fill="#3a6428" opacity=".5" transform="rotate(-60 196.7 152.1)"/>
<ellipse cx="70.3" cy="114.0" rx="5.2" ry="2.4" fill="#5f9440" opacity=".5" transform="rotate(-60 70.3 114.0)"/>
<ellipse cx="146.8" cy="17.2" rx="10.7" ry="1.7" fill="#6ea248" opacity=".5" transform="rotate(-60 146.8 17.2)"/>
<ellipse cx="175.9" cy="101.8" rx="9.9" ry="2.8" fill="#335a24" opacity=".5" transform="rotate(-60 175.9 101.8)"/>
<ellipse cx="218.0" cy="197.9" rx="5.4" ry="1.4" fill="#a8d07a" opacity=".5" transform="rotate(-60 218.0 197.9)"/>
<ellipse cx="218.3" cy="85.1" rx="7.5" ry="1.7" fill="#5f9440" opacity=".5" transform="rotate(-60 218.3 85.1)"/>
<ellipse cx="206.2" cy="142.1" rx="5.3" ry="2.0" fill="#4a7a30" opacity=".5" transform="rotate(-60 206.2 142.1)"/>
<ellipse cx="117.3" cy="303.5" rx="7.5" ry="1.7" fill="#84b85a" opacity=".5" transform="rotate(-60 117.3 303.5)"/>
<ellipse cx="266.0" cy="93.2" rx="8.3" ry="2.8" fill="#5f9440" opacity=".5" transform="rotate(-60 266.0 93.2)"/>
<ellipse cx="198.3" cy="25.1" rx="9.7" ry="2.1" fill="#a8d07a" opacity=".5" transform="rotate(-60 198.3 25.1)"/>
<ellipse cx="159.5" cy="105.5" rx="6.3" ry="2.6" fill="#6ea248" opacity=".5" transform="rotate(-60 159.5 105.5)"/>
<ellipse cx="141.9" cy="162.1" rx="8.2" ry="1.3" fill="#2e5622" opacity=".5" transform="rotate(-60 141.9 162.1)"/>
<ellipse cx="163.6" cy="39.1" rx="8.4" ry="2.3" fill="#3a6428" opacity=".5" transform="rotate(-60 163.6 39.1)"/>
<ellipse cx="101.7" cy="109.0" rx="6.1" ry="2.6" fill="#335a24" opacity=".5" transform="rotate(-60 101.7 109.0)"/>
<ellipse cx="88.0" cy="121.0" rx="5.0" ry="1.2" fill="#2a4c1e" opacity=".5" transform="rotate(-60 88.0 121.0)"/>
<ellipse cx="66.1" cy="118.5" rx="6.5" ry="1.6" fill="#5f9440" opacity=".5" transform="rotate(-60 66.1 118.5)"/>
<ellipse cx="183.4" cy="85.1" rx="10.1" ry="1.6" fill="#2e5622" opacity=".5" transform="rotate(-60 183.4 85.1)"/>
<ellipse cx="66.4" cy="243.4" rx="7.6" ry="1.8" fill="#3a6428" opacity=".5" transform="rotate(-60 66.4 243.4)"/>
<ellipse cx="99.7" cy="242.8" rx="7.8" ry="1.4" fill="#3a6428" opacity=".5" transform="rotate(-60 99.7 242.8)"/>
<ellipse cx="202.3" cy="19.4" rx="6.1" ry="2.6" fill="#2a4c1e" opacity=".5" transform="rotate(-60 202.3 19.4)"/>
<ellipse cx="104.8" cy="272.9" rx="7.0" ry="1.9" fill="#3a6428" opacity=".5" transform="rotate(-60 104.8 272.9)"/>
<ellipse cx="85.8" cy="158.6" rx="8.9" ry="2.1" fill="#a8d07a" opacity=".5" transform="rotate(-60 85.8 158.6)"/>
<ellipse cx="189.1" cy="165.4" rx="6.1" ry="1.6" fill="#6ea248" opacity=".5" transform="rotate(-60 189.1 165.4)"/>
<ellipse cx="81.6" cy="106.5" rx="8.3" ry="1.6" fill="#2a4c1e" opacity=".5" transform="rotate(-60 81.6 106.5)"/>
<ellipse cx="162.1" cy="98.3" rx="10.2" ry="1.9" fill="#9aca6e" opacity=".5" transform="rotate(-60 162.1 98.3)"/>
<ellipse cx="81.7" cy="261.8" rx="6.1" ry="2.1" fill="#2e5622" opacity=".5" transform="rotate(-60 81.7 261.8)"/>
<ellipse cx="173.7" cy="86.1" rx="9.2" ry="1.7" fill="#2a4c1e" opacity=".5" transform="rotate(-60 173.7 86.1)"/>
<ellipse cx="87.1" cy="209.1" rx="9.5" ry="2.6" fill="#a8d07a" opacity=".5" transform="rotate(-60 87.1 209.1)"/>
<ellipse cx="183.0" cy="164.1" rx="5.9" ry="2.3" fill="#2a4c1e" opacity=".5" transform="rotate(-60 183.0 164.1)"/>
<ellipse cx="115.3" cy="244.1" rx="9.8" ry="1.5" fill="#a8d07a" opacity=".5" transform="rotate(-60 115.3 244.1)"/>
<ellipse cx="76.7" cy="231.7" rx="6.2" ry="1.7" fill="#2a4c1e" opacity=".5" transform="rotate(-60 76.7 231.7)"/>
<ellipse cx="206.5" cy="75.9" rx="6.0" ry="2.1" fill="#6ea248" opacity=".5" transform="rotate(-60 206.5 75.9)"/>
<ellipse cx="18.6" cy="195.9" rx="9.5" ry="1.9" fill="#2e5622" opacity=".5" transform="rotate(-60 18.6 195.9)"/>
<ellipse cx="121.5" cy="60.7" rx="11.6" ry="2.4" fill="#a8d07a" opacity=".5" transform="rotate(-60 121.5 60.7)"/>
<ellipse cx="220.5" cy="85.0" rx="5.2" ry="2.6" fill="#9aca6e" opacity=".5" transform="rotate(-60 220.5 85.0)"/>
<ellipse cx="137.9" cy="78.4" rx="6.8" ry="2.2" fill="#4a7a30" opacity=".5" transform="rotate(-60 137.9 78.4)"/>
<ellipse cx="110.8" cy="89.3" rx="7.6" ry="2.4" fill="#2e5622" opacity=".5" transform="rotate(-60 110.8 89.3)"/>
<ellipse cx="197.1" cy="-9.0" rx="5.4" ry="2.6" fill="#3a6428" opacity=".5" transform="rotate(-60 197.1 -9.0)"/>
<ellipse cx="188.6" cy="96.0" rx="5.9" ry="1.6" fill="#6ea248" opacity=".5" transform="rotate(-60 188.6 96.0)"/>
<ellipse cx="62.2" cy="313.4" rx="10.9" ry="1.4" fill="#4a7a30" opacity=".5" transform="rotate(-60 62.2 313.4)"/>
<ellipse cx="171.0" cy="125.2" rx="9.1" ry="1.2" fill="#9aca6e" opacity=".5" transform="rotate(-60 171.0 125.2)"/>
<ellipse cx="91.5" cy="265.5" rx="6.4" ry="1.4" fill="#6ea248" opacity=".5" transform="rotate(-60 91.5 265.5)"/>
<ellipse cx="108.2" cy="304.9" rx="10.3" ry="1.5" fill="#5f9440" opacity=".5" transform="rotate(-60 108.2 304.9)"/>
<ellipse cx="57.7" cy="184.9" rx="10.3" ry="1.4" fill="#9aca6e" opacity=".5" transform="rotate(-60 57.7 184.9)"/>
<ellipse cx="160.0" cy="132.3" rx="8.9" ry="2.5" fill="#5f9440" opacity=".5" transform="rotate(-60 160.0 132.3)"/>
<ellipse cx="21.2" cy="240.1" rx="8.7" ry="2.2" fill="#335a24" opacity=".5" transform="rotate(-60 21.2 240.1)"/>
<ellipse cx="132.3" cy="205.3" rx="6.4" ry="2.8" fill="#5f9440" opacity=".5" transform="rotate(-60 132.3 205.3)"/>
<ellipse cx="196.9" cy="176.2" rx="6.3" ry="1.6" fill="#2e5622" opacity=".5" transform="rotate(-60 196.9 176.2)"/>
<ellipse cx="112.1" cy="181.3" rx="8.1" ry="2.0" fill="#335a24" opacity=".5" transform="rotate(-60 112.1 181.3)"/>
<ellipse cx="120.2" cy="103.7" rx="7.8" ry="2.5" fill="#84b85a" opacity=".5" transform="rotate(-60 120.2 103.7)"/>
<ellipse cx="176.6" cy="57.6" rx="11.5" ry="1.5" fill="#a8d07a" opacity=".5" transform="rotate(-60 176.6 57.6)"/>
<ellipse cx="59.0" cy="158.6" rx="9.0" ry="2.4" fill="#3a6428" opacity=".5" transform="rotate(-60 59.0 158.6)"/>
<ellipse cx="115.8" cy="300.1" rx="6.1" ry="1.7" fill="#a8d07a" opacity=".5" transform="rotate(-60 115.8 300.1)"/>
<ellipse cx="124.3" cy="38.3" rx="8.9" ry="1.2" fill="#6ea248" opacity=".5" transform="rotate(-60 124.3 38.3)"/>
<ellipse cx="120.5" cy="110.0" rx="6.9" ry="1.4" fill="#a8d07a" opacity=".5" transform="rotate(-60 120.5 110.0)"/>
<ellipse cx="130.1" cy="238.3" rx="7.4" ry="2.8" fill="#335a24" opacity=".5" transform="rotate(-60 130.1 238.3)"/>
<ellipse cx="170.8" cy="-9.7" rx="9.1" ry="1.9" fill="#84b85a" opacity=".5" transform="rotate(-60 170.8 -9.7)"/>
<ellipse cx="220.6" cy="37.7" rx="5.5" ry="1.4" fill="#4a7a30" opacity=".5" transform="rotate(-60 220.6 37.7)"/>
<ellipse cx="187.5" cy="190.3" rx="7.3" ry="2.4" fill="#5f9440" opacity=".5" transform="rotate(-60 187.5 190.3)"/>
<ellipse cx="181.0" cy="243.1" rx="8.3" ry="1.3" fill="#4a7a30" opacity=".5" transform="rotate(-60 181.0 243.1)"/>
<ellipse cx="51.0" cy="238.0" rx="10.4" ry="1.8" fill="#a8d07a" opacity=".5" transform="rotate(-60 51.0 238.0)"/>
<ellipse cx="39.9" cy="160.2" rx="11.9" ry="2.0" fill="#5f9440" opacity=".5" transform="rotate(-60 39.9 160.2)"/>
<ellipse cx="243.5" cy="144.6" rx="9.0" ry="1.5" fill="#2e5622" opacity=".5" transform="rotate(-60 243.5 144.6)"/>
<ellipse cx="66.9" cy="204.1" rx="10.6" ry="2.4" fill="#6ea248" opacity=".5" transform="rotate(-60 66.9 204.1)"/>
<ellipse cx="171.8" cy="32.4" rx="12.0" ry="1.8" fill="#9aca6e" opacity=".5" transform="rotate(-60 171.8 32.4)"/>
<ellipse cx="78.4" cy="187.5" rx="7.2" ry="2.1" fill="#2a4c1e" opacity=".5" transform="rotate(-60 78.4 187.5)"/>
<ellipse cx="227.3" cy="166.5" rx="8.6" ry="1.4" fill="#3a6428" opacity=".5" transform="rotate(-60 227.3 166.5)"/>
<ellipse cx="172.1" cy="175.0" rx="11.8" ry="2.0" fill="#84b85a" opacity=".5" transform="rotate(-60 172.1 175.0)"/>
<ellipse cx="183.6" cy="-0.9" rx="10.8" ry="2.5" fill="#a8d07a" opacity=".5" transform="rotate(-60 183.6 -0.9)"/>
<ellipse cx="116.2" cy="234.3" rx="6.4" ry="1.5" fill="#a8d07a" opacity=".5" transform="rotate(-60 116.2 234.3)"/>
<ellipse cx="167.8" cy="8.3" rx="6.4" ry="2.4" fill="#3a6428" opacity=".5" transform="rotate(-60 167.8 8.3)"/>
<ellipse cx="142.3" cy="237.2" rx="8.5" ry="1.4" fill="#5f9440" opacity=".5" transform="rotate(-60 142.3 237.2)"/>
<ellipse cx="49.5" cy="280.3" rx="5.6" ry="2.4" fill="#84b85a" opacity=".5" transform="rotate(-60 49.5 280.3)"/>
<ellipse cx="143.2" cy="127.1" rx="7.5" ry="2.2" fill="#a8d07a" opacity=".5" transform="rotate(-60 143.2 127.1)"/>
<ellipse cx="146.6" cy="102.5" rx="11.3" ry="2.1" fill="#4a7a30" opacity=".5" transform="rotate(-60 146.6 102.5)"/>
<ellipse cx="21.3" cy="259.3" rx="9.7" ry="2.3" fill="#4a7a30" opacity=".5" transform="rotate(-60 21.3 259.3)"/>
<ellipse cx="72.1" cy="216.5" rx="11.6" ry="2.4" fill="#5f9440" opacity=".5" transform="rotate(-60 72.1 216.5)"/>
<ellipse cx="203.4" cy="169.7" rx="8.1" ry="2.1" fill="#2e5622" opacity=".5" transform="rotate(-60 203.4 169.7)"/>
<ellipse cx="87.4" cy="139.4" rx="6.3" ry="2.4" fill="#3a6428" opacity=".5" transform="rotate(-60 87.4 139.4)"/>
<ellipse cx="63.7" cy="173.3" rx="6.1" ry="2.6" fill="#9aca6e" opacity=".5" transform="rotate(-60 63.7 173.3)"/>
<ellipse cx="125.4" cy="96.0" rx="11.2" ry="1.9" fill="#4a7a30" opacity=".5" transform="rotate(-60 125.4 96.0)"/>
<ellipse cx="8.6" cy="220.1" rx="8.4" ry="2.7" fill="#2e5622" opacity=".5" transform="rotate(-60 8.6 220.1)"/>
<ellipse cx="180.3" cy="71.7" rx="7.3" ry="1.9" fill="#2a4c1e" opacity=".5" transform="rotate(-60 180.3 71.7)"/>
<ellipse cx="202.6" cy="131.7" rx="10.8" ry="2.7" fill="#3a6428" opacity=".5" transform="rotate(-60 202.6 131.7)"/>
<ellipse cx="9.1" cy="290.2" rx="8.6" ry="1.7" fill="#a8d07a" opacity=".5" transform="rotate(-60 9.1 290.2)"/>
<ellipse cx="64.6" cy="295.4" rx="10.6" ry="1.6" fill="#2a4c1e" opacity=".5" transform="rotate(-60 64.6 295.4)"/>
<ellipse cx="184.8" cy="19.2" rx="9.3" ry="1.4" fill="#3a6428" opacity=".5" transform="rotate(-60 184.8 19.2)"/>
<ellipse cx="33.2" cy="289.9" rx="10.6" ry="1.4" fill="#a8d07a" opacity=".5" transform="rotate(-60 33.2 289.9)"/>
<ellipse cx="137.8" cy="-9.7" rx="9.1" ry="2.2" fill="#9aca6e" opacity=".5" transform="rotate(-60 137.8 -9.7)"/>
<ellipse cx="46.7" cy="156.7" rx="6.0" ry="2.6" fill="#9aca6e" opacity=".5" transform="rotate(-60 46.7 156.7)"/>
<ellipse cx="126.6" cy="244.5" rx="9.4" ry="2.5" fill="#2a4c1e" opacity=".5" transform="rotate(-60 126.6 244.5)"/>
<ellipse cx="145.1" cy="57.7" rx="9.4" ry="1.8" fill="#a8d07a" opacity=".5" transform="rotate(-60 145.1 57.7)"/>
<ellipse cx="-7.1" cy="317.1" rx="9.2" ry="1.4" fill="#3a6428" opacity=".5" transform="rotate(-60 -7.1 317.1)"/>
<ellipse cx="192.8" cy="159.8" rx="6.4" ry="1.7" fill="#2e5622" opacity=".5" transform="rotate(-60 192.8 159.8)"/>
<ellipse cx="234.9" cy="101.7" rx="8.9" ry="1.6" fill="#335a24" opacity=".5" transform="rotate(-60 234.9 101.7)"/>
<ellipse cx="29.6" cy="205.9" rx="11.5" ry="1.3" fill="#6ea248" opacity=".5" transform="rotate(-60 29.6 205.9)"/>
<ellipse cx="169.9" cy="89.2" rx="6.0" ry="2.0" fill="#84b85a" opacity=".5" transform="rotate(-60 169.9 89.2)"/>
<ellipse cx="28.5" cy="273.8" rx="7.3" ry="2.1" fill="#2e5622" opacity=".5" transform="rotate(-60 28.5 273.8)"/>
<ellipse cx="197.1" cy="179.0" rx="6.3" ry="2.8" fill="#5f9440" opacity=".5" transform="rotate(-60 197.1 179.0)"/>
<ellipse cx="141.2" cy="224.1" rx="10.5" ry="2.2" fill="#9aca6e" opacity=".5" transform="rotate(-60 141.2 224.1)"/>
<ellipse cx="183.2" cy="192.2" rx="10.4" ry="2.2" fill="#3a6428" opacity=".5" transform="rotate(-60 183.2 192.2)"/>
<ellipse cx="221.5" cy="164.1" rx="6.8" ry="2.7" fill="#4a7a30" opacity=".5" transform="rotate(-60 221.5 164.1)"/>
<ellipse cx="19.5" cy="256.1" rx="7.4" ry="2.3" fill="#84b85a" opacity=".5" transform="rotate(-60 19.5 256.1)"/>
<ellipse cx="95.7" cy="313.4" rx="8.1" ry="1.7" fill="#6ea248" opacity=".5" transform="rotate(-60 95.7 313.4)"/>
<ellipse cx="92.4" cy="193.9" rx="11.5" ry="2.3" fill="#3a6428" opacity=".5" transform="rotate(-60 92.4 193.9)"/>
<ellipse cx="219.7" cy="70.7" rx="9.8" ry="2.5" fill="#84b85a" opacity=".5" transform="rotate(-60 219.7 70.7)"/>
<ellipse cx="46.7" cy="261.7" rx="9.9" ry="2.1" fill="#2a4c1e" opacity=".5" transform="rotate(-60 46.7 261.7)"/>
<ellipse cx="19.7" cy="239.6" rx="9.0" ry="2.8" fill="#a8d07a" opacity=".5" transform="rotate(-60 19.7 239.6)"/>
<ellipse cx="248.6" cy="104.7" rx="7.4" ry="2.2" fill="#3a6428" opacity=".5" transform="rotate(-60 248.6 104.7)"/>
<ellipse cx="145.6" cy="83.1" rx="10.3" ry="1.6" fill="#9aca6e" opacity=".5" transform="rotate(-60 145.6 83.1)"/>
<ellipse cx="97.8" cy="78.9" rx="5.1" ry="2.1" fill="#2e5622" opacity=".5" transform="rotate(-60 97.8 78.9)"/>
<ellipse cx="225.5" cy="94.4" rx="10.2" ry="2.7" fill="#2a4c1e" opacity=".5" transform="rotate(-60 225.5 94.4)"/>
<ellipse cx="153.5" cy="229.8" rx="11.4" ry="2.7" fill="#4a7a30" opacity=".5" transform="rotate(-60 153.5 229.8)"/>
<ellipse cx="229.1" cy="150.1" rx="5.9" ry="2.0" fill="#5f9440" opacity=".5" transform="rotate(-60 229.1 150.1)"/>
<ellipse cx="209.9" cy="162.8" rx="6.9" ry="2.0" fill="#2e5622" opacity=".5" transform="rotate(-60 209.9 162.8)"/>
<ellipse cx="150.5" cy="28.2" rx="6.2" ry="1.8" fill="#9aca6e" opacity=".5" transform="rotate(-60 150.5 28.2)"/>
<ellipse cx="101.2" cy="251.5" rx="8.4" ry="1.6" fill="#335a24" opacity=".5" transform="rotate(-60 101.2 251.5)"/>
<ellipse cx="119.0" cy="22.2" rx="9.4" ry="1.3" fill="#2a4c1e" opacity=".5" transform="rotate(-60 119.0 22.2)"/>
<ellipse cx="130.3" cy="0.3" rx="7.5" ry="2.0" fill="#6ea248" opacity=".5" transform="rotate(-60 130.3 0.3)"/>
<ellipse cx="29.3" cy="236.2" rx="10.7" ry="1.9" fill="#335a24" opacity=".5" transform="rotate(-60 29.3 236.2)"/>
<ellipse cx="201.2" cy="104.0" rx="7.1" ry="1.2" fill="#a8d07a" opacity=".5" transform="rotate(-60 201.2 104.0)"/>
<ellipse cx="196.3" cy="50.5" rx="10.6" ry="2.5" fill="#5f9440" opacity=".5" transform="rotate(-60 196.3 50.5)"/>
<ellipse cx="206.1" cy="-1.4" rx="6.2" ry="2.0" fill="#2e5622" opacity=".5" transform="rotate(-60 206.1 -1.4)"/>
<ellipse cx="129.8" cy="152.8" rx="6.7" ry="2.2" fill="#4a7a30" opacity=".5" transform="rotate(-60 129.8 152.8)"/>
<ellipse cx="221.7" cy="187.8" rx="6.3" ry="1.4" fill="#a8d07a" opacity=".5" transform="rotate(-60 221.7 187.8)"/>
<ellipse cx="37.1" cy="274.0" rx="8.5" ry="2.2" fill="#5f9440" opacity=".5" transform="rotate(-60 37.1 274.0)"/>
<ellipse cx="130.0" cy="254.1" rx="11.6" ry="1.8" fill="#a8d07a" opacity=".5" transform="rotate(-60 130.0 254.1)"/>
<ellipse cx="233.8" cy="108.5" rx="11.9" ry="1.9" fill="#4a7a30" opacity=".5" transform="rotate(-60 233.8 108.5)"/>
<ellipse cx="132.2" cy="210.2" rx="6.6" ry="2.3" fill="#3a6428" opacity=".5" transform="rotate(-60 132.2 210.2)"/>
<ellipse cx="152.5" cy="148.2" rx="7.8" ry="1.2" fill="#5f9440" opacity=".5" transform="rotate(-60 152.5 148.2)"/>
<ellipse cx="64.3" cy="156.7" rx="6.9" ry="2.7" fill="#4a7a30" opacity=".5" transform="rotate(-60 64.3 156.7)"/>
<ellipse cx="43.0" cy="203.6" rx="9.3" ry="1.6" fill="#335a24" opacity=".5" transform="rotate(-60 43.0 203.6)"/>
<ellipse cx="224.5" cy="198.2" rx="8.8" ry="2.0" fill="#4a7a30" opacity=".5" transform="rotate(-60 224.5 198.2)"/>
<ellipse cx="137.0" cy="158.8" rx="5.8" ry="2.0" fill="#4a7a30" opacity=".5" transform="rotate(-60 137.0 158.8)"/>
<ellipse cx="162.2" cy="185.1" rx="9.2" ry="2.5" fill="#2e5622" opacity=".5" transform="rotate(-60 162.2 185.1)"/>
<ellipse cx="154.1" cy="141.7" rx="10.3" ry="1.3" fill="#2e5622" opacity=".5" transform="rotate(-60 154.1 141.7)"/>
<ellipse cx="130.9" cy="92.3" rx="10.3" ry="1.6" fill="#6ea248" opacity=".5" transform="rotate(-60 130.9 92.3)"/>
<ellipse cx="194.7" cy="94.6" rx="10.0" ry="2.2" fill="#3a6428" opacity=".5" transform="rotate(-60 194.7 94.6)"/>
<ellipse cx="116.1" cy="62.2" rx="11.3" ry="1.6" fill="#2a4c1e" opacity=".5" transform="rotate(-60 116.1 62.2)"/>
<ellipse cx="95.9" cy="75.9" rx="10.6" ry="2.5" fill="#6ea248" opacity=".5" transform="rotate(-60 95.9 75.9)"/>
<ellipse cx="220.3" cy="106.9" rx="5.1" ry="2.0" fill="#5f9440" opacity=".5" transform="rotate(-60 220.3 106.9)"/>
<ellipse cx="129.2" cy="73.2" rx="6.1" ry="1.9" fill="#9aca6e" opacity=".5" transform="rotate(-60 129.2 73.2)"/>
<ellipse cx="106.5" cy="315.6" rx="11.5" ry="2.1" fill="#6ea248" opacity=".5" transform="rotate(-60 106.5 315.6)"/>
<ellipse cx="194.2" cy="177.9" rx="11.2" ry="2.5" fill="#a8d07a" opacity=".5" transform="rotate(-60 194.2 177.9)"/>
<ellipse cx="194.4" cy="80.7" rx="11.2" ry="1.6" fill="#5f9440" opacity=".5" transform="rotate(-60 194.4 80.7)"/>
<ellipse cx="7.9" cy="270.1" rx="10.5" ry="1.7" fill="#6ea248" opacity=".5" transform="rotate(-60 7.9 270.1)"/>
<ellipse cx="42.1" cy="293.9" rx="6.5" ry="2.2" fill="#2a4c1e" opacity=".5" transform="rotate(-60 42.1 293.9)"/>
<ellipse cx="154.0" cy="130.5" rx="7.8" ry="1.4" fill="#2e5622" opacity=".5" transform="rotate(-60 154.0 130.5)"/>
<ellipse cx="177.3" cy="240.5" rx="8.4" ry="1.6" fill="#9aca6e" opacity=".5" transform="rotate(-60 177.3 240.5)"/>
<ellipse cx="78.0" cy="172.9" rx="11.2" ry="1.6" fill="#2e5622" opacity=".5" transform="rotate(-60 78.0 172.9)"/>
<ellipse cx="14.2" cy="257.8" rx="6.4" ry="2.4" fill="#335a24" opacity=".5" transform="rotate(-60 14.2 257.8)"/>
<ellipse cx="174.1" cy="127.7" rx="8.3" ry="2.5" fill="#2e5622" opacity=".5" transform="rotate(-60 174.1 127.7)"/>
<ellipse cx="187.9" cy="121.1" rx="5.8" ry="2.1" fill="#335a24" opacity=".5" transform="rotate(-60 187.9 121.1)"/>
<ellipse cx="94.6" cy="268.1" rx="5.4" ry="2.3" fill="#5f9440" opacity=".5" transform="rotate(-60 94.6 268.1)"/>
<ellipse cx="179.2" cy="51.9" rx="5.9" ry="1.5" fill="#2a4c1e" opacity=".5" transform="rotate(-60 179.2 51.9)"/>
<ellipse cx="37.6" cy="172.0" rx="5.5" ry="2.7" fill="#2e5622" opacity=".5" transform="rotate(-60 37.6 172.0)"/>
<ellipse cx="165.0" cy="68.9" rx="10.3" ry="1.3" fill="#6ea248" opacity=".5" transform="rotate(-60 165.0 68.9)"/>
<ellipse cx="35.7" cy="219.8" rx="8.6" ry="2.5" fill="#5f9440" opacity=".5" transform="rotate(-60 35.7 219.8)"/>
<ellipse cx="115.0" cy="199.0" rx="7.9" ry="1.9" fill="#84b85a" opacity=".5" transform="rotate(-60 115.0 199.0)"/>
<ellipse cx="26.4" cy="280.4" rx="11.2" ry="1.6" fill="#335a24" opacity=".5" transform="rotate(-60 26.4 280.4)"/>
<ellipse cx="122.6" cy="54.2" rx="9.9" ry="1.5" fill="#335a24" opacity=".5" transform="rotate(-60 122.6 54.2)"/>
<ellipse cx="-1.6" cy="294.0" rx="7.9" ry="1.9" fill="#2a4c1e" opacity=".5" transform="rotate(-60 -1.6 294.0)"/>
<ellipse cx="216.4" cy="58.8" rx="7.2" ry="2.3" fill="#6ea248" opacity=".5" transform="rotate(-60 216.4 58.8)"/>
<ellipse cx="97.8" cy="59.7" rx="8.6" ry="1.6" fill="#84b85a" opacity=".5" transform="rotate(-60 97.8 59.7)"/>
<ellipse cx="65.3" cy="117.6" rx="7.8" ry="1.7" fill="#a8d07a" opacity=".5" transform="rotate(-60 65.3 117.6)"/>
<ellipse cx="247.9" cy="66.5" rx="7.8" ry="2.4" fill="#5f9440" opacity=".5" transform="rotate(-60 247.9 66.5)"/>
<ellipse cx="176.5" cy="9.1" rx="9.1" ry="1.5" fill="#4a7a30" opacity=".5" transform="rotate(-60 176.5 9.1)"/>
<ellipse cx="126.6" cy="-5.9" rx="9.3" ry="2.1" fill="#9aca6e" opacity=".5" transform="rotate(-60 126.6 -5.9)"/>
<ellipse cx="173.3" cy="141.9" rx="9.4" ry="2.7" fill="#6ea248" opacity=".5" transform="rotate(-60 173.3 141.9)"/>
<ellipse cx="97.7" cy="162.7" rx="9.9" ry="1.7" fill="#5f9440" opacity=".5" transform="rotate(-60 97.7 162.7)"/>
<ellipse cx="162.9" cy="40.4" rx="10.6" ry="1.7" fill="#2e5622" opacity=".5" transform="rotate(-60 162.9 40.4)"/>
<ellipse cx="197.1" cy="189.1" rx="9.4" ry="2.4" fill="#4a7a30" opacity=".5" transform="rotate(-60 197.1 189.1)"/>
<ellipse cx="-2.1" cy="258.6" rx="10.3" ry="1.6" fill="#3a6428" opacity=".5" transform="rotate(-60 -2.1 258.6)"/>
<ellipse cx="148.7" cy="257.1" rx="6.0" ry="1.4" fill="#335a24" opacity=".5" transform="rotate(-60 148.7 257.1)"/>
<ellipse cx="151.6" cy="137.9" rx="8.2" ry="2.4" fill="#4a7a30" opacity=".5" transform="rotate(-60 151.6 137.9)"/>
<ellipse cx="15.3" cy="232.9" rx="7.1" ry="1.4" fill="#84b85a" opacity=".5" transform="rotate(-60 15.3 232.9)"/>
<ellipse cx="113.4" cy="21.6" rx="6.7" ry="2.0" fill="#2a4c1e" opacity=".5" transform="rotate(-60 113.4 21.6)"/>
<ellipse cx="43.9" cy="234.1" rx="9.1" ry="2.4" fill="#2e5622" opacity=".5" transform="rotate(-60 43.9 234.1)"/>
<ellipse cx="80.6" cy="161.9" rx="7.4" ry="1.9" fill="#335a24" opacity=".5" transform="rotate(-60 80.6 161.9)"/>
<ellipse cx="155.2" cy="75.6" rx="8.2" ry="1.4" fill="#84b85a" opacity=".5" transform="rotate(-60 155.2 75.6)"/>
<ellipse cx="96.1" cy="222.2" rx="11.1" ry="2.8" fill="#335a24" opacity=".5" transform="rotate(-60 96.1 222.2)"/>
<ellipse cx="33.6" cy="304.3" rx="5.8" ry="2.4" fill="#a8d07a" opacity=".5" transform="rotate(-60 33.6 304.3)"/>
<ellipse cx="178.2" cy="141.4" rx="6.3" ry="2.7" fill="#6ea248" opacity=".5" transform="rotate(-60 178.2 141.4)"/>
<ellipse cx="163.1" cy="157.8" rx="5.6" ry="1.2" fill="#335a24" opacity=".5" transform="rotate(-60 163.1 157.8)"/>
<ellipse cx="39.2" cy="276.4" rx="8.6" ry="2.6" fill="#5f9440" opacity=".5" transform="rotate(-60 39.2 276.4)"/>
<ellipse cx="176.5" cy="20.7" rx="10.0" ry="2.7" fill="#3a6428" opacity=".5" transform="rotate(-60 176.5 20.7)"/>
<ellipse cx="94.4" cy="259.5" rx="8.9" ry="2.2" fill="#5f9440" opacity=".5" transform="rotate(-60 94.4 259.5)"/>
<ellipse cx="5.5" cy="300.8" rx="11.9" ry="2.3" fill="#335a24" opacity=".5" transform="rotate(-60 5.5 300.8)"/>
<ellipse cx="201.6" cy="192.7" rx="9.0" ry="2.4" fill="#a8d07a" opacity=".5" transform="rotate(-60 201.6 192.7)"/>
<ellipse cx="87.8" cy="305.5" rx="7.5" ry="1.3" fill="#335a24" opacity=".5" transform="rotate(-60 87.8 305.5)"/>
<ellipse cx="49.6" cy="142.5" rx="9.6" ry="1.5" fill="#335a24" opacity=".5" transform="rotate(-60 49.6 142.5)"/>
<ellipse cx="84.9" cy="179.9" rx="5.8" ry="2.7" fill="#2e5622" opacity=".5" transform="rotate(-60 84.9 179.9)"/>
<ellipse cx="130.7" cy="33.0" rx="10.5" ry="1.5" fill="#5f9440" opacity=".5" transform="rotate(-60 130.7 33.0)"/>
<ellipse cx="217.5" cy="191.6" rx="6.3" ry="1.9" fill="#4a7a30" opacity=".5" transform="rotate(-60 217.5 191.6)"/>
<ellipse cx="212.9" cy="40.6" rx="5.2" ry="1.7" fill="#a8d07a" opacity=".5" transform="rotate(-60 212.9 40.6)"/>
<ellipse cx="253.9" cy="101.1" rx="11.9" ry="1.7" fill="#2e5622" opacity=".5" transform="rotate(-60 253.9 101.1)"/>
<ellipse cx="147.4" cy="89.9" rx="11.7" ry="2.4" fill="#3a6428" opacity=".5" transform="rotate(-60 147.4 89.9)"/>
<ellipse cx="135.8" cy="212.3" rx="8.7" ry="2.1" fill="#84b85a" opacity=".5" transform="rotate(-60 135.8 212.3)"/>
<ellipse cx="200.8" cy="200.5" rx="10.0" ry="1.3" fill="#335a24" opacity=".5" transform="rotate(-60 200.8 200.5)"/>
<ellipse cx="63.8" cy="279.4" rx="6.9" ry="1.8" fill="#84b85a" opacity=".5" transform="rotate(-60 63.8 279.4)"/>
<ellipse cx="70.9" cy="244.4" rx="7.9" ry="2.5" fill="#5f9440" opacity=".5" transform="rotate(-60 70.9 244.4)"/>
<ellipse cx="120.2" cy="64.2" rx="8.6" ry="1.5" fill="#2e5622" opacity=".5" transform="rotate(-60 120.2 64.2)"/>
<ellipse cx="-5.9" cy="268.5" rx="11.7" ry="2.1" fill="#2a4c1e" opacity=".5" transform="rotate(-60 -5.9 268.5)"/>
<ellipse cx="36.8" cy="203.7" rx="11.1" ry="2.8" fill="#2e5622" opacity=".5" transform="rotate(-60 36.8 203.7)"/>
<ellipse cx="150.0" cy="6.0" rx="7.2" ry="2.0" fill="#335a24" opacity=".5" transform="rotate(-60 150.0 6.0)"/>
<ellipse cx="132.5" cy="213.7" rx="7.7" ry="1.7" fill="#2e5622" opacity=".5" transform="rotate(-60 132.5 213.7)"/>
<ellipse cx="198.7" cy="78.3" rx="8.6" ry="2.2" fill="#3a6428" opacity=".5" transform="rotate(-60 198.7 78.3)"/>
<ellipse cx="-9.3" cy="265.3" rx="11.2" ry="1.6" fill="#5f9440" opacity=".5" transform="rotate(-60 -9.3 265.3)"/>
<ellipse cx="84.9" cy="268.6" rx="10.8" ry="2.5" fill="#4a7a30" opacity=".5" transform="rotate(-60 84.9 268.6)"/>
<ellipse cx="165.2" cy="-5.4" rx="6.4" ry="2.0" fill="#a8d07a" opacity=".5" transform="rotate(-60 165.2 -5.4)"/>
<ellipse cx="-6.8" cy="305.0" rx="6.3" ry="1.3" fill="#3a6428" opacity=".5" transform="rotate(-60 -6.8 305.0)"/>
<ellipse cx="26.2" cy="179.1" rx="11.6" ry="2.8" fill="#6ea248" opacity=".5" transform="rotate(-60 26.2 179.1)"/>
<ellipse cx="133.7" cy="223.0" rx="11.0" ry="2.5" fill="#335a24" opacity=".5" transform="rotate(-60 133.7 223.0)"/>
<ellipse cx="124.5" cy="169.0" rx="6.3" ry="1.6" fill="#84b85a" opacity=".5" transform="rotate(-60 124.5 169.0)"/>
<ellipse cx="112.4" cy="152.1" rx="5.0" ry="1.7" fill="#a8d07a" opacity=".5" transform="rotate(-60 112.4 152.1)"/>
<ellipse cx="142.1" cy="23.4" rx="5.1" ry="2.6" fill="#9aca6e" opacity=".5" transform="rotate(-60 142.1 23.4)"/>
<ellipse cx="90.1" cy="174.9" rx="8.8" ry="2.5" fill="#2e5622" opacity=".5" transform="rotate(-60 90.1 174.9)"/>
<ellipse cx="135.1" cy="27.5" rx="8.6" ry="1.7" fill="#2e5622" opacity=".5" transform="rotate(-60 135.1 27.5)"/>
<ellipse cx="165.7" cy="46.7" rx="5.5" ry="2.0" fill="#3a6428" opacity=".5" transform="rotate(-60 165.7 46.7)"/>
<ellipse cx="51.0" cy="251.1" rx="11.5" ry="1.4" fill="#335a24" opacity=".5" transform="rotate(-60 51.0 251.1)"/>
<ellipse cx="25.2" cy="237.0" rx="11.8" ry="1.4" fill="#3a6428" opacity=".5" transform="rotate(-60 25.2 237.0)"/>
<ellipse cx="129.2" cy="241.4" rx="6.5" ry="2.0" fill="#4a7a30" opacity=".5" transform="rotate(-60 129.2 241.4)"/>
<ellipse cx="99.4" cy="265.9" rx="6.0" ry="1.8" fill="#6ea248" opacity=".5" transform="rotate(-60 99.4 265.9)"/>
<ellipse cx="166.7" cy="175.7" rx="5.3" ry="1.8" fill="#a8d07a" opacity=".5" transform="rotate(-60 166.7 175.7)"/>
<ellipse cx="238.6" cy="107.6" rx="6.0" ry="1.8" fill="#84b85a" opacity=".5" transform="rotate(-60 238.6 107.6)"/>
<ellipse cx="232.6" cy="64.9" rx="6.0" ry="2.3" fill="#84b85a" opacity=".5" transform="rotate(-60 232.6 64.9)"/>
<ellipse cx="85.4" cy="221.0" rx="5.4" ry="1.7" fill="#a8d07a" opacity=".5" transform="rotate(-60 85.4 221.0)"/>
<ellipse cx="115.4" cy="121.4" rx="7.5" ry="2.0" fill="#6ea248" opacity=".5" transform="rotate(-60 115.4 121.4)"/>
<ellipse cx="177.1" cy="66.6" rx="8.3" ry="2.8" fill="#9aca6e" opacity=".5" transform="rotate(-60 177.1 66.6)"/>
<ellipse cx="264.8" cy="111.9" rx="10.6" ry="2.7" fill="#2e5622" opacity=".5" transform="rotate(-60 264.8 111.9)"/>
<ellipse cx="202.1" cy="17.8" rx="9.7" ry="1.6" fill="#a8d07a" opacity=".5" transform="rotate(-60 202.1 17.8)"/>
<ellipse cx="27.4" cy="272.7" rx="11.4" ry="2.5" fill="#84b85a" opacity=".5" transform="rotate(-60 27.4 272.7)"/>
<ellipse cx="171.1" cy="70.6" rx="8.8" ry="2.8" fill="#2e5622" opacity=".5" transform="rotate(-60 171.1 70.6)"/>
<ellipse cx="15.5" cy="275.5" rx="5.8" ry="1.6" fill="#3a6428" opacity=".5" transform="rotate(-60 15.5 275.5)"/>
<ellipse cx="1.5" cy="280.0" rx="7.1" ry="2.4" fill="#9aca6e" opacity=".5" transform="rotate(-60 1.5 280.0)"/>
<ellipse cx="48.0" cy="157.3" rx="11.4" ry="1.8" fill="#2a4c1e" opacity=".5" transform="rotate(-60 48.0 157.3)"/>
<ellipse cx="139.8" cy="228.0" rx="11.2" ry="1.2" fill="#a8d07a" opacity=".5" transform="rotate(-60 139.8 228.0)"/>
<ellipse cx="213.0" cy="165.5" rx="11.7" ry="2.5" fill="#a8d07a" opacity=".5" transform="rotate(-60 213.0 165.5)"/>
<ellipse cx="86.4" cy="309.1" rx="11.4" ry="1.6" fill="#2e5622" opacity=".5" transform="rotate(-60 86.4 309.1)"/>
<ellipse cx="48.9" cy="229.1" rx="9.2" ry="2.4" fill="#a8d07a" opacity=".5" transform="rotate(-60 48.9 229.1)"/>
<ellipse cx="83.8" cy="203.2" rx="10.3" ry="2.2" fill="#3a6428" opacity=".5" transform="rotate(-60 83.8 203.2)"/>
<ellipse cx="130.8" cy="255.4" rx="5.0" ry="2.3" fill="#9aca6e" opacity=".5" transform="rotate(-60 130.8 255.4)"/>
<ellipse cx="211.0" cy="80.4" rx="6.5" ry="2.3" fill="#335a24" opacity=".5" transform="rotate(-60 211.0 80.4)"/>
<ellipse cx="252.7" cy="83.2" rx="8.1" ry="1.9" fill="#4a7a30" opacity=".5" transform="rotate(-60 252.7 83.2)"/>
<ellipse cx="195.1" cy="214.5" rx="10.9" ry="1.4" fill="#a8d07a" opacity=".5" transform="rotate(-60 195.1 214.5)"/>
<ellipse cx="120.4" cy="131.2" rx="10.1" ry="1.9" fill="#335a24" opacity=".5" transform="rotate(-60 120.4 131.2)"/>
<ellipse cx="156.2" cy="116.8" rx="6.3" ry="1.9" fill="#4a7a30" opacity=".5" transform="rotate(-60 156.2 116.8)"/>
<ellipse cx="18.9" cy="272.3" rx="7.2" ry="1.2" fill="#a8d07a" opacity=".5" transform="rotate(-60 18.9 272.3)"/>
<ellipse cx="219.7" cy="106.9" rx="8.7" ry="1.4" fill="#3a6428" opacity=".5" transform="rotate(-60 219.7 106.9)"/>
<ellipse cx="143.0" cy="147.6" rx="5.7" ry="2.0" fill="#84b85a" opacity=".5" transform="rotate(-60 143.0 147.6)"/>
<ellipse cx="47.1" cy="301.2" rx="9.9" ry="1.2" fill="#335a24" opacity=".5" transform="rotate(-60 47.1 301.2)"/>
<ellipse cx="57.3" cy="213.5" rx="6.1" ry="2.3" fill="#6ea248" opacity=".5" transform="rotate(-60 57.3 213.5)"/>
<ellipse cx="189.7" cy="139.5" rx="8.5" ry="2.8" fill="#335a24" opacity=".5" transform="rotate(-60 189.7 139.5)"/>
<ellipse cx="174.2" cy="157.4" rx="9.3" ry="2.4" fill="#2e5622" opacity=".5" transform="rotate(-60 174.2 157.4)"/>
<ellipse cx="83.6" cy="238.7" rx="11.4" ry="1.9" fill="#6ea248" opacity=".5" transform="rotate(-60 83.6 238.7)"/>
<ellipse cx="211.9" cy="80.9" rx="10.4" ry="2.2" fill="#6ea248" opacity=".5" transform="rotate(-60 211.9 80.9)"/>
<ellipse cx="107.5" cy="168.5" rx="11.5" ry="2.8" fill="#2a4c1e" opacity=".5" transform="rotate(-60 107.5 168.5)"/>
<ellipse cx="139.6" cy="128.5" rx="10.7" ry="1.4" fill="#3a6428" opacity=".5" transform="rotate(-60 139.6 128.5)"/>
<ellipse cx="178.9" cy="128.3" rx="10.9" ry="1.5" fill="#3a6428" opacity=".5" transform="rotate(-60 178.9 128.3)"/>
<ellipse cx="84.8" cy="241.0" rx="9.1" ry="2.4" fill="#6ea248" opacity=".5" transform="rotate(-60 84.8 241.0)"/>
<ellipse cx="82.5" cy="312.5" rx="6.4" ry="1.7" fill="#4a7a30" opacity=".5" transform="rotate(-60 82.5 312.5)"/>
<ellipse cx="206.8" cy="85.5" rx="7.8" ry="1.6" fill="#335a24" opacity=".5" transform="rotate(-60 206.8 85.5)"/>
<ellipse cx="202.3" cy="83.9" rx="8.9" ry="2.8" fill="#2e5622" opacity=".5" transform="rotate(-60 202.3 83.9)"/>
<ellipse cx="127.2" cy="52.1" rx="8.1" ry="1.3" fill="#2a4c1e" opacity=".5" transform="rotate(-60 127.2 52.1)"/>
<ellipse cx="66.6" cy="134.0" rx="10.4" ry="1.2" fill="#2a4c1e" opacity=".5" transform="rotate(-60 66.6 134.0)"/>
<ellipse cx="150.5" cy="149.2" rx="6.5" ry="2.2" fill="#4a7a30" opacity=".5" transform="rotate(-60 150.5 149.2)"/>
<ellipse cx="43.0" cy="214.2" rx="8.4" ry="2.2" fill="#3a6428" opacity=".5" transform="rotate(-60 43.0 214.2)"/>
<ellipse cx="166.6" cy="60.3" rx="8.2" ry="1.5" fill="#84b85a" opacity=".5" transform="rotate(-60 166.6 60.3)"/>
<ellipse cx="146.0" cy="185.8" rx="8.0" ry="2.6" fill="#9aca6e" opacity=".5" transform="rotate(-60 146.0 185.8)"/>
<ellipse cx="78.5" cy="234.8" rx="9.5" ry="2.8" fill="#84b85a" opacity=".5" transform="rotate(-60 78.5 234.8)"/>
<ellipse cx="25.6" cy="305.3" rx="8.5" ry="2.0" fill="#6ea248" opacity=".5" transform="rotate(-60 25.6 305.3)"/>
<ellipse cx="170.8" cy="193.3" rx="5.4" ry="1.4" fill="#4a7a30" opacity=".5" transform="rotate(-60 170.8 193.3)"/>
<ellipse cx="145.4" cy="177.5" rx="7.4" ry="1.7" fill="#335a24" opacity=".5" transform="rotate(-60 145.4 177.5)"/>
<ellipse cx="106.3" cy="307.6" rx="7.0" ry="2.4" fill="#2e5622" opacity=".5" transform="rotate(-60 106.3 307.6)"/>
<ellipse cx="108.8" cy="260.4" rx="5.6" ry="2.3" fill="#3a6428" opacity=".5" transform="rotate(-60 108.8 260.4)"/>
<ellipse cx="60.9" cy="257.3" rx="6.7" ry="1.8" fill="#5f9440" opacity=".5" transform="rotate(-60 60.9 257.3)"/>
<ellipse cx="126.0" cy="213.1" rx="8.3" ry="1.4" fill="#2e5622" opacity=".5" transform="rotate(-60 126.0 213.1)"/>
<ellipse cx="227.2" cy="38.3" rx="8.9" ry="2.1" fill="#2e5622" opacity=".5" transform="rotate(-60 227.2 38.3)"/>
<ellipse cx="105.6" cy="120.1" rx="9.9" ry="2.2" fill="#a8d07a" opacity=".5" transform="rotate(-60 105.6 120.1)"/>
<ellipse cx="174.8" cy="79.3" rx="10.4" ry="2.3" fill="#2a4c1e" opacity=".5" transform="rotate(-60 174.8 79.3)"/>
<ellipse cx="117.6" cy="35.8" rx="6.4" ry="2.8" fill="#3a6428" opacity=".5" transform="rotate(-60 117.6 35.8)"/>
<ellipse cx="8.6" cy="251.2" rx="8.7" ry="2.7" fill="#5f9440" opacity=".5" transform="rotate(-60 8.6 251.2)"/>
<ellipse cx="186.4" cy="194.9" rx="11.9" ry="2.2" fill="#84b85a" opacity=".5" transform="rotate(-60 186.4 194.9)"/>
<ellipse cx="154.3" cy="56.6" rx="8.0" ry="1.4" fill="#6ea248" opacity=".5" transform="rotate(-60 154.3 56.6)"/>
<ellipse cx="194.2" cy="162.4" rx="8.2" ry="2.2" fill="#a8d07a" opacity=".5" transform="rotate(-60 194.2 162.4)"/>
<ellipse cx="171.1" cy="41.8" rx="5.8" ry="2.2" fill="#a8d07a" opacity=".5" transform="rotate(-60 171.1 41.8)"/>
<ellipse cx="104.1" cy="100.4" rx="11.9" ry="2.5" fill="#335a24" opacity=".5" transform="rotate(-60 104.1 100.4)"/>
<ellipse cx="248.1" cy="95.4" rx="9.0" ry="1.3" fill="#4a7a30" opacity=".5" transform="rotate(-60 248.1 95.4)"/>
<ellipse cx="129.7" cy="85.0" rx="8.3" ry="1.8" fill="#6ea248" opacity=".5" transform="rotate(-60 129.7 85.0)"/>
<ellipse cx="59.9" cy="164.1" rx="6.6" ry="1.2" fill="#2a4c1e" opacity=".5" transform="rotate(-60 59.9 164.1)"/>
<ellipse cx="143.0" cy="200.0" rx="10.7" ry="1.4" fill="#2a4c1e" opacity=".5" transform="rotate(-60 143.0 200.0)"/>
<ellipse cx="171.3" cy="161.7" rx="7.2" ry="2.6" fill="#a8d07a" opacity=".5" transform="rotate(-60 171.3 161.7)"/>
<ellipse cx="89.1" cy="153.9" rx="8.6" ry="2.0" fill="#84b85a" opacity=".5" transform="rotate(-60 89.1 153.9)"/>
<ellipse cx="243.5" cy="149.5" rx="6.5" ry="1.3" fill="#84b85a" opacity=".5" transform="rotate(-60 243.5 149.5)"/>
<ellipse cx="38.4" cy="267.5" rx="8.2" ry="2.4" fill="#9aca6e" opacity=".5" transform="rotate(-60 38.4 267.5)"/>
<ellipse cx="15.2" cy="295.1" rx="10.3" ry="2.7" fill="#a8d07a" opacity=".5" transform="rotate(-60 15.2 295.1)"/>
<ellipse cx="255.3" cy="88.0" rx="11.6" ry="2.2" fill="#5f9440" opacity=".5" transform="rotate(-60 255.3 88.0)"/>
<ellipse cx="92.0" cy="114.1" rx="9.6" ry="1.3" fill="#9aca6e" opacity=".5" transform="rotate(-60 92.0 114.1)"/>
<ellipse cx="185.1" cy="172.3" rx="8.5" ry="2.5" fill="#84b85a" opacity=".5" transform="rotate(-60 185.1 172.3)"/>
<ellipse cx="190.4" cy="127.9" rx="10.2" ry="2.7" fill="#335a24" opacity=".5" transform="rotate(-60 190.4 127.9)"/>
<ellipse cx="113.4" cy="28.5" rx="7.0" ry="1.7" fill="#6ea248" opacity=".5" transform="rotate(-60 113.4 28.5)"/>
<ellipse cx="257.8" cy="72.6" rx="7.2" ry="1.9" fill="#3a6428" opacity=".5" transform="rotate(-60 257.8 72.6)"/>
<ellipse cx="93.7" cy="154.7" rx="5.6" ry="2.7" fill="#3a6428" opacity=".5" transform="rotate(-60 93.7 154.7)"/>
<ellipse cx="120.8" cy="121.5" rx="9.9" ry="2.2" fill="#2e5622" opacity=".5" transform="rotate(-60 120.8 121.5)"/>
<ellipse cx="102.9" cy="93.5" rx="5.3" ry="1.8" fill="#3a6428" opacity=".5" transform="rotate(-60 102.9 93.5)"/>
<ellipse cx="12.4" cy="309.1" rx="11.0" ry="1.7" fill="#a8d07a" opacity=".5" transform="rotate(-60 12.4 309.1)"/>
<ellipse cx="210.6" cy="202.5" rx="7.9" ry="2.6" fill="#2e5622" opacity=".5" transform="rotate(-60 210.6 202.5)"/>
</g></g>
<g filter="url(#b2)">
<ellipse cx="6" cy="150" rx="5" ry="16" fill="#cfd2cc" opacity=".55"/>
<ellipse cx="8" cy="205" rx="4" ry="10" fill="#cfd2cc" opacity=".45"/>
</g>
<path d="M-5,300 L90,230 L170,160 L245,100" stroke="#2e3a26" stroke-width="4" fill="none" opacity=".45" filter="url(#b2)"/>
<polygon points="214,160 248,150 250,185 222,190" fill="#4a4a48" opacity=".6" filter="url(#b4)"/>
<g filter="url(#b1)">
<ellipse cx="212.8" cy="214.7" rx="9.0" ry="2.3" fill="#6ea248" opacity=".6" transform="rotate(-60 212.8 214.7)"/>
<ellipse cx="285.5" cy="102.6" rx="5.9" ry="2.4" fill="#84b85a" opacity=".6" transform="rotate(-60 285.5 102.6)"/>
<ellipse cx="248.8" cy="154.4" rx="7.1" ry="2.2" fill="#6ea248" opacity=".6" transform="rotate(-60 248.8 154.4)"/>
<ellipse cx="138.5" cy="289.6" rx="4.6" ry="1.1" fill="#5a8f3c" opacity=".6" transform="rotate(-60 138.5 289.6)"/>
<ellipse cx="134.1" cy="305.0" rx="7.9" ry="2.0" fill="#5a8f3c" opacity=".6" transform="rotate(-60 134.1 305.0)"/>
<ellipse cx="200.8" cy="227.6" rx="8.0" ry="1.1" fill="#84b85a" opacity=".6" transform="rotate(-60 200.8 227.6)"/>
<ellipse cx="171.8" cy="257.4" rx="9.9" ry="2.5" fill="#84b85a" opacity=".6" transform="rotate(-60 171.8 257.4)"/>
<ellipse cx="216.4" cy="210.6" rx="5.0" ry="2.3" fill="#4a7a30" opacity=".6" transform="rotate(-60 216.4 210.6)"/>
<ellipse cx="173.9" cy="260.1" rx="10.0" ry="1.0" fill="#84b85a" opacity=".6" transform="rotate(-60 173.9 260.1)"/>
<ellipse cx="276.6" cy="114.6" rx="7.7" ry="1.3" fill="#5a8f3c" opacity=".6" transform="rotate(-60 276.6 114.6)"/>
<ellipse cx="175.3" cy="262.1" rx="8.1" ry="2.3" fill="#84b85a" opacity=".6" transform="rotate(-60 175.3 262.1)"/>
<ellipse cx="246.7" cy="174.1" rx="9.1" ry="1.1" fill="#5a8f3c" opacity=".6" transform="rotate(-60 246.7 174.1)"/>
<ellipse cx="224.8" cy="201.3" rx="8.2" ry="2.5" fill="#4a7a30" opacity=".6" transform="rotate(-60 224.8 201.3)"/>
<ellipse cx="260.1" cy="147.4" rx="9.4" ry="1.4" fill="#6ea248" opacity=".6" transform="rotate(-60 260.1 147.4)"/>
<ellipse cx="161.5" cy="278.9" rx="5.2" ry="1.4" fill="#84b85a" opacity=".6" transform="rotate(-60 161.5 278.9)"/>
<ellipse cx="239.1" cy="197.5" rx="6.2" ry="1.9" fill="#6ea248" opacity=".6" transform="rotate(-60 239.1 197.5)"/>
<ellipse cx="165.6" cy="272.4" rx="7.2" ry="1.6" fill="#5a8f3c" opacity=".6" transform="rotate(-60 165.6 272.4)"/>
<ellipse cx="128.6" cy="305.9" rx="6.5" ry="1.0" fill="#84b85a" opacity=".6" transform="rotate(-60 128.6 305.9)"/>
<ellipse cx="232.4" cy="203.6" rx="6.1" ry="1.8" fill="#84b85a" opacity=".6" transform="rotate(-60 232.4 203.6)"/>
<ellipse cx="195.2" cy="237.4" rx="6.9" ry="1.6" fill="#6ea248" opacity=".6" transform="rotate(-60 195.2 237.4)"/>
<ellipse cx="137.0" cy="301.2" rx="9.0" ry="1.9" fill="#84b85a" opacity=".6" transform="rotate(-60 137.0 301.2)"/>
<ellipse cx="201.4" cy="230.9" rx="6.2" ry="2.5" fill="#6ea248" opacity=".6" transform="rotate(-60 201.4 230.9)"/>
<ellipse cx="242.5" cy="173.1" rx="9.2" ry="1.8" fill="#5a8f3c" opacity=".6" transform="rotate(-60 242.5 173.1)"/>
<ellipse cx="270.6" cy="117.6" rx="8.3" ry="1.1" fill="#84b85a" opacity=".6" transform="rotate(-60 270.6 117.6)"/>
<ellipse cx="261.1" cy="131.6" rx="4.3" ry="1.4" fill="#6ea248" opacity=".6" transform="rotate(-60 261.1 131.6)"/>
<ellipse cx="184.6" cy="247.6" rx="6.4" ry="2.0" fill="#84b85a" opacity=".6" transform="rotate(-60 184.6 247.6)"/>
<ellipse cx="260.9" cy="134.9" rx="9.2" ry="2.1" fill="#5a8f3c" opacity=".6" transform="rotate(-60 260.9 134.9)"/>
<ellipse cx="218.8" cy="213.4" rx="4.3" ry="1.4" fill="#84b85a" opacity=".6" transform="rotate(-60 218.8 213.4)"/>
<ellipse cx="224.3" cy="215.5" rx="9.1" ry="2.3" fill="#4a7a30" opacity=".6" transform="rotate(-60 224.3 215.5)"/>
</g>
<g filter="url(#b1)">
<ellipse cx="314.9" cy="55.3" rx="4.6" ry="1.7" fill="#8cb86a" opacity=".6" transform="rotate(-60 314.9 55.3)"/>
<ellipse cx="329.8" cy="29.8" rx="4.5" ry="1.2" fill="#8cb86a" opacity=".6" transform="rotate(-60 329.8 29.8)"/>
<ellipse cx="316.4" cy="24.9" rx="6.8" ry="1.8" fill="#6a9a4a" opacity=".6" transform="rotate(-60 316.4 24.9)"/>
<ellipse cx="323.8" cy="38.0" rx="8.5" ry="1.8" fill="#8cb86a" opacity=".6" transform="rotate(-60 323.8 38.0)"/>
<ellipse cx="295.7" cy="42.4" rx="7.7" ry="1.3" fill="#8cb86a" opacity=".6" transform="rotate(-60 295.7 42.4)"/>
<ellipse cx="316.9" cy="24.7" rx="8.7" ry="1.6" fill="#7aa858" opacity=".6" transform="rotate(-60 316.9 24.7)"/>
<ellipse cx="272.8" cy="95.7" rx="4.3" ry="1.7" fill="#6a9a4a" opacity=".6" transform="rotate(-60 272.8 95.7)"/>
<ellipse cx="280.5" cy="27.6" rx="6.4" ry="1.5" fill="#6a9a4a" opacity=".6" transform="rotate(-60 280.5 27.6)"/>
<ellipse cx="336.1" cy="18.8" rx="5.7" ry="1.4" fill="#7aa858" opacity=".6" transform="rotate(-60 336.1 18.8)"/>
<ellipse cx="311.6" cy="18.3" rx="8.4" ry="1.0" fill="#8cb86a" opacity=".6" transform="rotate(-60 311.6 18.3)"/>
<ellipse cx="338.6" cy="11.6" rx="8.1" ry="1.7" fill="#7aa858" opacity=".6" transform="rotate(-60 338.6 11.6)"/>
<ellipse cx="272.1" cy="25.8" rx="7.3" ry="1.3" fill="#8cb86a" opacity=".6" transform="rotate(-60 272.1 25.8)"/>
<ellipse cx="298.3" cy="44.3" rx="7.3" ry="1.6" fill="#7aa858" opacity=".6" transform="rotate(-60 298.3 44.3)"/>
<ellipse cx="275.6" cy="45.4" rx="8.9" ry="1.3" fill="#7aa858" opacity=".6" transform="rotate(-60 275.6 45.4)"/>
<ellipse cx="289.5" cy="79.0" rx="4.3" ry="1.4" fill="#6a9a4a" opacity=".6" transform="rotate(-60 289.5 79.0)"/>
<ellipse cx="313.5" cy="14.5" rx="7.9" ry="1.9" fill="#8cb86a" opacity=".6" transform="rotate(-60 313.5 14.5)"/>
<ellipse cx="332.8" cy="5.4" rx="8.2" ry="1.5" fill="#6a9a4a" opacity=".6" transform="rotate(-60 332.8 5.4)"/>
<ellipse cx="316.1" cy="30.2" rx="4.9" ry="2.1" fill="#6a9a4a" opacity=".6" transform="rotate(-60 316.1 30.2)"/>
<ellipse cx="309.5" cy="35.8" rx="7.0" ry="1.9" fill="#8cb86a" opacity=".6" transform="rotate(-60 309.5 35.8)"/>
<ellipse cx="282.9" cy="41.1" rx="7.8" ry="1.8" fill="#7aa858" opacity=".6" transform="rotate(-60 282.9 41.1)"/>
<ellipse cx="312.8" cy="32.5" rx="6.5" ry="2.1" fill="#6a9a4a" opacity=".6" transform="rotate(-60 312.8 32.5)"/>
<ellipse cx="281.5" cy="3.3" rx="6.9" ry="1.3" fill="#7aa858" opacity=".6" transform="rotate(-60 281.5 3.3)"/>
<ellipse cx="296.2" cy="71.1" rx="6.4" ry="1.7" fill="#8cb86a" opacity=".6" transform="rotate(-60 296.2 71.1)"/>
<ellipse cx="290.3" cy="11.3" rx="4.4" ry="1.5" fill="#7aa858" opacity=".6" transform="rotate(-60 290.3 11.3)"/>
<ellipse cx="274.1" cy="57.0" rx="4.5" ry="1.2" fill="#8cb86a" opacity=".6" transform="rotate(-60 274.1 57.0)"/>
<ellipse cx="295.0" cy="58.1" rx="7.9" ry="1.5" fill="#8cb86a" opacity=".6" transform="rotate(-60 295.0 58.1)"/>
<ellipse cx="335.6" cy="9.0" rx="8.9" ry="2.0" fill="#8cb86a" opacity=".6" transform="rotate(-60 335.6 9.0)"/>
<ellipse cx="270.5" cy="74.5" rx="5.5" ry="2.1" fill="#7aa858" opacity=".6" transform="rotate(-60 270.5 74.5)"/>
<ellipse cx="321.2" cy="14.0" rx="4.4" ry="2.2" fill="#7aa858" opacity=".6" transform="rotate(-60 321.2 14.0)"/>
<ellipse cx="283.1" cy="48.6" rx="8.3" ry="1.9" fill="#7aa858" opacity=".6" transform="rotate(-60 283.1 48.6)"/>
<ellipse cx="280.4" cy="66.5" rx="8.4" ry="1.9" fill="#6a9a4a" opacity=".6" transform="rotate(-60 280.4 66.5)"/>
<ellipse cx="298.0" cy="34.9" rx="4.8" ry="2.0" fill="#7aa858" opacity=".6" transform="rotate(-60 298.0 34.9)"/>
<ellipse cx="295.6" cy="9.7" rx="7.8" ry="1.7" fill="#8cb86a" opacity=".6" transform="rotate(-60 295.6 9.7)"/>
<ellipse cx="312.8" cy="34.7" rx="4.0" ry="1.9" fill="#7aa858" opacity=".6" transform="rotate(-60 312.8 34.7)"/>
<ellipse cx="308.4" cy="68.6" rx="8.1" ry="1.3" fill="#7aa858" opacity=".6" transform="rotate(-60 308.4 68.6)"/>
<ellipse cx="314.4" cy="44.2" rx="7.4" ry="1.2" fill="#6a9a4a" opacity=".6" transform="rotate(-60 314.4 44.2)"/>
<ellipse cx="314.6" cy="55.9" rx="5.6" ry="1.4" fill="#7aa858" opacity=".6" transform="rotate(-60 314.6 55.9)"/>
<ellipse cx="274.2" cy="73.7" rx="5.4" ry="2.0" fill="#6a9a4a" opacity=".6" transform="rotate(-60 274.2 73.7)"/>
<ellipse cx="297.5" cy="11.3" rx="6.0" ry="1.4" fill="#8cb86a" opacity=".6" transform="rotate(-60 297.5 11.3)"/>
<ellipse cx="280.6" cy="9.9" rx="7.9" ry="1.2" fill="#7aa858" opacity=".6" transform="rotate(-60 280.6 9.9)"/>
<ellipse cx="291.9" cy="31.1" rx="4.4" ry="1.4" fill="#8cb86a" opacity=".6" transform="rotate(-60 291.9 31.1)"/>
<ellipse cx="303.3" cy="16.9" rx="6.9" ry="1.5" fill="#8cb86a" opacity=".6" transform="rotate(-60 303.3 16.9)"/>
<ellipse cx="295.2" cy="27.5" rx="7.1" ry="1.9" fill="#8cb86a" opacity=".6" transform="rotate(-60 295.2 27.5)"/>
</g>
</svg></div>
<!-- markers -->
<svg class="a" style="left:256px;top:195px" width="561" height="308" viewBox="0 0 561 308">
<path d="M332.5,104.5 L381.3,102.6" stroke="#1d8a3f" stroke-width="3"/>
<path d="M381.3,102.6 L416.8,100.2 L488.5,96.3" stroke="#dc1f2e" stroke-width="3"/>
<g font-family="Liberation Sans" font-size="11" text-anchor="middle">
<circle cx="332.5" cy="104.5" r="7.6" fill="#1d8a3f" stroke="#f2f2f2" stroke-width="1.6"/><text x="332.5" y="108.6" fill="#fff">3</text>
<circle cx="381.3" cy="102.6" r="7.6" fill="#dc1f2e" stroke="#f2f2f2" stroke-width="1.6"/><text x="381.3" y="106.7" fill="#fff">2</text>
<circle cx="416.8" cy="100.2" r="7.6" fill="#dc1f2e" stroke="#f2f2f2" stroke-width="1.6"/><text x="416.8" y="104.3" fill="#fff">1</text>
<circle cx="488.5" cy="96.3" r="7.6" fill="#6b7280" stroke="#e8e8e8" stroke-width="1.6"/><text x="488.5" y="100.4" fill="#f4f4f4">S</text>
</g></svg>
<!-- tooltip -->
<svg class="a" style="left:578px;top:316px" width="18" height="16" viewBox="0 0 18 16"><path d="M9 2L16 16H2z" fill="#e8eaee"/></svg>
<div class="a" style="left:500px;top:331px;width:175px;height:70px;background:#e8eaee;border-radius:9px"></div>
<div class="t" style="left:510px;top:344px;color:#1f6bc7;font-size:12.4px;font-weight:bold">Speed Info #3</div>
<div class="t" style="left:510px;top:361px;color:#444;font-size:11.8px">00:00:01.816 ~ 00:00:01.949</div>
<div class="t" style="left:510px;top:376px;color:#2b2b2b;font-size:12.8px;font-weight:bold">40.1 km/h</div>
<div class="a" style="left:706px;top:155px;width:91px;height:30px;background:#4a5058;border-radius:5px"></div>
<svg class="a" style="left:712px;top:160px" width="20" height="20" viewBox="0 0 20 20"><rect x="2.5" y="8.6" width="14.3" height="9.2" fill="none" stroke="#f4f4f4" stroke-width="1.2"/><path d="M9.7 1.8v5.6" stroke="#f4f4f4" stroke-width="1.1"/><path d="M7.3 5l2.4 2.5 2.4-2.5" fill="none" stroke="#f4f4f4" stroke-width="1.1"/></svg>
<div class="t" style="left:736px;top:165px;color:#f4f4f4;font-size:12.7px">Top View</div>

<!-- controls -->
<div class="a" style="left:256px;top:564px;width:561px;height:70px;background:#232a35"></div>
<div class="a" style="left:256px;top:594px;width:561px;height:1px;background:#161b22"></div>
<div class="a" style="left:266px;top:575px;width:413px;height:7px;border-radius:4px;background:#fff"></div>
<div class="a" style="left:266px;top:575px;width:194px;height:7px;border-radius:4px 0 0 4px;background:#00aeef"></div>
<div class="a" style="left:451px;top:570px;width:17px;height:17px;border-radius:50%;background:#fff;box-shadow:0 0 2px rgba(0,0,0,.4)"></div>
<svg class="a" style="left:696px;top:571px" width="22" height="17" viewBox="0 0 22 17"><path d="M1 5.5h3.5L10 1v15l-5.5-4.5H1z" fill="#fff"/><path d="M12.5 5.5a3.5 3.5 0 0 1 0 6M14.8 3.5a6 6 0 0 1 0 10M17.2 1.8a8.5 8.5 0 0 1 0 13.4" fill="none" stroke="#fff" stroke-width="1.2"/></svg>
<div class="a" style="left:726px;top:575px;width:74px;height:8px;border-radius:4px;background:#00aeef"></div>
<div class="a" style="left:791px;top:571px;width:16px;height:16px;border-radius:50%;background:#fff"></div>
<svg class="a" style="left:266px;top:603px" width="22" height="22" viewBox="0 0 22 22"><path d="M2 1.5L20 11L2 20.5z" fill="#fff"/></svg>
<div class="t" style="left:297px;top:609px;color:#fff;font-size:11px">00:00:01 / 00:00:04</div>
<div class="t" style="left:400px;top:609px;color:#a9afb8;font-size:11px">1920x1080 - mpeg4</div>
<div class="t" style="left:702px;top:609px;color:#fff;font-size:11.1px">Shortcuts</div>
<svg class="a" style="left:750px;top:608px" width="13" height="13" viewBox="0 0 13 13"><circle cx="6.5" cy="6.5" r="5.4" fill="none" stroke="#fff" stroke-width="1"/><text x="6.5" y="9.6" text-anchor="middle" font-family="Liberation Sans" font-size="8.5" fill="#fff">?</text></svg>
<div class="a" style="left:786px;top:613px;width:3px;height:3px;border-radius:50%;background:#fff;box-shadow:4.5px 0 0 #fff,9px 0 0 #fff"></div>

<!-- right panel -->
<div class="a" style="left:817px;top:136px;width:328px;height:522px;background:#fff;border:1px solid #bdbdc2;border-top:none"></div>
<svg class="a" style="left:834px;top:153px" width="10" height="12" viewBox="0 0 10 12"><path d="M7.5 1L2.5 6l5 5" fill="none" stroke="#111" stroke-width="2"/></svg>
<div class="t" style="left:848px;top:153px;color:#222;font-size:12.4px;font-weight:bold">Home</div>
<div class="a" style="left:830px;top:179px;width:302px;height:317px;background:#fff;border:1px solid #cfcfd4;border-radius:3px"></div>
<div class="t" style="left:843px;top:195px;color:#222;font-size:14px;font-weight:bold;letter-spacing:-0.1px">Step 3. Review Results</div>
<div class="t" style="left:843px;top:229px;color:#777;font-size:12px;font-weight:bold">Frame Rate</div>
<div class="t" style="left:913px;top:229px;color:#8d8d8d;font-size:11px">( Initial: 60 FPS )</div>
<svg class="a" style="left:1002px;top:227px" width="14" height="14" viewBox="0 0 14 14"><circle cx="7" cy="7" r="5.8" fill="none" stroke="#777" stroke-width="1.1"/><rect x="6.4" y="5.8" width="1.2" height="4.4" fill="#777"/><rect x="6.4" y="3.6" width="1.2" height="1.3" fill="#777"/></svg>
<div class="a" style="left:1049px;top:219px;width:70px;height:30px;border:1px solid #c9c9d0;border-radius:3px"></div>
<div class="t" style="left:1049px;top:229px;width:70px;text-align:center;color:#222;font-size:12px">60</div>
<div class="a" style="left:1049px;top:254px;width:70px;height:30px;border:1px solid #c9c9d0;border-radius:3px"></div>
<div class="t" style="left:1049px;top:264px;width:70px;text-align:center;color:#222;font-size:12px">45</div>
<div class="t" style="left:843px;top:264px;color:#777;font-size:12px;font-weight:bold">Speed Limit</div>
<div class="a" style="left:843px;top:294px;width:276px;height:1px;background:#e0e0e4"></div>
<div class="t" style="left:843px;top:308px;color:#777;font-size:12px;font-weight:bold">Results List</div>
<div class="a" style="left:843px;top:336px;width:276px;height:36px;background:#f6f6fb;border-radius:4px"></div>
<div class="t" style="left:853px;top:349px;color:#222;font-size:12px;font-weight:bold">No.</div>
<div class="t" style="left:878px;top:349px;color:#222;font-size:12px;font-weight:bold">Time</div>
<div class="t" style="left:996px;top:349px;color:#222;font-size:12.4px;font-weight:bold">Avg Speed (km/h)</div>

<div class="t" style="left:853px;top:386px;color:#222;font-size:12px">1</div>
<div class="t" style="left:878px;top:377px;color:#222;font-size:11.7px">00:00:01.574</div>
<div class="t" style="left:878px;top:394px;color:#222;font-size:11.9px">~ 00:00:01.733</div>
<div class="t" style="left:996px;top:386px;color:#d0303a;font-size:12px">49.7</div>
<div class="t" style="left:853px;top:423px;color:#222;font-size:12px">2</div>
<div class="t" style="left:878px;top:414px;color:#222;font-size:11.7px">00:00:01.733</div>
<div class="t" style="left:878px;top:431px;color:#222;font-size:11.9px">~ 00:00:01.816</div>
<div class="t" style="left:996px;top:423px;color:#d0303a;font-size:12px">46.8</div>
<div class="a" style="left:843px;top:446px;width:276px;height:37px;border:1px solid #3977c7;border-radius:8px"></div>
<div class="t" style="left:853px;top:460px;color:#222;font-size:12px">3</div>
<div class="t" style="left:878px;top:451px;color:#222;font-size:11.7px">00:00:01.816</div>
<div class="t" style="left:878px;top:468px;color:#222;font-size:11.9px">~ 00:00:01.949</div>
<div class="t" style="left:996px;top:460px;color:#222;font-size:12px">40.1</div>

<div class="a" style="left:911px;top:513px;width:70px;height:25px;background:#f3f3f6;border:1px solid #d2d2da"></div>
<div class="t" style="left:911px;top:521px;width:70px;text-align:center;color:#222;font-size:11.8px">Previous</div>
<div class="a" style="left:991px;top:513px;width:60px;height:25px;background:#f3f3f6;border:1.5px solid #1a7ad2"></div>
<div class="t" style="left:991px;top:521px;width:60px;text-align:center;color:#222;font-size:12px">Export</div>
<div class="t" style="left:951px;top:551px;color:#5a68dc;font-size:12.4px;text-decoration:underline">Open Help</div>

<div class="a" style="left:1px;top:37px;width:1px;height:627px;background:#2a2d33"></div>
<div class="a" style="left:1px;top:663.5px;width:1150px;height:1px;background:#2a2d33"></div>
</body></html>
